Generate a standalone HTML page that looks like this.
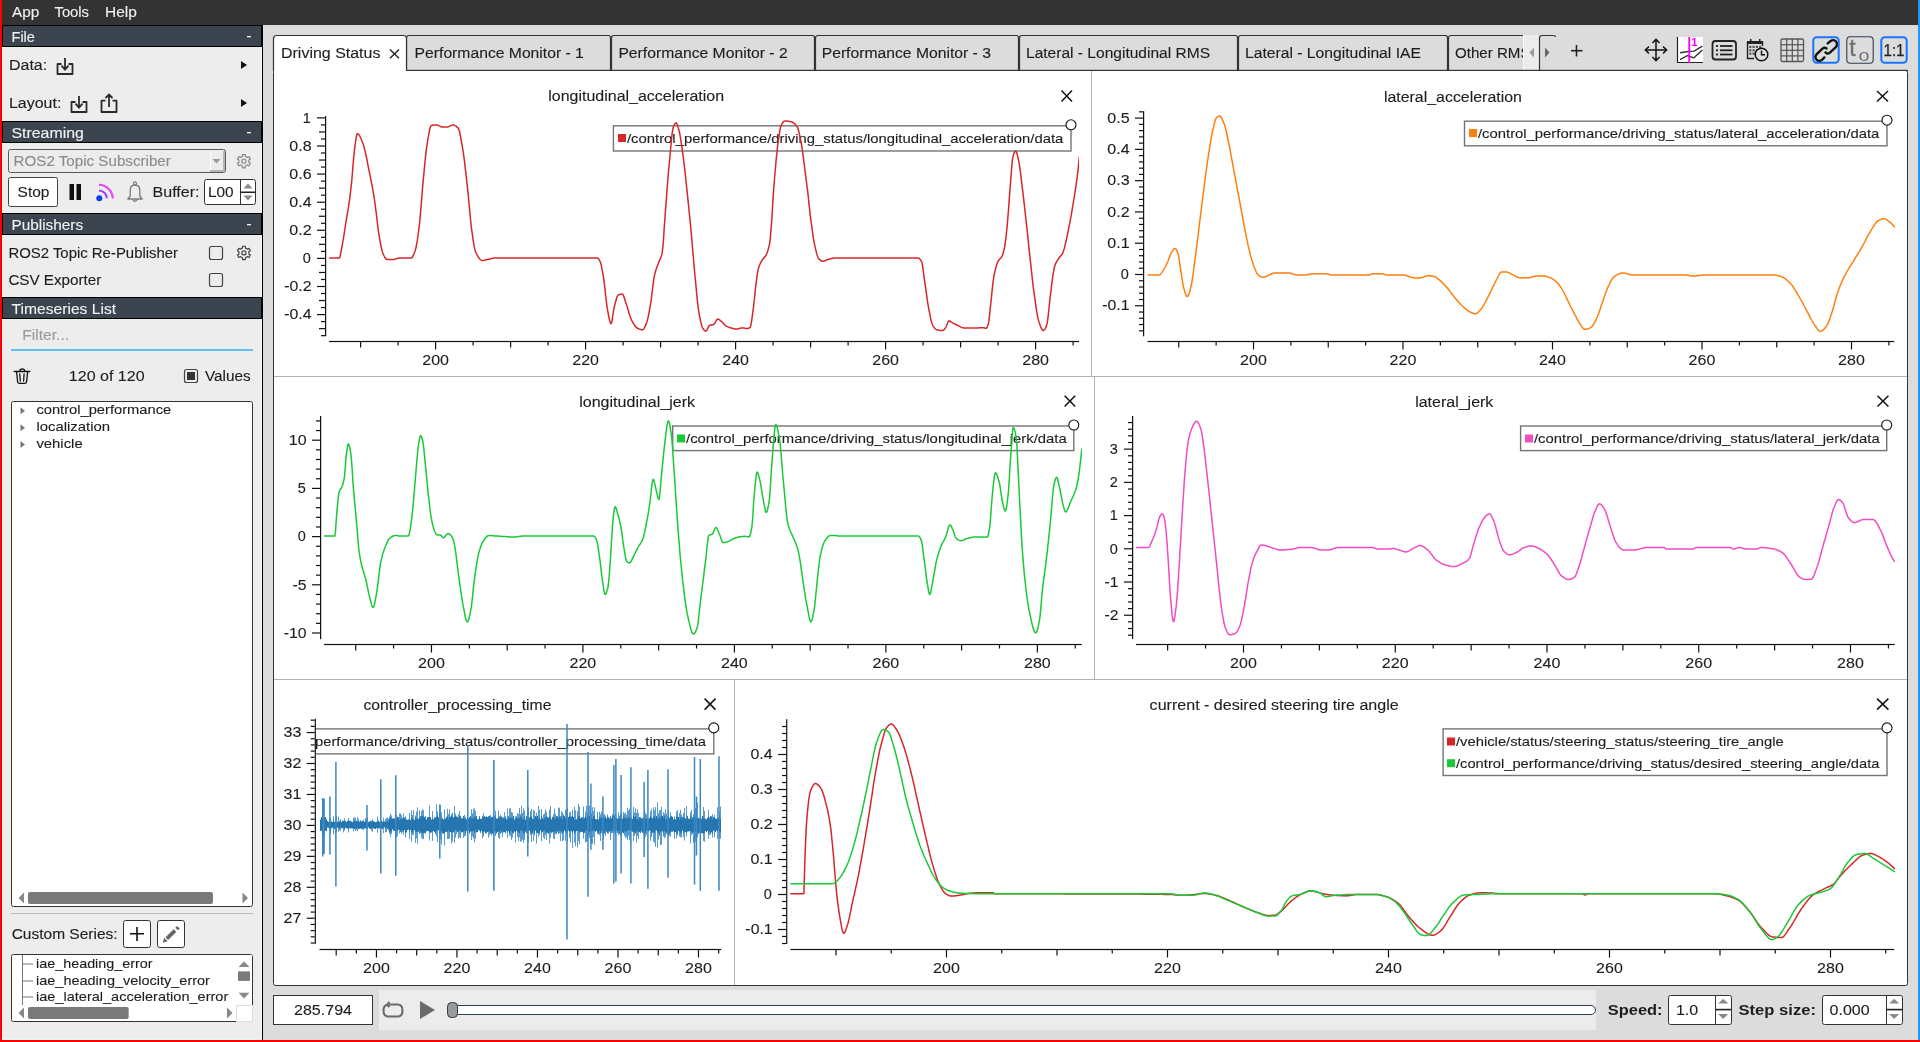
<!DOCTYPE html>
<html><head><meta charset="utf-8"><style>
html,body{margin:0;padding:0;width:1920px;height:1042px;overflow:hidden;background:#dcdcdc;font-family:"Liberation Sans",sans-serif}
</style></head><body>
<svg width="1920" height="1042" viewBox="0 0 1920 1042" style="position:absolute;left:0;top:0;will-change:transform"><g font-family="Liberation Sans"><rect x="0.00" y="0.00" width="2.00" height="1042.00" fill="#ff0000" /><rect x="0.00" y="1040.00" width="1920.00" height="2.00" fill="#ff0000" /><rect x="1918.00" y="0.00" width="2.00" height="1040.00" fill="#2196f3" /><rect x="2.00" y="0.00" width="1916.00" height="25.00" fill="#333333" /><text x="12.00" y="17.00" font-size="14.49" fill="#f0f0f0" stroke="#f0f0f0" stroke-width="0.12" textLength="27.36" lengthAdjust="spacingAndGlyphs" >App</text><text x="54.50" y="17.00" font-size="14.49" fill="#f0f0f0" stroke="#f0f0f0" stroke-width="0.12" textLength="34.50" lengthAdjust="spacingAndGlyphs" >Tools</text><text x="105.00" y="17.00" font-size="14.49" fill="#f0f0f0" stroke="#f0f0f0" stroke-width="0.12" textLength="31.92" lengthAdjust="spacingAndGlyphs" >Help</text><rect x="2.00" y="25.00" width="260.00" height="1015.00" fill="#ededed" /><rect x="2.00" y="25.00" width="1.00" height="1015.00" fill="#e6fbfb" /><rect x="2.00" y="1039.00" width="260.00" height="1.00" fill="#e6fbfb" /><rect x="262.00" y="25.00" width="1.00" height="1015.00" fill="#000" /><rect x="261.00" y="47.00" width="1.00" height="992.00" fill="#fafafa" /><rect x="2.00" y="25.00" width="261.00" height="22.00" fill="#000" /><rect x="3.00" y="26.00" width="258.00" height="20.00" fill="#3c4450" /><text x="11.50" y="41.60" font-size="14.49" fill="#f2f2f2" stroke="#f2f2f2" stroke-width="0.12" textLength="23.44" lengthAdjust="spacingAndGlyphs" >File</text><rect x="247.00" y="36.00" width="4.00" height="1.30" fill="#f2f2f2" /><text x="9.00" y="70.00" font-size="14.49" fill="#1e1e1e" stroke="#1e1e1e" stroke-width="0.12" textLength="38.16" lengthAdjust="spacingAndGlyphs" >Data:</text><path d="M61.5,64.0 H57.5 V74.0 H72.5 V64.0 H68.5" fill="none" stroke="#2a2a2a" stroke-width="1.8" stroke-linejoin="round"/><path d="M65.0,58.0 V69.6 M61.5,65.7 L65.0,69.6 L68.5,65.7" fill="none" stroke="#2a2a2a" stroke-width="1.8"/><path d="M241,61 L247,65 L241,69 Z" fill="#111"/><text x="9.00" y="108.20" font-size="14.49" fill="#1e1e1e" stroke="#1e1e1e" stroke-width="0.12" textLength="52.31" lengthAdjust="spacingAndGlyphs" >Layout:</text><path d="M75.5,102.0 H71.5 V112.0 H86.5 V102.0 H82.5" fill="none" stroke="#2a2a2a" stroke-width="1.8" stroke-linejoin="round"/><path d="M79.0,96.0 V107.6 M75.5,103.7 L79.0,107.6 L82.5,103.7" fill="none" stroke="#2a2a2a" stroke-width="1.8"/><path d="M105.5,100.7 H101.5 V112.0 H116.5 V100.7 H112.5" fill="none" stroke="#2a2a2a" stroke-width="1.8" stroke-linejoin="round"/><path d="M109.0,106.9 V95.0 M105.5,98.0 L109.0,94.5 L112.5,98.0" fill="none" stroke="#2a2a2a" stroke-width="1.8"/><path d="M241,99 L247,103 L241,107 Z" fill="#111"/><rect x="2.00" y="121.00" width="261.00" height="22.00" fill="#000" /><rect x="3.00" y="122.00" width="258.00" height="20.00" fill="#3c4450" /><text x="11.50" y="137.60" font-size="14.49" fill="#f2f2f2" stroke="#f2f2f2" stroke-width="0.12" textLength="72.31" lengthAdjust="spacingAndGlyphs" >Streaming</text><rect x="247.00" y="132.00" width="4.00" height="1.30" fill="#f2f2f2" /><rect x="8.5" y="149.5" width="217" height="23" rx="2" fill="#ececec" stroke="#5a5a5a" stroke-width="1"/><rect x="210.00" y="151.00" width="14.00" height="20.00" fill="#ececec" /><rect x="210.00" y="151.00" width="1.00" height="20.00" fill="#ffffff" /><rect x="223.00" y="151.00" width="2.00" height="21.00" fill="#b4b4b4" /><rect x="210.00" y="170.00" width="15.00" height="2.00" fill="#b4b4b4" /><path d="M212.5,159 L220.5,159 L216.5,163.5 Z" fill="#9a9a9a"/><text x="13.60" y="165.70" font-size="14.49" fill="#8c8c8c" stroke="#8c8c8c" stroke-width="0.12" textLength="157.20" lengthAdjust="spacingAndGlyphs" >ROS2 Topic Subscriber</text><path d="M241.38,156.84 L242.43,156.39 L242.49,154.55 L245.31,154.55 L245.37,156.39 L246.42,156.84 L247.33,157.52 L248.95,156.65 L250.37,159.10 L248.80,160.07 L248.93,161.20 L248.80,162.33 L250.37,163.30 L248.95,165.75 L247.33,164.88 L246.42,165.56 L245.37,166.01 L245.31,167.85 L242.49,167.85 L242.43,166.01 L241.38,165.56 L240.47,164.88 L238.85,165.75 L237.43,163.30 L239.00,162.33 L238.87,161.20 L239.00,160.07 L237.43,159.10 L238.85,156.65 L240.47,157.52Z" fill="none" stroke="#8a8a8a" stroke-width="1.2" stroke-linejoin="round"/><circle cx="243.9" cy="161.2" r="2.04" fill="none" stroke="#8a8a8a" stroke-width="1.2"/><rect x="8.5" y="177.5" width="49" height="29" rx="2" fill="#ffffff" stroke="#444" stroke-width="1"/><text x="17.60" y="196.60" font-size="14.49" fill="#1e1e1e" stroke="#1e1e1e" stroke-width="0.12" textLength="31.83" lengthAdjust="spacingAndGlyphs" >Stop</text><rect x="69.50" y="184.00" width="4.50" height="16.00" fill="#111" /><rect x="76.50" y="184.00" width="4.50" height="16.00" fill="#111" /><path d="M127.8,199 L130.2,196 L130.2,190.5 Q130.2,185 135,185 Q139.8,185 139.8,190.5 L139.8,196 L142.2,199 Z" fill="none" stroke="#7a7a7a" stroke-width="1.3" stroke-linejoin="round"/><path d="M133,199.6 Q135,203.2 137,199.6" fill="none" stroke="#7a7a7a" stroke-width="1.2"/><circle cx="135" cy="183.4" r="1.5" fill="none" stroke="#7a7a7a" stroke-width="1.1"/><circle cx="99.3" cy="198.3" r="3" fill="#0a3cf5"/><path d="M99,190.5 A8,8 0 0 1 106.8,198.3" fill="none" stroke="#a040f0" stroke-width="2.1"/><path d="M99,184.8 A14,14 0 0 1 112.8,198.6" fill="none" stroke="#e846f5" stroke-width="2.1"/><text x="152.60" y="196.60" font-size="14.49" fill="#1e1e1e" stroke="#1e1e1e" stroke-width="0.12" textLength="46.97" lengthAdjust="spacingAndGlyphs" >Buffer:</text><rect x="204.5" y="179.5" width="51" height="25" rx="2" fill="#fff" stroke="#333" stroke-width="1"/><rect x="240.00" y="180.00" width="1.00" height="24.00" fill="#333" /><rect x="241.00" y="191.50" width="14.00" height="1.50" fill="#222" /><path d="M243.5,188.5 L252.5,188.5 L248,183.5 Z" fill="#8a8a8a"/><path d="M243.5,195.5 L252.5,195.5 L248,200.5 Z" fill="#8a8a8a"/><text x="208.00" y="196.60" font-size="14.49" fill="#1e1e1e" stroke="#1e1e1e" stroke-width="0.12" textLength="25.62" lengthAdjust="spacingAndGlyphs" >L00</text><rect x="2.00" y="213.00" width="261.00" height="22.00" fill="#000" /><rect x="3.00" y="214.00" width="258.00" height="20.00" fill="#3c4450" /><text x="11.50" y="229.60" font-size="14.49" fill="#f2f2f2" stroke="#f2f2f2" stroke-width="0.12" textLength="71.58" lengthAdjust="spacingAndGlyphs" >Publishers</text><rect x="247.00" y="224.00" width="4.00" height="1.30" fill="#f2f2f2" /><text x="8.40" y="257.80" font-size="14.49" fill="#1e1e1e" stroke="#1e1e1e" stroke-width="0.12" textLength="169.70" lengthAdjust="spacingAndGlyphs" >ROS2 Topic Re-Publisher</text><rect x="209.5" y="246.5" width="13" height="13" rx="2" fill="#ededed" stroke="#444" stroke-width="1.2"/><path d="M241.38,248.54 L242.43,248.09 L242.49,246.25 L245.31,246.25 L245.37,248.09 L246.42,248.54 L247.33,249.22 L248.95,248.35 L250.37,250.80 L248.80,251.77 L248.93,252.90 L248.80,254.03 L250.37,255.00 L248.95,257.45 L247.33,256.58 L246.42,257.26 L245.37,257.71 L245.31,259.55 L242.49,259.55 L242.43,257.71 L241.38,257.26 L240.47,256.58 L238.85,257.45 L237.43,255.00 L239.00,254.03 L238.87,252.90 L239.00,251.77 L237.43,250.80 L238.85,248.35 L240.47,249.22Z" fill="none" stroke="#444" stroke-width="1.2" stroke-linejoin="round"/><circle cx="243.9" cy="252.9" r="2.04" fill="none" stroke="#444" stroke-width="1.2"/><text x="8.40" y="284.50" font-size="14.49" fill="#1e1e1e" stroke="#1e1e1e" stroke-width="0.12" textLength="92.89" lengthAdjust="spacingAndGlyphs" >CSV Exporter</text><rect x="209.5" y="273.5" width="13" height="13" rx="2" fill="#ededed" stroke="#444" stroke-width="1.2"/><rect x="2.00" y="297.00" width="261.00" height="22.00" fill="#000" /><rect x="3.00" y="298.00" width="258.00" height="20.00" fill="#3c4450" /><text x="11.50" y="313.60" font-size="14.49" fill="#f2f2f2" stroke="#f2f2f2" stroke-width="0.12" textLength="104.66" lengthAdjust="spacingAndGlyphs" >Timeseries List</text><text x="22.30" y="340.20" font-size="14.49" fill="#9a9a9a" stroke="#9a9a9a" stroke-width="0.12" textLength="46.75" lengthAdjust="spacingAndGlyphs" >Filter...</text><rect x="11.00" y="349.00" width="242.00" height="2.00" fill="#5ec2f6" /><path d="M14.2,371.5 H29.8 M19.6,371.3 A2.7,2.9 0 0 1 24.9,371.3 M16.6,372 L17.6,381.8 Q17.9,383.4 19.6,383.4 H24.6 Q26.3,383.4 26.6,381.8 L27.6,372 M19.7,374 L20.3,381 M24.1,374 L23.6,381" fill="none" stroke="#111" stroke-width="1.3" stroke-linecap="round" stroke-linejoin="round"/><text x="68.80" y="381.20" font-size="14.49" fill="#1e1e1e" stroke="#1e1e1e" stroke-width="0.12" textLength="75.84" lengthAdjust="spacingAndGlyphs" >120 of 120</text><rect x="184.5" y="369.5" width="13" height="13" rx="2" fill="#ededed" stroke="#444" stroke-width="1.2"/><rect x="187.00" y="372.00" width="8.00" height="8.00" fill="#333" /><text x="205.00" y="381.20" font-size="14.49" fill="#1e1e1e" stroke="#1e1e1e" stroke-width="0.12" textLength="45.75" lengthAdjust="spacingAndGlyphs" >Values</text><rect x="11.5" y="401.5" width="241" height="505" rx="2" fill="#fff" stroke="#333" stroke-width="1"/><path d="M20.5,407.2 L25,410.7 L20.5,414.2 Z" fill="#777"/><text x="36.40" y="414.30" font-size="13.45" fill="#1e1e1e" stroke="#1e1e1e" stroke-width="0.12" textLength="134.83" lengthAdjust="spacingAndGlyphs" >control_performance</text><path d="M20.5,424.2 L25,427.7 L20.5,431.2 Z" fill="#777"/><text x="36.40" y="431.30" font-size="13.45" fill="#1e1e1e" stroke="#1e1e1e" stroke-width="0.12" textLength="73.61" lengthAdjust="spacingAndGlyphs" >localization</text><path d="M20.5,441.0 L25,444.5 L20.5,448.0 Z" fill="#777"/><text x="36.40" y="448.10" font-size="13.45" fill="#1e1e1e" stroke="#1e1e1e" stroke-width="0.12" textLength="46.31" lengthAdjust="spacingAndGlyphs" >vehicle</text><rect x="28" y="892" width="185" height="12" rx="2" fill="#7a7a7a"/><path d="M24,892.5 L18.6,898 L24,903.5 Z" fill="#888"/><path d="M242.5,892.5 L248,898 L242.5,903.5 Z" fill="#888"/><rect x="11.00" y="913.00" width="242.00" height="1.00" fill="#bdbdbd" /><text x="11.70" y="939.00" font-size="14.49" fill="#1e1e1e" stroke="#1e1e1e" stroke-width="0.12" textLength="105.86" lengthAdjust="spacingAndGlyphs" >Custom Series:</text><rect x="123.5" y="920.5" width="27" height="27" rx="2.2" fill="#fff" stroke="#333" stroke-width="1"/><path d="M137,927 V941 M130,933.7 H144" stroke="#111" stroke-width="1.6"/><rect x="157.5" y="920.5" width="27" height="27" rx="2.2" fill="#fff" stroke="#333" stroke-width="1"/><path d="M166.8,938.6 L175,930.6 M176.6,929 L178.4,927.2" stroke="#666" stroke-width="3.7" fill="none"/><path d="M162.8,942.7 L164.2,937.8 L167.7,941.3 Z" fill="#666"/><rect x="11.5" y="954.5" width="241" height="67" rx="2" fill="#fff" stroke="#333" stroke-width="1"/><rect x="22.00" y="955.00" width="1.00" height="50.00" fill="#777" /><rect x="23.00" y="963.50" width="10.00" height="1.00" fill="#777" /><text x="36.00" y="968.00" font-size="13.45" fill="#1e1e1e" stroke="#1e1e1e" stroke-width="0.12" textLength="116.61" lengthAdjust="spacingAndGlyphs" >iae_heading_error</text><rect x="23.00" y="980.50" width="10.00" height="1.00" fill="#777" /><text x="36.00" y="985.00" font-size="13.45" fill="#1e1e1e" stroke="#1e1e1e" stroke-width="0.12" textLength="173.92" lengthAdjust="spacingAndGlyphs" >iae_heading_velocity_error</text><rect x="23.00" y="996.50" width="10.00" height="1.00" fill="#777" /><text x="36.00" y="1001.40" font-size="13.45" fill="#1e1e1e" stroke="#1e1e1e" stroke-width="0.12" textLength="192.23" lengthAdjust="spacingAndGlyphs" >iae_lateral_acceleration_error</text><rect x="236.00" y="955.00" width="16.00" height="50.00" fill="#fff" /><path d="M238.6,967 L244,961.6 L249.5,967 Z" fill="#888"/><rect x="238.00" y="971.40" width="12.00" height="9.50" fill="#7a7a7a" /><path d="M238.6,992.7 L244,998.5 L249.5,992.7 Z" fill="#888"/><rect x="28" y="1007" width="100.7" height="12" rx="2" fill="#7a7a7a"/><path d="M24,1007.5 L18.6,1013 L24,1018.5 Z" fill="#888"/><path d="M227,1007.5 L232.5,1013 L227,1018.5 Z" fill="#888"/><rect x="236.5" y="1005.5" width="16" height="16" fill="#fff" stroke="#ddd" stroke-width="1"/><rect x="273.5" y="70.5" width="1634" height="915" rx="2" fill="#fff" stroke="#333" stroke-width="1"/><path d="M406.5,70.5 V38 Q406.5,35.5 409,35.5 H608.5 Q610.5,35.5 610.5,38 V70.5" fill="#dcdcdc" stroke="#333333" stroke-width="1.2"/><text x="414.60" y="58.20" font-size="14.49" fill="#1e1e1e" stroke="#1e1e1e" stroke-width="0.12" textLength="169.25" lengthAdjust="spacingAndGlyphs" >Performance Monitor - 1</text><path d="M611.5,70.5 V38 Q611.5,35.5 614,35.5 H812.5 Q814.5,35.5 814.5,38 V70.5" fill="#dcdcdc" stroke="#333333" stroke-width="1.2"/><text x="618.40" y="58.20" font-size="14.49" fill="#1e1e1e" stroke="#1e1e1e" stroke-width="0.12" textLength="169.25" lengthAdjust="spacingAndGlyphs" >Performance Monitor - 2</text><path d="M815.5,70.5 V38 Q815.5,35.5 818,35.5 H1016.5 Q1018.5,35.5 1018.5,38 V70.5" fill="#dcdcdc" stroke="#333333" stroke-width="1.2"/><text x="821.70" y="58.20" font-size="14.49" fill="#1e1e1e" stroke="#1e1e1e" stroke-width="0.12" textLength="169.25" lengthAdjust="spacingAndGlyphs" >Performance Monitor - 3</text><path d="M1019.5,70.5 V38 Q1019.5,35.5 1022,35.5 H1235.5 Q1237.5,35.5 1237.5,38 V70.5" fill="#dcdcdc" stroke="#333333" stroke-width="1.2"/><text x="1026.00" y="58.20" font-size="14.49" fill="#1e1e1e" stroke="#1e1e1e" stroke-width="0.12" textLength="184.06" lengthAdjust="spacingAndGlyphs" >Lateral - Longitudinal RMS</text><path d="M1238.5,70.5 V38 Q1238.5,35.5 1241,35.5 H1445.5 Q1447.5,35.5 1447.5,38 V70.5" fill="#dcdcdc" stroke="#333333" stroke-width="1.2"/><text x="1245.00" y="58.20" font-size="14.49" fill="#1e1e1e" stroke="#1e1e1e" stroke-width="0.12" textLength="175.92" lengthAdjust="spacingAndGlyphs" >Lateral - Longitudinal IAE</text><defs><clipPath id="tabclip"><rect x="1448" y="30" width="75" height="45"/></clipPath></defs><path d="M1448.5,70.5 V38 Q1448.5,35.5 1451,35.5 H1530" fill="#dcdcdc" stroke="#333333" stroke-width="1.2" clip-path="url(#tabclip)"/><g clip-path="url(#tabclip)"><text x="1455.00" y="58.20" font-size="14.49" fill="#1e1e1e" stroke="#1e1e1e" stroke-width="0.12" textLength="120.77" lengthAdjust="spacingAndGlyphs" >Other RMS Errors</text></g><rect x="1523.00" y="35.00" width="16.00" height="35.00" fill="#ececec" /><rect x="1523.00" y="35.00" width="1.00" height="35.00" fill="#fafafa" /><path d="M1534,47.5 L1529.5,52.5 L1534,57.5 Z" fill="#9a9a9a"/><path d="M1539.5,70.5 V38 Q1539.5,35.5 1542,35.5 H1553 Q1555.5,35.5 1555.5,37" fill="none" stroke="#333333" stroke-width="1.2"/><path d="M1545,47.5 L1549.5,52.5 L1545,57.5 Z" fill="#666"/><rect x="406.00" y="69.80" width="1502.00" height="1.20" fill="#333333" /><path d="M273.5,71 V38.5 Q273.5,35.5 276.5,35.5 H403.5 Q406.5,35.5 406.5,38.5 V71" fill="#fff" stroke="#333333" stroke-width="1.2"/><rect x="274.20" y="70.00" width="131.60" height="2.00" fill="#fff" /><text x="281.00" y="58.20" font-size="14.49" fill="#1e1e1e" stroke="#1e1e1e" stroke-width="0.12" textLength="99.42" lengthAdjust="spacingAndGlyphs" >Driving Status</text><line x1="390.00" y1="49.50" x2="399.00" y2="58.30" stroke="#222" stroke-width="1.4" /><line x1="399.00" y1="49.50" x2="390.00" y2="58.30" stroke="#222" stroke-width="1.4" /><line x1="1576.50" y1="45.00" x2="1576.50" y2="56.50" stroke="#222" stroke-width="1.6" /><line x1="1571.00" y1="50.70" x2="1582.50" y2="50.70" stroke="#222" stroke-width="1.6" /><path d="M1656,39.5 V60.5 M1645.5,50 H1666.5 M1652.5,43 L1656,39.3 L1659.5,43 M1652.5,57 L1656,60.7 L1659.5,57 M1649,46.5 L1645.3,50 L1649,53.5 M1663,46.5 L1666.7,50 L1663,53.5" fill="none" stroke="#111" stroke-width="1.5"/><rect x="1677.00" y="37.00" width="26.00" height="26.00" fill="#fff" /><path d="M1677.5,37 V62.5 H1703" fill="none" stroke="#222" stroke-width="1.2"/><path d="M1680.1,52.8 L1686.7,51.7 L1694,51.1 L1702.4,46.2 M1680.1,59.6 L1687.4,55.5 L1693.6,57.9 L1702.4,49.9" fill="none" stroke="#333" stroke-width="1.4" stroke-linejoin="round"/><rect x="1688.30" y="37.00" width="1.90" height="26.00" fill="#ff00ff" /><text x="1691.3" y="45.6" font-size="10.5" font-weight="bold" fill="#ff00ff" textLength="6.3" lengthAdjust="spacingAndGlyphs">1</text><rect x="1712.5" y="41" width="23.5" height="18.5" rx="3" fill="none" stroke="#222" stroke-width="1.8"/><rect x="1716.00" y="45.10" width="2.00" height="1.80" fill="#222" /><rect x="1720.00" y="45.10" width="12.50" height="1.80" fill="#222" /><rect x="1716.00" y="49.40" width="2.00" height="1.80" fill="#222" /><rect x="1720.00" y="49.40" width="12.50" height="1.80" fill="#222" /><rect x="1716.00" y="53.60" width="2.00" height="1.80" fill="#222" /><rect x="1720.00" y="53.60" width="12.50" height="1.80" fill="#222" /><path d="M1747.5,42 H1762.5 V46 M1747.5,42 V58.5 H1754" fill="none" stroke="#222" stroke-width="1.4"/><rect x="1747.00" y="41.00" width="16.00" height="3.00" fill="#222" /><rect x="1750.00" y="39.00" width="1.50" height="3.00" fill="#222" /><rect x="1759.00" y="39.00" width="1.50" height="3.00" fill="#222" /><rect x="1749.20" y="45.80" width="2.20" height="2.20" fill="#555" /><rect x="1749.20" y="49.20" width="2.20" height="2.20" fill="#555" /><rect x="1749.20" y="52.60" width="2.20" height="2.20" fill="#555" /><rect x="1752.50" y="45.80" width="2.20" height="2.20" fill="#555" /><rect x="1752.50" y="49.20" width="2.20" height="2.20" fill="#555" /><rect x="1752.50" y="52.60" width="2.20" height="2.20" fill="#555" /><rect x="1755.80" y="45.80" width="2.20" height="2.20" fill="#555" /><rect x="1755.80" y="49.20" width="2.20" height="2.20" fill="#555" /><rect x="1755.80" y="52.60" width="2.20" height="2.20" fill="#555" /><rect x="1759.10" y="45.80" width="2.20" height="2.20" fill="#555" /><rect x="1759.10" y="49.20" width="2.20" height="2.20" fill="#555" /><rect x="1759.10" y="52.60" width="2.20" height="2.20" fill="#555" /><circle cx="1761.5" cy="54.5" r="6.3" fill="#dcdcdc" stroke="#111" stroke-width="1.5"/><path d="M1761.5,50.5 V54.8 H1765" fill="none" stroke="#111" stroke-width="1.4"/><rect x="1781" y="39" width="22.5" height="22.5" rx="1.5" fill="none" stroke="#555" stroke-width="1.3"/><rect x="1786.10" y="39.00" width="1.20" height="22.50" fill="#555" /><rect x="1781.00" y="44.10" width="22.50" height="1.20" fill="#555" /><rect x="1791.70" y="39.00" width="1.20" height="22.50" fill="#555" /><rect x="1781.00" y="49.70" width="22.50" height="1.20" fill="#555" /><rect x="1797.30" y="39.00" width="1.20" height="22.50" fill="#555" /><rect x="1781.00" y="55.30" width="22.50" height="1.20" fill="#555" /><rect x="1813.3" y="37.3" width="25.4" height="25.4" rx="3.5" fill="#dcdcdc" stroke="#1a73ff" stroke-width="2"/><path transform="translate(1826,50.5) scale(0.9) translate(-1826,-50.5)" d="M1827.8,42.6 L1830.8,40.2 Q1834.5,37.6 1837.2,40.6 Q1839.6,44 1836.4,47.4 L1830,53.2 Q1827.6,55 1825.4,52.6 M1826.6,48.2 Q1824.4,46.4 1821.8,48.6 L1816,54.2 Q1812.8,57.6 1815.4,60.6 Q1818.6,63.4 1821.8,60.6 L1824.2,58.2" fill="none" stroke="#111" stroke-width="2.6" stroke-linecap="round" stroke-linejoin="round"/><rect x="1846.8" y="36.8" width="26.4" height="26.4" rx="3.5" fill="#dcdcdc" stroke="#2c3e50" stroke-width="1.1"/><text x="1849.3" y="56.3" font-size="23" fill="#737373" stroke="#737373" stroke-width="0.4">t</text><text x="1858.5" y="60.5" font-size="16" fill="#737373" textLength="11" lengthAdjust="spacingAndGlyphs">o</text><rect x="1881.3" y="37.3" width="25.4" height="25.4" rx="3.5" fill="#dcdcdc" stroke="#1a73ff" stroke-width="2"/><text x="1883.5" y="56" font-size="17" fill="#222" stroke="#222" stroke-width="0.25" textLength="21" lengthAdjust="spacingAndGlyphs">1:1</text><rect x="1091.00" y="71.00" width="1.00" height="305.00" fill="#b4b4b4" /><rect x="274.00" y="376.00" width="1633.00" height="1.00" fill="#b4b4b4" /><rect x="1094.00" y="377.00" width="1.00" height="302.00" fill="#b4b4b4" /><rect x="274.00" y="679.00" width="1633.00" height="1.00" fill="#b4b4b4" /><rect x="734.00" y="680.00" width="1.00" height="305.00" fill="#b4b4b4" /><rect x="273.5" y="995.5" width="99" height="29" fill="#fff" stroke="#333" stroke-width="1"/><text x="294.05" y="1015.00" font-size="14.49" fill="#1e1e1e" stroke="#1e1e1e" stroke-width="0.12" textLength="57.91" lengthAdjust="spacingAndGlyphs" >285.794</text><rect x="379.00" y="990.00" width="1217.00" height="40.00" fill="#ececec" /><path d="M389,1004.5 H397.5 Q402.5,1004.5 402.5,1010.5 Q402.5,1016.5 397.5,1016.5 H388.5 Q383.5,1016.5 383.5,1010.5 Q383.5,1005.5 387.5,1004.8 M389.5,1002 L387,1004.6 L389.5,1007" fill="none" stroke="#6a6a6a" stroke-width="2.1"/><path d="M420,1001 L435,1010 L420,1019 Z" fill="#6a6a6a"/><rect x="450.5" y="1005.5" width="1145" height="9" rx="4.5" fill="#fff" stroke="#2c3e50" stroke-width="1"/><rect x="447.5" y="1002.5" width="10" height="15" rx="4" fill="#9a9a9a" stroke="#2c3e50" stroke-width="1"/><text x="1607.80" y="1015.30" font-size="14.49" font-weight="bold" fill="#1e1e1e" textLength="54.72" lengthAdjust="spacingAndGlyphs" >Speed:</text><rect x="1668.5" y="995.5" width="63.0" height="29" rx="2" fill="#fff" stroke="#333" stroke-width="1"/><rect x="1715.00" y="996.00" width="1.00" height="28.00" fill="#333" /><rect x="1715.50" y="1008.80" width="15.50" height="1.60" fill="#222" /><path d="M1718.2,1003.5 L1728.2,1003.5 L1723.2,998.8 Z" fill="#8a8a8a"/><path d="M1718.2,1014 L1728.2,1014 L1723.2,1019 Z" fill="#8a8a8a"/><text x="1675.90" y="1015.30" font-size="14.49" fill="#1e1e1e" stroke="#1e1e1e" stroke-width="0.12" textLength="22.27" lengthAdjust="spacingAndGlyphs" >1.0</text><rect x="1822.5" y="995.5" width="80.0" height="29" rx="2" fill="#fff" stroke="#333" stroke-width="1"/><rect x="1886.00" y="996.00" width="1.00" height="28.00" fill="#333" /><rect x="1886.50" y="1008.80" width="15.50" height="1.60" fill="#222" /><path d="M1889.2,1003.5 L1899.2,1003.5 L1894.2,998.8 Z" fill="#8a8a8a"/><path d="M1889.2,1014 L1899.2,1014 L1894.2,1019 Z" fill="#8a8a8a"/><text x="1829.60" y="1015.30" font-size="14.49" fill="#1e1e1e" stroke="#1e1e1e" stroke-width="0.12" textLength="40.09" lengthAdjust="spacingAndGlyphs" >0.000</text><text x="1738.50" y="1015.30" font-size="14.49" font-weight="bold" fill="#1e1e1e" textLength="77.55" lengthAdjust="spacingAndGlyphs" >Step size:</text><text x="548.30" y="100.80" font-size="14.49" fill="#1e1e1e" stroke="#1e1e1e" stroke-width="0.12" textLength="175.83" lengthAdjust="spacingAndGlyphs" >longitudinal_acceleration</text><line x1="1061.50" y1="90.50" x2="1072.00" y2="101.50" stroke="#111" stroke-width="1.5" /><line x1="1072.00" y1="90.50" x2="1061.50" y2="101.50" stroke="#111" stroke-width="1.5" /><rect x="325.00" y="116.00" width="1.20" height="220.30" fill="#111" /><rect x="321.00" y="335.07" width="4.00" height="1.20" fill="#111" /><rect x="319.00" y="328.05" width="6.00" height="1.20" fill="#111" /><rect x="321.00" y="321.02" width="4.00" height="1.20" fill="#111" /><text x="284.27" y="319.30" font-size="14.49" fill="#1e1e1e" stroke="#1e1e1e" stroke-width="0.12" textLength="27.33" lengthAdjust="spacingAndGlyphs" >-0.4</text><rect x="317.00" y="314.00" width="8.00" height="1.20" fill="#111" /><rect x="321.00" y="306.97" width="4.00" height="1.20" fill="#111" /><rect x="319.00" y="299.95" width="6.00" height="1.20" fill="#111" /><rect x="321.00" y="292.92" width="4.00" height="1.20" fill="#111" /><text x="284.27" y="291.20" font-size="14.49" fill="#1e1e1e" stroke="#1e1e1e" stroke-width="0.12" textLength="27.33" lengthAdjust="spacingAndGlyphs" >-0.2</text><rect x="317.00" y="285.90" width="8.00" height="1.20" fill="#111" /><rect x="321.00" y="278.87" width="4.00" height="1.20" fill="#111" /><rect x="319.00" y="271.85" width="6.00" height="1.20" fill="#111" /><rect x="321.00" y="264.82" width="4.00" height="1.20" fill="#111" /><text x="302.68" y="263.10" font-size="14.49" fill="#1e1e1e" stroke="#1e1e1e" stroke-width="0.12"  >0</text><rect x="317.00" y="257.80" width="8.00" height="1.20" fill="#111" /><rect x="321.00" y="250.77" width="4.00" height="1.20" fill="#111" /><rect x="319.00" y="243.75" width="6.00" height="1.20" fill="#111" /><rect x="321.00" y="236.72" width="4.00" height="1.20" fill="#111" /><text x="289.33" y="235.00" font-size="14.49" fill="#1e1e1e" stroke="#1e1e1e" stroke-width="0.12" textLength="22.27" lengthAdjust="spacingAndGlyphs" >0.2</text><rect x="317.00" y="229.70" width="8.00" height="1.20" fill="#111" /><rect x="321.00" y="222.67" width="4.00" height="1.20" fill="#111" /><rect x="319.00" y="215.65" width="6.00" height="1.20" fill="#111" /><rect x="321.00" y="208.62" width="4.00" height="1.20" fill="#111" /><text x="289.33" y="206.90" font-size="14.49" fill="#1e1e1e" stroke="#1e1e1e" stroke-width="0.12" textLength="22.27" lengthAdjust="spacingAndGlyphs" >0.4</text><rect x="317.00" y="201.60" width="8.00" height="1.20" fill="#111" /><rect x="321.00" y="194.57" width="4.00" height="1.20" fill="#111" /><rect x="319.00" y="187.55" width="6.00" height="1.20" fill="#111" /><rect x="321.00" y="180.52" width="4.00" height="1.20" fill="#111" /><text x="289.33" y="178.80" font-size="14.49" fill="#1e1e1e" stroke="#1e1e1e" stroke-width="0.12" textLength="22.27" lengthAdjust="spacingAndGlyphs" >0.6</text><rect x="317.00" y="173.50" width="8.00" height="1.20" fill="#111" /><rect x="321.00" y="166.47" width="4.00" height="1.20" fill="#111" /><rect x="319.00" y="159.45" width="6.00" height="1.20" fill="#111" /><rect x="321.00" y="152.42" width="4.00" height="1.20" fill="#111" /><text x="289.33" y="150.70" font-size="14.49" fill="#1e1e1e" stroke="#1e1e1e" stroke-width="0.12" textLength="22.27" lengthAdjust="spacingAndGlyphs" >0.8</text><rect x="317.00" y="145.40" width="8.00" height="1.20" fill="#111" /><rect x="321.00" y="138.37" width="4.00" height="1.20" fill="#111" /><rect x="319.00" y="131.35" width="6.00" height="1.20" fill="#111" /><rect x="321.00" y="124.32" width="4.00" height="1.20" fill="#111" /><text x="302.68" y="122.60" font-size="14.49" fill="#1e1e1e" stroke="#1e1e1e" stroke-width="0.12"  >1</text><rect x="317.00" y="117.30" width="8.00" height="1.20" fill="#111" /><rect x="329.10" y="340.90" width="749.90" height="1.20" fill="#111" /><rect x="360.00" y="341.50" width="1.20" height="6.00" fill="#111" /><rect x="397.50" y="341.50" width="1.20" height="4.00" fill="#111" /><text x="422.23" y="364.90" font-size="14.49" fill="#1e1e1e" stroke="#1e1e1e" stroke-width="0.12" textLength="26.73" lengthAdjust="spacingAndGlyphs" >200</text><rect x="435.00" y="341.50" width="1.20" height="8.00" fill="#111" /><rect x="472.50" y="341.50" width="1.20" height="4.00" fill="#111" /><rect x="510.00" y="341.50" width="1.20" height="6.00" fill="#111" /><rect x="547.50" y="341.50" width="1.20" height="4.00" fill="#111" /><text x="572.23" y="364.90" font-size="14.49" fill="#1e1e1e" stroke="#1e1e1e" stroke-width="0.12" textLength="26.73" lengthAdjust="spacingAndGlyphs" >220</text><rect x="585.00" y="341.50" width="1.20" height="8.00" fill="#111" /><rect x="622.50" y="341.50" width="1.20" height="4.00" fill="#111" /><rect x="660.00" y="341.50" width="1.20" height="6.00" fill="#111" /><rect x="697.50" y="341.50" width="1.20" height="4.00" fill="#111" /><text x="722.23" y="364.90" font-size="14.49" fill="#1e1e1e" stroke="#1e1e1e" stroke-width="0.12" textLength="26.73" lengthAdjust="spacingAndGlyphs" >240</text><rect x="735.00" y="341.50" width="1.20" height="8.00" fill="#111" /><rect x="772.50" y="341.50" width="1.20" height="4.00" fill="#111" /><rect x="810.00" y="341.50" width="1.20" height="6.00" fill="#111" /><rect x="847.50" y="341.50" width="1.20" height="4.00" fill="#111" /><text x="872.23" y="364.90" font-size="14.49" fill="#1e1e1e" stroke="#1e1e1e" stroke-width="0.12" textLength="26.73" lengthAdjust="spacingAndGlyphs" >260</text><rect x="885.00" y="341.50" width="1.20" height="8.00" fill="#111" /><rect x="922.50" y="341.50" width="1.20" height="4.00" fill="#111" /><rect x="960.00" y="341.50" width="1.20" height="6.00" fill="#111" /><rect x="997.50" y="341.50" width="1.20" height="4.00" fill="#111" /><text x="1022.23" y="364.90" font-size="14.49" fill="#1e1e1e" stroke="#1e1e1e" stroke-width="0.12" textLength="26.73" lengthAdjust="spacingAndGlyphs" >280</text><rect x="1035.00" y="341.50" width="1.20" height="8.00" fill="#111" /><rect x="1072.50" y="341.50" width="1.20" height="4.00" fill="#111" /><rect x="613.40" y="125.80" width="457.60" height="25.20" fill="#fff" fill-opacity="0.85" stroke="#747474" stroke-width="1.4"/><rect x="618.00" y="134.00" width="8.00" height="8.00" fill="#d62728" /><text x="627.00" y="142.50" font-size="13.45" fill="#1e1e1e" stroke="#1e1e1e" stroke-width="0.12" textLength="436.34" lengthAdjust="spacingAndGlyphs" >/control_performance/driving_status/longitudinal_acceleration/data</text><circle cx="1071.00" cy="124.80" r="5" fill="#fff" stroke="#111" stroke-width="1.1"/><defs><clipPath id="c1"><rect x="326" y="100" width="753" height="240"/></clipPath></defs><g clip-path="url(#c1)"><polyline points="329.1,258.1 329.7,258.1 330.2,258.1 330.7,258.1 331.2,258.1 331.7,258.1 332.2,258.1 332.7,258.1 333.2,258.1 333.7,258.1 334.2,258.1 334.8,258.1 335.3,258.1 335.8,258.1 336.3,258.1 336.8,258.1 337.3,258.1 337.8,258.1 338.3,258.1 338.8,258.1 339.4,258.1 340.0,256.8 340.6,253.8 341.2,250.5 341.7,248.0 342.2,245.3 342.7,242.3 343.3,239.2 343.8,236.0 344.3,232.8 344.8,229.5 345.3,226.3 345.8,223.0 346.3,219.8 346.9,216.6 347.4,213.4 348.0,210.2 348.5,206.8 349.0,203.3 349.6,199.6 350.1,195.6 350.6,191.4 351.1,186.8 351.7,181.4 352.2,175.5 352.7,169.4 353.2,163.3 353.7,157.6 354.2,152.5 354.7,148.4 355.2,144.4 355.8,140.4 356.3,137.0 356.8,134.5 357.4,133.6 357.9,133.7 358.4,134.2 359.0,134.8 359.5,135.6 360.1,136.7 360.6,137.8 361.1,139.0 361.7,140.3 362.2,141.7 362.7,143.0 363.3,144.4 363.8,146.1 364.3,147.9 364.8,150.0 365.3,152.2 365.8,154.5 366.4,157.0 366.9,159.5 367.4,162.1 367.9,164.8 368.4,167.4 368.9,170.0 369.5,172.6 370.0,175.2 370.5,177.9 371.1,180.6 371.6,183.4 372.2,186.2 372.7,189.2 373.2,192.2 373.8,195.4 374.3,198.7 374.8,202.2 375.3,205.7 375.8,209.8 376.4,214.2 376.9,218.6 377.4,223.1 377.9,227.3 378.4,231.1 378.9,234.4 379.4,237.4 379.9,240.3 380.4,243.0 380.9,245.6 381.4,248.0 381.9,250.1 382.4,251.9 382.9,253.2 383.4,254.4 383.9,255.5 384.4,256.5 384.9,257.5 385.4,258.3 385.9,258.9 386.4,259.3 386.9,259.4 387.5,259.4 388.0,259.4 388.5,259.4 389.0,259.4 389.5,259.4 390.0,259.4 390.6,259.4 391.1,259.4 391.6,259.4 392.1,259.4 392.6,259.4 393.1,259.4 393.7,259.4 394.2,259.4 394.7,259.3 395.3,259.1 395.8,258.9 396.3,258.7 396.9,258.5 397.4,258.4 398.0,258.2 398.5,258.1 399.0,258.1 399.5,258.1 400.0,258.1 400.5,258.1 401.0,258.1 401.6,258.1 402.1,258.1 402.6,258.1 403.1,258.1 403.6,258.1 404.1,258.1 404.6,258.1 405.1,258.1 405.6,258.1 406.1,258.1 406.6,258.1 407.1,258.1 407.6,258.1 408.1,258.1 408.6,258.1 409.1,258.1 409.6,258.1 410.1,258.1 410.6,258.1 411.1,258.1 411.6,257.9 412.1,257.4 412.6,256.7 413.1,255.7 413.6,254.6 414.2,253.3 414.7,252.0 415.2,250.5 415.7,248.8 416.2,246.6 416.7,244.0 417.2,241.0 417.7,237.6 418.2,234.0 418.7,230.3 419.2,226.3 419.7,221.9 420.2,216.7 420.7,210.9 421.2,204.7 421.7,198.4 422.2,192.1 422.7,186.1 423.2,180.6 423.7,175.4 424.2,170.1 424.7,164.8 425.2,159.7 425.7,154.8 426.2,150.3 426.8,146.3 427.3,143.0 427.8,140.0 428.3,137.0 428.8,134.1 429.3,131.4 429.8,129.1 430.3,127.3 430.8,126.0 431.3,125.5 431.8,125.4 432.4,125.3 432.9,125.3 433.4,125.2 434.0,125.1 434.5,125.1 435.1,125.0 435.6,125.0 436.1,125.0 436.7,125.0 437.2,125.1 437.7,125.2 438.3,125.4 438.8,125.7 439.4,125.9 439.9,126.2 440.4,126.5 441.0,126.7 441.5,126.8 442.0,126.9 442.6,126.9 443.1,126.9 443.7,126.9 444.2,126.9 444.7,126.9 445.3,126.9 445.8,126.9 446.3,126.9 446.9,126.9 447.4,126.9 448.0,126.8 448.5,126.7 449.0,126.5 449.6,126.2 450.1,125.9 450.6,125.7 451.2,125.4 451.7,125.2 452.3,125.1 452.8,125.0 453.3,125.0 453.9,125.1 454.4,125.3 454.9,125.6 455.5,125.9 456.0,126.2 456.6,126.7 457.1,127.1 457.6,127.7 458.2,128.2 458.7,129.1 459.2,130.5 459.7,132.4 460.2,134.7 460.7,137.3 461.2,140.0 461.7,142.9 462.2,145.7 462.7,148.9 463.3,152.4 463.8,156.3 464.4,160.5 464.9,164.9 465.4,169.5 466.0,174.2 466.5,179.0 467.0,183.9 467.6,188.7 468.1,193.5 468.6,198.7 469.1,204.2 469.6,209.7 470.1,215.2 470.6,220.3 471.1,225.0 471.6,229.0 472.1,232.7 472.6,236.3 473.1,239.8 473.6,243.0 474.1,245.9 474.6,248.4 475.1,250.4 475.6,251.9 476.2,253.0 476.7,254.1 477.2,255.1 477.7,256.0 478.2,256.9 478.7,257.7 479.3,258.4 479.8,259.0 480.3,259.5 480.8,259.9 481.3,260.2 481.8,260.4 482.4,260.5 482.9,260.5 483.4,260.4 484.0,260.3 484.5,260.2 485.1,260.1 485.6,259.9 486.1,259.8 486.7,259.7 487.2,259.5 487.7,259.4 488.3,259.3 488.8,259.2 489.3,259.0 489.8,258.9 490.3,258.8 490.8,258.6 491.4,258.5 491.9,258.4 492.4,258.3 492.9,258.2 493.4,258.1 493.9,258.1 494.5,258.1 495.0,258.1 495.5,258.1 496.0,258.1 496.5,258.1 497.0,258.1 497.5,258.1 498.1,258.1 498.6,258.1 499.1,258.1 499.6,258.1 500.1,258.1 500.6,258.1 501.1,258.1 501.7,258.1 502.2,258.1 502.7,258.1 503.2,258.1 503.7,258.1 504.2,258.1 504.7,258.1 505.3,258.1 505.8,258.1 506.3,258.1 506.8,258.1 507.3,258.1 507.8,258.1 508.3,258.1 508.9,258.1 509.4,258.1 509.9,258.1 510.4,258.1 510.9,258.1 511.4,258.1 511.9,258.1 512.4,258.1 512.9,258.1 513.4,258.1 513.9,258.1 514.4,258.1 514.9,258.1 515.5,258.1 516.0,258.1 516.5,258.1 517.0,258.1 517.5,258.1 518.0,258.1 518.5,258.1 519.0,258.1 519.5,258.1 520.0,258.1 520.5,258.1 521.0,258.1 521.5,258.1 522.0,258.1 522.5,258.1 523.0,258.1 523.5,258.1 524.0,258.1 524.5,258.1 525.0,258.1 525.5,258.1 526.0,258.1 526.5,258.1 527.0,258.1 527.5,258.1 528.0,258.1 528.5,258.1 529.0,258.1 529.5,258.1 530.0,258.1 530.5,258.1 531.0,258.1 531.5,258.1 532.0,258.1 532.5,258.1 533.0,258.1 533.5,258.1 534.0,258.1 534.5,258.1 535.0,258.1 535.5,258.1 536.0,258.1 536.5,258.1 537.0,258.1 537.5,258.1 538.1,258.1 538.6,258.1 539.1,258.1 539.6,258.1 540.1,258.1 540.6,258.1 541.1,258.1 541.6,258.1 542.1,258.1 542.6,258.1 543.1,258.1 543.6,258.1 544.1,258.1 544.6,258.1 545.1,258.1 545.6,258.1 546.1,258.1 546.6,258.1 547.1,258.1 547.6,258.1 548.1,258.1 548.6,258.1 549.1,258.1 549.6,258.1 550.1,258.1 550.6,258.1 551.1,258.1 551.6,258.1 552.1,258.1 552.6,258.1 553.1,258.1 553.6,258.1 554.1,258.1 554.6,258.1 555.1,258.1 555.6,258.1 556.1,258.1 556.6,258.1 557.1,258.1 557.6,258.1 558.1,258.1 558.6,258.1 559.1,258.1 559.6,258.1 560.1,258.1 560.7,258.1 561.2,258.1 561.7,258.1 562.2,258.1 562.7,258.1 563.2,258.1 563.7,258.1 564.2,258.1 564.7,258.1 565.2,258.1 565.7,258.1 566.2,258.1 566.7,258.1 567.2,258.1 567.7,258.1 568.2,258.1 568.7,258.1 569.2,258.1 569.7,258.1 570.2,258.1 570.7,258.1 571.2,258.1 571.7,258.1 572.2,258.1 572.7,258.1 573.2,258.1 573.7,258.1 574.2,258.1 574.7,258.1 575.2,258.1 575.7,258.1 576.2,258.1 576.7,258.1 577.2,258.1 577.7,258.1 578.2,258.1 578.7,258.1 579.2,258.1 579.7,258.1 580.2,258.1 580.7,258.1 581.2,258.1 581.7,258.1 582.2,258.1 582.7,258.1 583.2,258.1 583.8,258.1 584.3,258.1 584.8,258.1 585.3,258.1 585.8,258.1 586.3,258.1 586.8,258.1 587.3,258.1 587.8,258.1 588.3,258.1 588.8,258.1 589.3,258.1 589.8,258.1 590.3,258.1 590.8,258.1 591.3,258.1 591.8,258.1 592.3,258.1 592.8,258.1 593.3,258.1 593.8,258.1 594.3,258.1 594.8,258.1 595.3,258.1 595.8,258.1 596.3,258.1 596.8,258.1 597.3,258.1 597.8,258.2 598.4,258.7 598.9,259.4 599.5,260.3 600.0,261.3 600.6,262.8 601.2,264.9 601.7,267.6 602.3,270.7 602.9,274.0 603.5,277.4 604.0,280.8 604.5,284.8 605.0,289.2 605.5,293.8 606.0,298.4 606.5,302.7 607.0,306.6 607.5,309.7 608.1,312.9 608.7,316.0 609.3,319.0 609.9,321.4 610.4,323.0 611.0,323.7 611.6,322.7 612.1,320.3 612.6,316.9 613.2,313.1 613.7,309.7 614.2,307.0 614.8,305.0 615.3,303.0 615.8,301.0 616.3,299.2 616.8,297.6 617.3,296.3 617.8,295.3 618.3,294.9 618.8,294.7 619.3,294.6 619.8,294.4 620.3,294.3 620.8,294.2 621.3,294.1 621.8,294.1 622.3,294.1 622.8,294.4 623.3,295.2 623.8,296.3 624.3,297.8 624.8,299.5 625.3,301.2 625.8,302.8 626.3,304.3 626.9,305.9 627.4,307.5 628.0,309.3 628.5,311.1 629.0,312.9 629.6,314.7 630.1,316.4 630.6,317.9 631.2,319.3 631.7,320.4 632.3,321.4 632.8,322.4 633.3,323.4 633.9,324.3 634.4,325.1 634.9,325.9 635.5,326.5 636.0,327.1 636.6,327.6 637.1,328.0 637.6,328.3 638.2,328.5 638.7,328.8 639.2,329.1 639.8,329.3 640.3,329.5 640.9,329.6 641.4,329.7 641.9,329.8 642.5,329.8 643.0,329.7 643.5,329.3 644.0,328.6 644.5,327.7 645.0,326.7 645.5,325.6 646.0,324.4 646.5,323.1 647.0,321.7 647.5,319.9 648.0,317.7 648.5,315.3 649.0,312.8 649.5,310.0 650.0,307.2 650.5,304.3 651.0,301.1 651.5,297.3 652.0,293.1 652.6,288.8 653.1,284.6 653.6,280.7 654.1,277.3 654.6,274.7 655.1,272.7 655.6,271.0 656.1,269.4 656.6,268.0 657.1,266.6 657.6,265.3 658.1,264.0 658.6,262.6 659.2,261.2 659.8,259.9 660.3,258.6 660.9,257.2 661.5,255.5 662.1,253.2 662.6,249.5 663.2,243.6 663.7,236.3 664.2,228.3 664.8,220.3 665.3,212.9 665.8,206.4 666.3,199.7 666.8,193.0 667.3,186.2 667.8,179.6 668.3,173.3 668.9,167.3 669.4,161.8 669.9,156.5 670.4,151.0 670.9,145.6 671.4,140.4 671.9,135.7 672.4,131.8 672.9,128.8 673.4,126.9 673.9,125.6 674.5,124.5 675.0,123.6 675.5,123.1 676.1,122.8 676.6,123.3 677.2,124.3 677.7,125.9 678.2,127.7 678.8,129.6 679.3,131.5 679.8,134.0 680.3,136.7 680.8,139.8 681.3,143.1 681.8,146.6 682.3,150.2 682.8,153.8 683.3,157.5 683.8,161.5 684.3,165.7 684.8,170.1 685.3,174.7 685.8,179.3 686.3,184.0 686.8,188.7 687.3,193.4 687.8,198.3 688.3,203.2 688.8,208.2 689.3,213.3 689.9,218.5 690.4,223.7 690.9,229.0 691.4,234.5 691.9,240.3 692.4,246.1 692.9,252.1 693.4,258.0 693.9,263.8 694.4,269.4 694.9,274.7 695.4,280.0 695.9,285.4 696.4,290.7 696.9,295.9 697.4,300.8 697.9,305.2 698.4,309.2 698.9,312.4 699.4,315.1 699.9,317.8 700.4,320.2 700.9,322.5 701.4,324.5 701.9,326.2 702.5,327.5 703.0,328.5 703.5,329.3 704.0,330.0 704.6,330.6 705.1,331.0 705.6,331.2 706.1,330.9 706.7,330.3 707.2,329.4 707.7,328.4 708.2,327.3 708.7,326.4 709.2,325.7 709.7,325.3 710.2,325.1 710.7,325.0 711.2,324.9 711.7,324.9 712.2,324.8 712.7,324.7 713.2,324.6 713.7,324.5 714.2,324.1 714.7,323.4 715.2,322.6 715.7,321.6 716.2,320.7 716.7,319.9 717.2,319.3 717.7,319.1 718.2,319.2 718.8,319.4 719.3,319.7 719.8,320.0 720.3,320.5 720.8,320.9 721.3,321.3 721.8,321.8 722.3,322.2 722.8,322.7 723.3,323.3 723.8,323.9 724.3,324.5 724.8,325.0 725.3,325.5 725.8,325.8 726.3,326.1 726.9,326.4 727.4,326.6 728.0,326.9 728.5,327.1 729.0,327.3 729.6,327.5 730.1,327.7 730.6,327.8 731.2,328.0 731.7,328.1 732.3,328.3 732.8,328.4 733.3,328.5 733.9,328.7 734.4,328.8 734.9,328.9 735.5,329.0 736.0,329.0 736.6,329.0 737.1,329.0 737.6,328.9 738.2,328.8 738.7,328.7 739.2,328.5 739.8,328.3 740.3,328.2 740.9,328.1 741.4,328.0 741.9,328.0 742.1,328.0 742.6,328.0 743.2,328.0 743.7,328.1 744.2,328.1 744.8,328.2 745.3,328.3 745.9,328.4 746.4,328.4 746.9,328.5 747.5,328.5 748.0,328.4 748.5,328.3 749.1,328.0 749.6,327.6 750.2,327.2 750.7,325.9 751.2,323.4 751.8,320.0 752.3,316.2 752.8,312.4 753.4,308.2 753.9,303.2 754.5,298.0 755.0,292.8 755.5,288.2 756.1,283.8 756.6,279.4 757.2,275.3 757.7,271.9 758.2,269.4 758.7,267.6 759.2,266.2 759.7,264.8 760.2,263.7 760.7,262.6 761.2,261.7 761.8,260.8 762.3,259.9 762.8,259.2 763.3,258.5 763.8,257.9 764.3,257.4 764.8,256.8 765.3,256.2 765.8,255.5 766.3,254.6 766.9,253.3 767.5,251.9 768.0,250.1 768.6,248.0 769.2,245.5 769.8,242.5 770.4,237.2 771.0,229.4 771.7,221.0 772.3,211.5 772.9,201.0 773.5,191.4 774.1,184.2 774.6,177.3 775.2,170.8 775.7,164.8 776.2,159.1 776.8,153.8 777.3,148.9 777.8,144.3 778.4,140.3 778.9,136.6 779.5,133.0 780.0,129.7 780.5,127.2 781.1,125.5 781.6,124.6 782.1,123.7 782.6,122.9 783.1,122.3 783.6,121.7 784.1,121.3 784.6,121.1 785.1,121.0 785.6,121.0 786.1,121.0 786.7,121.0 787.2,121.1 787.7,121.2 788.2,121.2 788.7,121.3 789.2,121.4 789.8,121.5 790.3,121.6 790.8,121.8 791.3,121.9 791.8,122.0 792.4,122.2 792.9,122.5 793.4,122.8 794.0,123.2 794.5,123.6 795.1,124.1 795.6,124.7 796.1,125.4 796.7,126.1 797.2,126.9 797.7,127.9 798.2,129.3 798.7,131.0 799.2,133.1 799.7,135.4 800.2,137.8 800.7,140.4 801.2,143.0 801.8,146.1 802.3,149.7 802.8,153.7 803.4,157.8 803.9,161.8 804.4,165.6 804.9,169.5 805.4,173.4 805.9,177.4 806.4,181.5 806.9,185.6 807.5,189.8 808.0,194.1 808.5,198.9 809.0,203.9 809.6,209.0 810.1,213.8 810.6,218.3 811.1,222.2 811.7,226.0 812.2,229.8 812.7,233.4 813.2,236.8 813.7,239.9 814.2,242.7 814.7,245.2 815.2,247.4 815.7,249.6 816.2,251.6 816.7,253.6 817.2,255.3 817.7,256.7 818.2,257.8 818.7,258.6 819.2,259.1 819.7,259.7 820.2,260.1 820.7,260.5 821.2,260.8 821.7,261.1 822.2,261.2 822.7,261.3 823.2,261.2 823.8,261.1 824.3,261.0 824.8,260.8 825.3,260.5 825.8,260.3 826.3,260.1 826.8,259.9 827.3,259.8 827.8,259.6 828.3,259.5 828.8,259.3 829.3,259.2 829.8,259.0 830.3,258.9 830.8,258.7 831.3,258.6 831.8,258.5 832.3,258.3 832.8,258.3 833.3,258.2 833.8,258.1 834.3,258.1 834.8,258.1 835.3,258.1 835.8,258.1 836.3,258.1 836.8,258.1 837.3,258.1 837.9,258.1 838.4,258.1 838.9,258.1 839.4,258.1 839.9,258.1 840.4,258.1 840.9,258.1 841.4,258.1 841.9,258.1 842.4,258.1 842.9,258.1 843.4,258.1 843.9,258.1 844.4,258.1 844.9,258.1 845.4,258.1 845.9,258.1 846.4,258.1 846.9,258.1 847.4,258.1 847.9,258.1 848.4,258.1 848.9,258.1 849.4,258.1 849.9,258.1 850.4,258.1 850.9,258.1 851.4,258.1 851.9,258.1 852.4,258.1 852.9,258.1 853.4,258.1 853.9,258.1 854.4,258.1 854.9,258.1 855.4,258.1 855.9,258.1 856.4,258.1 856.9,258.1 857.4,258.1 857.9,258.1 858.4,258.1 858.9,258.1 859.4,258.1 859.9,258.1 860.4,258.1 860.9,258.1 861.4,258.1 861.9,258.1 862.4,258.1 863.0,258.1 863.5,258.1 864.0,258.1 864.5,258.1 865.0,258.1 865.5,258.1 866.0,258.1 866.5,258.1 867.0,258.1 867.5,258.1 868.0,258.1 868.5,258.1 869.0,258.1 869.5,258.1 870.0,258.1 870.5,258.1 871.0,258.1 871.5,258.1 872.0,258.1 872.5,258.1 873.0,258.1 873.5,258.1 874.0,258.1 874.5,258.1 875.0,258.1 875.5,258.1 876.0,258.1 876.5,258.1 877.0,258.1 877.5,258.1 878.0,258.1 878.5,258.1 879.0,258.1 879.5,258.1 880.0,258.1 880.5,258.1 881.0,258.1 881.5,258.1 882.0,258.1 882.5,258.1 883.0,258.1 883.5,258.1 884.0,258.1 884.5,258.1 885.0,258.1 885.5,258.1 886.0,258.1 886.5,258.1 887.0,258.1 887.5,258.1 888.1,258.1 888.6,258.1 889.1,258.1 889.6,258.1 890.1,258.1 890.6,258.1 891.1,258.1 891.6,258.1 892.1,258.1 892.6,258.1 893.1,258.1 893.6,258.1 894.1,258.1 894.6,258.1 895.1,258.1 895.6,258.1 896.1,258.1 896.6,258.1 897.1,258.1 897.6,258.1 898.1,258.1 898.6,258.1 899.1,258.1 899.6,258.1 900.1,258.1 900.6,258.1 901.1,258.1 901.6,258.1 902.1,258.1 902.6,258.1 903.1,258.1 903.6,258.1 904.1,258.1 904.6,258.1 905.1,258.1 905.6,258.1 906.1,258.1 906.6,258.1 907.1,258.1 907.6,258.1 908.1,258.1 908.6,258.1 909.1,258.1 909.6,258.1 910.1,258.1 910.6,258.1 911.1,258.1 911.6,258.1 912.1,258.1 912.6,258.1 913.2,258.1 913.7,258.1 914.2,258.1 914.7,258.1 915.2,258.1 915.7,258.1 916.2,258.1 916.7,258.1 917.2,258.1 917.7,258.1 918.2,258.1 918.7,258.2 919.2,258.5 919.8,259.0 920.3,259.6 920.9,260.4 921.4,261.3 922.0,263.1 922.6,266.1 923.1,270.0 923.7,274.4 924.3,278.8 924.9,282.8 925.4,286.1 925.9,289.7 926.4,293.3 926.9,296.9 927.4,300.5 927.9,303.9 928.4,306.9 928.9,309.7 929.4,312.2 929.9,314.7 930.4,317.2 930.9,319.5 931.4,321.5 931.9,323.3 932.5,324.8 933.0,325.8 933.5,326.6 934.0,327.3 934.5,327.9 935.0,328.5 935.5,329.0 936.0,329.4 936.5,329.6 937.0,329.8 937.5,330.0 938.1,330.1 938.6,330.2 939.1,330.3 939.7,330.4 940.2,330.5 940.8,330.6 941.3,330.6 941.8,330.6 942.4,330.6 942.9,330.5 943.4,330.2 944.0,329.7 944.5,329.1 945.1,328.5 945.6,327.8 946.1,326.7 946.6,325.5 947.1,324.2 947.6,323.0 948.1,321.9 948.6,321.2 949.1,321.0 949.6,321.0 950.1,321.2 950.6,321.5 951.1,321.8 951.6,322.1 952.1,322.5 952.6,322.8 953.1,323.1 953.7,323.4 954.2,323.7 954.7,324.0 955.3,324.2 955.8,324.5 956.3,324.8 956.9,325.0 957.4,325.3 958.0,325.6 958.5,325.8 959.0,326.1 959.6,326.3 960.1,326.6 960.6,326.9 961.2,327.2 961.7,327.4 962.3,327.6 962.8,327.8 963.3,327.9 963.9,328.0 964.4,328.0 964.9,328.0 965.4,328.0 965.9,328.0 966.4,328.0 966.9,328.0 967.4,328.0 967.9,328.0 968.4,328.0 968.9,328.0 969.4,328.0 969.9,328.0 970.4,328.0 970.9,328.0 971.4,328.0 971.9,328.0 972.5,328.0 973.0,328.0 973.5,327.9 974.0,327.9 974.5,327.9 975.1,327.9 975.6,327.9 976.1,327.9 976.6,327.9 977.2,327.9 977.7,327.9 978.2,327.9 978.7,327.9 979.2,327.8 979.8,327.8 980.3,327.8 980.8,327.8 981.3,327.8 981.9,327.8 982.4,327.8 982.9,327.8 983.4,327.8 984.0,327.8 984.5,328.0 985.0,328.1 985.6,328.3 986.1,328.3 986.6,328.0 987.2,327.1 987.7,325.8 988.3,324.3 988.9,321.1 989.5,315.8 990.1,309.8 990.7,304.2 991.3,299.0 991.8,293.4 992.4,287.8 993.0,282.6 993.6,278.1 994.2,274.6 994.7,272.3 995.2,270.1 995.7,268.2 996.2,266.4 996.7,264.8 997.2,263.4 997.7,262.2 998.2,261.2 998.7,260.3 999.2,259.6 999.7,259.1 1000.2,258.6 1000.7,258.0 1001.2,257.5 1001.7,256.7 1002.2,255.8 1002.8,254.4 1003.3,252.6 1003.8,250.4 1004.4,247.9 1004.9,245.1 1005.4,241.6 1006.0,237.1 1006.5,232.1 1007.1,226.6 1007.6,220.9 1008.1,214.6 1008.7,207.5 1009.2,200.1 1009.7,192.8 1010.3,186.0 1010.8,179.1 1011.4,171.8 1011.9,165.0 1012.4,159.6 1013.0,156.4 1013.5,154.7 1014.0,153.2 1014.6,152.1 1015.1,151.3 1015.7,151.0 1016.2,151.5 1016.7,152.8 1017.3,154.7 1017.8,156.8 1018.3,159.1 1018.8,161.5 1019.3,164.6 1019.9,168.1 1020.4,172.0 1020.9,176.1 1021.4,180.3 1021.9,184.5 1022.4,188.6 1022.9,192.7 1023.4,196.9 1023.9,201.2 1024.4,205.6 1024.9,210.0 1025.4,214.5 1025.9,219.0 1026.4,223.6 1026.9,228.2 1027.4,232.8 1027.9,237.6 1028.4,242.4 1028.9,247.2 1029.4,251.9 1029.9,256.6 1030.4,261.2 1030.9,265.7 1031.4,270.4 1031.9,275.0 1032.4,279.6 1032.9,284.0 1033.4,288.3 1034.0,292.4 1034.5,296.1 1035.0,299.7 1035.5,303.3 1036.0,306.8 1036.5,310.2 1037.0,313.3 1037.5,316.0 1038.0,318.4 1038.5,320.3 1039.0,322.0 1039.6,323.6 1040.1,325.2 1040.6,326.6 1041.2,327.9 1041.7,329.0 1042.2,329.8 1042.8,330.3 1043.3,330.5 1043.9,330.3 1044.4,329.8 1044.9,329.1 1045.5,328.1 1046.0,326.9 1046.5,325.6 1047.0,323.7 1047.6,320.6 1048.1,316.6 1048.6,311.9 1049.1,307.0 1049.6,302.1 1050.1,297.5 1050.6,293.4 1051.1,289.6 1051.6,285.7 1052.1,281.7 1052.6,277.9 1053.1,274.3 1053.6,271.1 1054.1,268.5 1054.6,266.5 1055.1,265.1 1055.6,263.8 1056.1,262.7 1056.6,261.8 1057.1,260.9 1057.6,260.1 1058.1,259.3 1058.6,258.5 1059.1,257.7 1059.6,257.1 1060.1,256.5 1060.6,256.0 1061.2,255.4 1061.7,254.8 1062.2,254.0 1062.7,253.1 1063.2,251.9 1063.7,250.3 1064.3,248.5 1064.8,246.4 1065.3,244.2 1065.9,241.8 1066.4,239.3 1067.0,236.7 1067.5,234.1 1068.0,231.6 1068.6,229.1 1069.1,226.4 1069.6,223.6 1070.2,220.8 1070.7,217.8 1071.3,214.8 1071.8,211.7 1072.3,208.5 1072.9,205.3 1073.4,202.1 1073.9,199.0 1074.4,196.0 1074.9,192.9 1075.4,189.7 1075.9,186.3 1076.4,182.9 1076.9,179.2 1077.4,175.2 1078.1,169.6 1078.7,163.3 1079.3,156.9" fill="none" stroke="#d62728" stroke-width="1.5" stroke-linejoin="round" /></g><text x="1383.90" y="101.60" font-size="14.49" fill="#1e1e1e" stroke="#1e1e1e" stroke-width="0.12" textLength="138.05" lengthAdjust="spacingAndGlyphs" >lateral_acceleration</text><line x1="1877.00" y1="91.00" x2="1888.00" y2="101.50" stroke="#111" stroke-width="1.5" /><line x1="1888.00" y1="91.00" x2="1877.00" y2="101.50" stroke="#111" stroke-width="1.5" /><rect x="1143.00" y="111.20" width="1.20" height="225.10" fill="#111" /><rect x="1139.00" y="330.20" width="4.00" height="1.20" fill="#111" /><rect x="1139.00" y="323.95" width="4.00" height="1.20" fill="#111" /><rect x="1139.00" y="317.69" width="4.00" height="1.20" fill="#111" /><rect x="1139.00" y="311.44" width="4.00" height="1.20" fill="#111" /><text x="1102.27" y="310.48" font-size="14.49" fill="#1e1e1e" stroke="#1e1e1e" stroke-width="0.12" textLength="27.33" lengthAdjust="spacingAndGlyphs" >-0.1</text><rect x="1135.00" y="305.18" width="8.00" height="1.20" fill="#111" /><rect x="1139.00" y="298.92" width="4.00" height="1.20" fill="#111" /><rect x="1139.00" y="292.67" width="4.00" height="1.20" fill="#111" /><rect x="1139.00" y="286.41" width="4.00" height="1.20" fill="#111" /><rect x="1139.00" y="280.16" width="4.00" height="1.20" fill="#111" /><text x="1120.68" y="279.20" font-size="14.49" fill="#1e1e1e" stroke="#1e1e1e" stroke-width="0.12"  >0</text><rect x="1135.00" y="273.90" width="8.00" height="1.20" fill="#111" /><rect x="1139.00" y="267.64" width="4.00" height="1.20" fill="#111" /><rect x="1139.00" y="261.39" width="4.00" height="1.20" fill="#111" /><rect x="1139.00" y="255.13" width="4.00" height="1.20" fill="#111" /><rect x="1139.00" y="248.88" width="4.00" height="1.20" fill="#111" /><text x="1107.33" y="247.92" font-size="14.49" fill="#1e1e1e" stroke="#1e1e1e" stroke-width="0.12" textLength="22.27" lengthAdjust="spacingAndGlyphs" >0.1</text><rect x="1135.00" y="242.62" width="8.00" height="1.20" fill="#111" /><rect x="1139.00" y="236.36" width="4.00" height="1.20" fill="#111" /><rect x="1139.00" y="230.11" width="4.00" height="1.20" fill="#111" /><rect x="1139.00" y="223.85" width="4.00" height="1.20" fill="#111" /><rect x="1139.00" y="217.60" width="4.00" height="1.20" fill="#111" /><text x="1107.33" y="216.64" font-size="14.49" fill="#1e1e1e" stroke="#1e1e1e" stroke-width="0.12" textLength="22.27" lengthAdjust="spacingAndGlyphs" >0.2</text><rect x="1135.00" y="211.34" width="8.00" height="1.20" fill="#111" /><rect x="1139.00" y="205.08" width="4.00" height="1.20" fill="#111" /><rect x="1139.00" y="198.83" width="4.00" height="1.20" fill="#111" /><rect x="1139.00" y="192.57" width="4.00" height="1.20" fill="#111" /><rect x="1139.00" y="186.32" width="4.00" height="1.20" fill="#111" /><text x="1107.33" y="185.36" font-size="14.49" fill="#1e1e1e" stroke="#1e1e1e" stroke-width="0.12" textLength="22.27" lengthAdjust="spacingAndGlyphs" >0.3</text><rect x="1135.00" y="180.06" width="8.00" height="1.20" fill="#111" /><rect x="1139.00" y="173.80" width="4.00" height="1.20" fill="#111" /><rect x="1139.00" y="167.55" width="4.00" height="1.20" fill="#111" /><rect x="1139.00" y="161.29" width="4.00" height="1.20" fill="#111" /><rect x="1139.00" y="155.04" width="4.00" height="1.20" fill="#111" /><text x="1107.33" y="154.08" font-size="14.49" fill="#1e1e1e" stroke="#1e1e1e" stroke-width="0.12" textLength="22.27" lengthAdjust="spacingAndGlyphs" >0.4</text><rect x="1135.00" y="148.78" width="8.00" height="1.20" fill="#111" /><rect x="1139.00" y="142.52" width="4.00" height="1.20" fill="#111" /><rect x="1139.00" y="136.27" width="4.00" height="1.20" fill="#111" /><rect x="1139.00" y="130.01" width="4.00" height="1.20" fill="#111" /><rect x="1139.00" y="123.76" width="4.00" height="1.20" fill="#111" /><text x="1107.33" y="122.80" font-size="14.49" fill="#1e1e1e" stroke="#1e1e1e" stroke-width="0.12" textLength="22.27" lengthAdjust="spacingAndGlyphs" >0.5</text><rect x="1135.00" y="117.50" width="8.00" height="1.20" fill="#111" /><rect x="1139.00" y="111.24" width="4.00" height="1.20" fill="#111" /><rect x="1147.60" y="340.90" width="746.60" height="1.20" fill="#111" /><rect x="1178.15" y="341.50" width="1.20" height="6.00" fill="#111" /><rect x="1215.53" y="341.50" width="1.20" height="4.00" fill="#111" /><text x="1240.13" y="364.90" font-size="14.49" fill="#1e1e1e" stroke="#1e1e1e" stroke-width="0.12" textLength="26.73" lengthAdjust="spacingAndGlyphs" >200</text><rect x="1252.90" y="341.50" width="1.20" height="8.00" fill="#111" /><rect x="1290.28" y="341.50" width="1.20" height="4.00" fill="#111" /><rect x="1327.65" y="341.50" width="1.20" height="6.00" fill="#111" /><rect x="1365.03" y="341.50" width="1.20" height="4.00" fill="#111" /><text x="1389.63" y="364.90" font-size="14.49" fill="#1e1e1e" stroke="#1e1e1e" stroke-width="0.12" textLength="26.73" lengthAdjust="spacingAndGlyphs" >220</text><rect x="1402.40" y="341.50" width="1.20" height="8.00" fill="#111" /><rect x="1439.78" y="341.50" width="1.20" height="4.00" fill="#111" /><rect x="1477.15" y="341.50" width="1.20" height="6.00" fill="#111" /><rect x="1514.53" y="341.50" width="1.20" height="4.00" fill="#111" /><text x="1539.13" y="364.90" font-size="14.49" fill="#1e1e1e" stroke="#1e1e1e" stroke-width="0.12" textLength="26.73" lengthAdjust="spacingAndGlyphs" >240</text><rect x="1551.90" y="341.50" width="1.20" height="8.00" fill="#111" /><rect x="1589.28" y="341.50" width="1.20" height="4.00" fill="#111" /><rect x="1626.65" y="341.50" width="1.20" height="6.00" fill="#111" /><rect x="1664.03" y="341.50" width="1.20" height="4.00" fill="#111" /><text x="1688.63" y="364.90" font-size="14.49" fill="#1e1e1e" stroke="#1e1e1e" stroke-width="0.12" textLength="26.73" lengthAdjust="spacingAndGlyphs" >260</text><rect x="1701.40" y="341.50" width="1.20" height="8.00" fill="#111" /><rect x="1738.78" y="341.50" width="1.20" height="4.00" fill="#111" /><rect x="1776.15" y="341.50" width="1.20" height="6.00" fill="#111" /><rect x="1813.53" y="341.50" width="1.20" height="4.00" fill="#111" /><text x="1838.13" y="364.90" font-size="14.49" fill="#1e1e1e" stroke="#1e1e1e" stroke-width="0.12" textLength="26.73" lengthAdjust="spacingAndGlyphs" >280</text><rect x="1850.90" y="341.50" width="1.20" height="8.00" fill="#111" /><rect x="1888.28" y="341.50" width="1.20" height="4.00" fill="#111" /><rect x="1464.50" y="121.20" width="422.50" height="24.60" fill="#fff" fill-opacity="0.85" stroke="#747474" stroke-width="1.4"/><rect x="1469.00" y="129.00" width="8.00" height="8.00" fill="#ff7f0e" /><text x="1478.00" y="137.60" font-size="13.45" fill="#1e1e1e" stroke="#1e1e1e" stroke-width="0.12" textLength="401.25" lengthAdjust="spacingAndGlyphs" >/control_performance/driving_status/lateral_acceleration/data</text><circle cx="1887.00" cy="120.20" r="5" fill="#fff" stroke="#111" stroke-width="1.1"/><defs><clipPath id="c2"><rect x="1144" y="100" width="751" height="240"/></clipPath></defs><g clip-path="url(#c2)"><polyline points="1147.6,275.0 1148.1,275.0 1148.6,275.0 1149.1,275.0 1149.6,275.0 1150.1,275.0 1150.6,275.0 1151.1,275.0 1151.6,275.0 1152.1,275.0 1152.6,275.0 1153.1,275.0 1153.6,275.0 1154.1,275.0 1154.6,275.0 1155.1,275.0 1155.6,275.0 1156.1,275.0 1156.6,275.0 1157.1,275.0 1157.6,275.0 1158.1,275.0 1158.6,275.0 1159.1,275.0 1159.7,274.9 1160.2,274.5 1160.7,274.0 1161.3,273.3 1161.8,272.6 1162.4,271.7 1162.9,270.9 1163.4,270.1 1164.0,269.2 1164.5,268.3 1165.1,267.3 1165.6,266.2 1166.1,265.0 1166.7,263.8 1167.2,262.6 1167.8,261.5 1168.3,260.2 1168.8,258.8 1169.4,257.4 1169.9,256.0 1170.5,254.6 1171.0,253.3 1171.5,252.2 1172.1,251.4 1172.7,250.6 1173.2,249.8 1173.8,249.1 1174.4,248.7 1175.0,248.5 1175.5,248.7 1176.1,249.3 1176.7,250.3 1177.3,251.5 1177.8,252.8 1178.4,254.9 1179.0,258.2 1179.6,262.2 1180.1,266.3 1180.7,270.1 1181.3,273.8 1181.9,277.7 1182.5,281.5 1183.0,284.8 1183.6,287.4 1184.1,289.3 1184.7,291.1 1185.2,292.9 1185.7,294.4 1186.3,295.5 1186.8,296.3 1187.4,296.6 1187.9,296.2 1188.5,295.2 1189.1,293.6 1189.7,291.7 1190.2,289.6 1190.8,287.4 1191.3,285.0 1191.9,282.1 1192.4,278.6 1193.0,274.9 1193.5,270.9 1194.0,266.7 1194.6,262.6 1195.1,258.6 1195.7,254.6 1196.2,250.4 1196.7,246.1 1197.3,241.7 1197.8,237.2 1198.4,232.8 1198.9,228.4 1199.4,224.0 1200.0,219.7 1200.5,215.3 1201.1,210.9 1201.6,206.5 1202.1,202.2 1202.7,197.9 1203.2,193.6 1203.8,189.4 1204.3,185.3 1204.8,181.2 1205.4,177.1 1205.9,173.0 1206.5,169.1 1207.0,165.2 1207.5,161.4 1208.1,157.8 1208.6,154.2 1209.2,150.6 1209.7,147.0 1210.2,143.6 1210.8,140.3 1211.3,137.2 1211.9,134.3 1212.4,131.8 1212.9,129.5 1213.5,127.2 1214.0,124.9 1214.6,122.8 1215.1,120.9 1215.6,119.3 1216.2,118.2 1216.7,117.4 1217.3,117.0 1217.9,116.6 1218.5,116.3 1219.0,116.1 1219.6,116.0 1220.1,116.2 1220.7,116.7 1221.2,117.4 1221.8,118.3 1222.3,119.4 1222.8,120.6 1223.4,121.9 1223.9,123.2 1224.5,124.6 1225.0,126.4 1225.5,128.4 1226.1,130.6 1226.6,133.0 1227.2,135.5 1227.7,138.0 1228.2,140.5 1228.8,143.0 1229.3,145.8 1229.9,148.6 1230.4,151.6 1230.9,154.6 1231.5,157.6 1232.0,160.6 1232.6,163.5 1233.1,166.4 1233.6,169.3 1234.2,172.2 1234.7,175.0 1235.3,177.9 1235.8,180.8 1236.3,183.7 1236.9,186.6 1237.4,189.4 1238.0,192.3 1238.5,195.2 1239.0,198.1 1239.6,201.0 1240.1,203.8 1240.7,206.7 1241.2,209.6 1241.7,212.5 1242.3,215.4 1242.8,218.4 1243.4,221.3 1243.9,224.2 1244.4,227.1 1245.0,229.9 1245.5,232.6 1246.1,235.3 1246.6,238.0 1247.2,240.7 1247.7,243.3 1248.2,245.9 1248.8,248.3 1249.3,250.6 1249.9,252.8 1250.4,254.9 1250.9,256.9 1251.5,258.9 1252.0,260.8 1252.6,262.6 1253.1,264.3 1253.6,265.8 1254.2,267.2 1254.7,268.5 1255.3,269.8 1255.8,271.0 1256.3,272.1 1256.9,273.2 1257.4,274.0 1258.0,274.8 1258.5,275.3 1259.0,275.7 1259.6,276.0 1260.1,276.4 1260.7,276.7 1261.2,276.9 1261.7,277.1 1262.3,277.3 1262.8,277.3 1263.3,277.3 1263.9,277.2 1264.4,277.0 1264.9,276.9 1265.4,276.7 1266.0,276.4 1266.5,276.2 1267.0,276.0 1267.5,275.7 1268.0,275.5 1268.6,275.3 1269.1,275.1 1269.6,274.8 1270.1,274.5 1270.7,274.3 1271.2,274.0 1271.7,273.7 1272.2,273.5 1272.8,273.3 1273.3,273.1 1273.8,273.0 1274.3,273.0 1274.8,273.0 1275.4,273.0 1275.9,273.0 1276.4,273.0 1276.9,273.0 1277.4,273.0 1277.9,273.0 1278.4,273.0 1279.0,273.0 1279.5,273.0 1280.0,273.0 1280.5,273.0 1281.0,273.0 1281.5,273.0 1282.0,273.0 1282.6,273.0 1283.1,273.0 1283.6,273.0 1284.1,273.0 1284.6,273.0 1285.1,273.0 1285.6,273.0 1286.2,273.0 1286.7,273.0 1287.2,273.0 1287.7,273.0 1288.2,273.0 1288.7,273.0 1289.2,273.0 1289.7,273.0 1290.3,273.1 1290.8,273.3 1291.3,273.4 1291.8,273.5 1292.3,273.7 1292.8,273.9 1293.3,274.1 1293.8,274.2 1294.3,274.4 1294.8,274.6 1295.3,274.7 1295.8,274.8 1296.4,274.9 1296.9,275.0 1297.4,275.0 1297.9,275.0 1298.4,275.0 1298.9,275.0 1299.4,275.0 1299.9,275.0 1300.4,275.0 1300.9,275.0 1301.4,275.0 1301.9,275.0 1302.5,275.0 1303.0,275.0 1303.5,275.0 1304.0,275.0 1304.5,275.0 1305.0,275.0 1305.5,275.0 1306.0,275.0 1306.5,275.0 1307.1,274.9 1307.6,274.8 1308.1,274.6 1308.6,274.5 1309.2,274.3 1309.7,274.2 1310.2,274.0 1310.7,273.9 1311.3,273.9 1311.8,273.8 1312.3,273.8 1312.8,273.8 1313.3,273.8 1313.8,273.8 1314.3,273.8 1314.9,273.8 1315.4,273.8 1315.9,273.8 1316.4,273.8 1316.9,273.8 1317.4,273.8 1317.9,273.8 1318.5,273.8 1319.0,273.8 1319.5,273.8 1320.0,273.8 1320.5,273.8 1321.0,273.8 1321.5,273.8 1322.1,273.8 1322.6,273.8 1323.1,273.8 1323.6,273.8 1324.1,273.8 1324.6,273.8 1325.1,273.8 1325.7,273.8 1326.2,273.8 1326.7,273.9 1327.2,273.9 1327.7,274.0 1328.3,274.2 1328.8,274.3 1329.3,274.5 1329.8,274.6 1330.4,274.8 1330.9,274.9 1331.4,275.0 1331.9,275.0 1332.4,275.0 1332.9,275.0 1333.4,275.0 1334.0,275.0 1334.5,275.0 1335.0,275.0 1335.5,275.0 1336.0,275.0 1336.5,275.0 1337.0,275.0 1337.5,275.0 1338.0,275.0 1338.5,275.0 1339.0,275.0 1339.5,275.0 1340.0,275.0 1340.5,275.0 1341.0,275.0 1341.5,275.0 1342.0,275.0 1342.5,275.0 1343.0,275.0 1343.6,275.0 1344.1,275.0 1344.6,275.0 1345.1,275.0 1345.6,275.0 1346.1,275.0 1346.6,275.0 1347.1,275.0 1347.6,275.0 1348.1,275.0 1348.6,275.0 1349.1,275.0 1349.6,275.0 1350.2,275.0 1350.7,275.0 1351.2,275.0 1351.7,275.0 1352.2,275.0 1352.7,275.0 1353.2,275.0 1353.7,275.0 1354.2,275.0 1354.7,275.0 1355.2,275.0 1355.7,275.0 1356.2,275.0 1356.8,275.0 1357.3,275.0 1357.8,275.0 1358.3,275.0 1358.8,275.0 1359.3,275.0 1359.8,275.0 1360.3,275.0 1360.8,275.0 1361.3,275.0 1361.8,275.0 1362.3,275.0 1362.9,274.9 1363.4,274.9 1363.9,274.9 1364.4,274.9 1364.9,274.9 1365.4,274.9 1365.9,274.9 1366.4,274.9 1366.9,274.9 1367.4,274.9 1367.9,274.9 1368.4,274.9 1368.9,274.9 1369.5,274.9 1370.0,274.7 1370.6,274.5 1371.1,274.3 1371.6,274.1 1372.2,273.9 1372.7,273.8 1373.3,273.8 1373.8,273.8 1374.3,273.8 1374.8,273.8 1375.3,273.8 1375.8,273.8 1376.3,273.8 1376.8,273.8 1377.3,273.8 1377.8,273.8 1378.3,273.8 1378.9,273.8 1379.4,273.8 1379.9,273.8 1380.4,273.8 1380.9,273.8 1381.4,273.8 1381.9,273.8 1382.4,273.8 1383.0,273.9 1383.5,274.1 1384.1,274.3 1384.6,274.5 1385.1,274.7 1385.7,274.9 1386.2,274.9 1386.7,274.9 1387.2,274.9 1387.7,274.9 1388.3,274.9 1388.8,274.9 1389.3,274.9 1389.8,274.9 1390.3,274.9 1390.8,274.9 1391.3,274.9 1391.8,274.9 1392.3,274.9 1392.8,274.9 1393.3,274.9 1393.8,274.9 1394.3,274.9 1394.9,274.9 1395.4,274.9 1395.9,274.9 1396.4,274.9 1396.9,274.9 1397.4,274.9 1397.9,274.9 1398.4,274.9 1398.9,274.9 1399.4,274.9 1399.9,274.9 1400.4,274.9 1401.0,274.9 1401.5,274.9 1402.0,274.9 1402.5,274.9 1403.0,274.9 1403.5,274.9 1404.0,274.9 1404.5,275.0 1405.1,275.2 1405.6,275.3 1406.1,275.5 1406.6,275.7 1407.2,275.9 1407.7,276.1 1408.2,276.3 1408.7,276.5 1409.3,276.6 1409.8,276.8 1410.3,276.9 1410.8,277.0 1411.3,277.2 1411.8,277.3 1412.3,277.5 1412.9,277.6 1413.4,277.7 1413.9,277.8 1414.4,277.9 1414.9,278.0 1415.4,278.0 1415.9,278.1 1416.4,278.1 1417.0,278.1 1417.5,278.1 1418.1,278.0 1418.6,278.0 1419.1,277.9 1419.7,277.9 1420.2,277.8 1420.8,277.8 1421.3,277.7 1421.8,277.6 1422.3,277.5 1422.8,277.3 1423.3,277.1 1423.9,276.9 1424.4,276.7 1424.9,276.5 1425.4,276.3 1425.9,276.1 1426.4,276.0 1426.9,275.9 1427.5,275.8 1428.0,275.8 1428.5,275.8 1429.0,275.8 1429.5,275.8 1430.1,275.9 1430.6,275.9 1431.1,276.0 1431.6,276.0 1432.2,276.1 1432.7,276.2 1433.2,276.3 1433.7,276.4 1434.2,276.5 1434.8,276.7 1435.3,276.9 1435.8,277.2 1436.3,277.6 1436.9,278.0 1437.4,278.4 1437.9,278.8 1438.4,279.2 1439.0,279.7 1439.5,280.1 1440.0,280.5 1440.5,280.9 1441.0,281.4 1441.5,281.9 1442.1,282.4 1442.6,282.9 1443.1,283.4 1443.6,283.9 1444.1,284.5 1444.6,285.0 1445.1,285.6 1445.7,286.2 1446.2,286.7 1446.7,287.3 1447.2,287.9 1447.7,288.5 1448.2,289.1 1448.8,289.8 1449.3,290.5 1449.8,291.1 1450.3,291.8 1450.9,292.5 1451.4,293.2 1451.9,293.8 1452.4,294.5 1453.0,295.2 1453.5,295.8 1454.0,296.5 1454.5,297.2 1455.1,297.9 1455.6,298.5 1456.1,299.2 1456.6,299.8 1457.1,300.5 1457.7,301.1 1458.2,301.7 1458.7,302.3 1459.2,302.8 1459.8,303.4 1460.3,303.9 1460.8,304.5 1461.3,305.0 1461.9,305.5 1462.4,306.0 1462.9,306.5 1463.4,307.0 1464.0,307.4 1464.5,307.9 1465.0,308.3 1465.5,308.8 1466.0,309.2 1466.6,309.7 1467.1,310.1 1467.6,310.5 1468.1,310.8 1468.7,311.2 1469.2,311.5 1469.7,311.8 1470.2,312.0 1470.8,312.3 1471.3,312.5 1471.8,312.8 1472.3,313.0 1472.9,313.2 1473.4,313.4 1473.9,313.6 1474.4,313.7 1474.9,313.8 1475.5,313.8 1476.0,313.7 1476.5,313.5 1477.0,313.2 1477.6,312.9 1478.1,312.4 1478.6,311.9 1479.1,311.3 1479.7,310.7 1480.2,310.1 1480.7,309.5 1481.2,308.9 1481.8,308.2 1482.3,307.5 1482.8,306.7 1483.3,305.8 1483.8,304.9 1484.4,303.9 1484.9,302.9 1485.4,301.8 1485.9,300.8 1486.5,299.8 1487.0,298.8 1487.5,297.8 1488.0,296.8 1488.6,295.8 1489.1,294.7 1489.6,293.7 1490.1,292.6 1490.7,291.5 1491.2,290.5 1491.7,289.4 1492.2,288.3 1492.7,287.3 1493.3,286.2 1493.8,285.1 1494.4,284.0 1494.9,282.8 1495.4,281.7 1496.0,280.7 1496.5,279.6 1497.1,278.7 1497.6,277.7 1498.1,276.6 1498.7,275.5 1499.2,274.4 1499.8,273.5 1500.3,272.7 1500.8,272.2 1501.4,272.0 1501.9,272.0 1502.4,272.0 1502.9,272.0 1503.5,272.0 1504.0,272.0 1504.5,272.0 1505.0,272.0 1505.5,272.0 1506.0,272.0 1506.6,272.0 1507.1,272.1 1507.6,272.2 1508.1,272.4 1508.7,272.6 1509.2,272.8 1509.7,273.1 1510.3,273.4 1510.8,273.8 1511.3,274.1 1511.8,274.4 1512.4,274.7 1512.9,274.9 1513.4,275.1 1513.9,275.4 1514.4,275.7 1515.0,275.9 1515.5,276.2 1516.0,276.5 1516.5,276.7 1517.0,277.0 1517.5,277.2 1518.0,277.4 1518.6,277.6 1519.1,277.7 1519.6,277.8 1520.1,277.8 1520.6,277.8 1521.1,277.8 1521.6,277.8 1522.1,277.8 1522.6,277.8 1523.1,277.8 1523.7,277.8 1524.2,277.8 1524.7,277.8 1525.2,277.8 1525.7,277.8 1526.2,277.8 1526.7,277.8 1527.2,277.8 1527.7,277.8 1528.2,277.8 1528.7,277.8 1529.2,277.8 1529.8,277.7 1530.3,277.6 1530.8,277.5 1531.3,277.3 1531.8,277.1 1532.3,276.9 1532.8,276.7 1533.4,276.6 1533.9,276.4 1534.4,276.3 1534.9,276.2 1535.4,276.1 1535.9,276.1 1536.4,276.1 1536.9,276.1 1537.5,276.1 1538.0,276.1 1538.5,276.1 1539.0,276.1 1539.5,276.1 1540.0,276.1 1540.5,276.1 1541.0,276.1 1541.5,276.1 1542.0,276.1 1542.5,276.1 1543.0,276.1 1543.6,276.1 1544.1,276.1 1544.6,276.1 1545.1,276.1 1545.6,276.2 1546.1,276.3 1546.7,276.4 1547.2,276.5 1547.7,276.7 1548.2,276.9 1548.8,277.1 1549.3,277.4 1549.8,277.6 1550.3,277.8 1550.8,278.0 1551.4,278.3 1551.9,278.6 1552.4,278.9 1552.9,279.2 1553.5,279.5 1554.0,279.9 1554.5,280.3 1555.0,280.7 1555.6,281.1 1556.1,281.5 1556.6,282.0 1557.1,282.5 1557.7,283.1 1558.2,283.7 1558.7,284.3 1559.2,285.0 1559.7,285.7 1560.3,286.4 1560.8,287.2 1561.3,287.9 1561.8,288.7 1562.4,289.6 1562.9,290.5 1563.4,291.5 1563.9,292.5 1564.5,293.6 1565.0,294.7 1565.5,295.8 1566.0,297.0 1566.6,298.1 1567.1,299.2 1567.6,300.2 1568.1,301.3 1568.6,302.4 1569.2,303.4 1569.7,304.5 1570.2,305.5 1570.7,306.6 1571.3,307.6 1571.8,308.7 1572.3,309.7 1572.8,310.8 1573.4,311.8 1573.9,312.8 1574.4,313.8 1574.9,314.9 1575.5,315.9 1576.0,316.9 1576.5,317.9 1577.0,318.9 1577.5,319.9 1578.1,320.8 1578.6,321.6 1579.1,322.4 1579.6,323.2 1580.2,324.0 1580.7,324.9 1581.2,325.7 1581.7,326.5 1582.3,327.3 1582.8,328.0 1583.3,328.5 1583.8,329.0 1584.4,329.2 1584.9,329.3 1585.4,329.3 1585.9,329.3 1586.4,329.2 1587.0,329.1 1587.5,328.9 1588.0,328.7 1588.5,328.5 1589.1,328.3 1589.6,328.1 1590.1,327.9 1590.6,327.6 1591.2,327.3 1591.7,326.8 1592.2,326.2 1592.7,325.5 1593.3,324.7 1593.8,323.9 1594.3,323.0 1594.8,322.0 1595.3,321.0 1595.9,320.0 1596.4,319.0 1596.9,317.9 1597.4,316.7 1598.0,315.3 1598.5,313.9 1599.0,312.4 1599.5,310.9 1600.1,309.3 1600.6,307.7 1601.1,306.1 1601.6,304.6 1602.1,303.1 1602.7,301.7 1603.2,300.2 1603.7,298.6 1604.2,297.1 1604.8,295.5 1605.3,294.0 1605.8,292.5 1606.3,291.1 1606.9,289.7 1607.4,288.5 1607.9,287.3 1608.4,286.2 1609.0,285.1 1609.5,284.0 1610.0,282.9 1610.5,281.9 1611.0,280.9 1611.6,280.0 1612.1,279.1 1612.6,278.4 1613.1,277.7 1613.7,277.2 1614.2,276.8 1614.7,276.3 1615.2,275.9 1615.8,275.5 1616.3,275.2 1616.8,274.9 1617.4,274.6 1617.9,274.3 1618.4,274.1 1618.9,273.8 1619.5,273.6 1620.0,273.5 1620.5,273.3 1621.0,273.2 1621.5,273.1 1622.0,272.9 1622.5,272.9 1623.0,272.9 1623.5,272.9 1624.0,272.9 1624.6,273.0 1625.1,273.1 1625.6,273.3 1626.1,273.4 1626.6,273.6 1627.1,273.8 1627.6,273.9 1628.1,274.1 1628.6,274.3 1629.1,274.4 1629.6,274.6 1630.1,274.7 1630.6,274.8 1631.2,274.8 1631.7,274.9 1632.2,274.9 1632.7,274.9 1633.2,274.9 1633.7,274.9 1634.2,274.9 1634.7,274.9 1635.2,274.9 1635.7,274.9 1636.2,274.9 1636.7,274.9 1637.2,274.9 1637.7,274.9 1638.2,274.9 1638.7,274.9 1639.2,274.9 1639.7,274.9 1640.2,274.9 1640.7,274.9 1641.2,274.9 1641.7,274.9 1642.2,274.9 1642.7,274.9 1643.2,274.9 1643.7,274.9 1644.2,274.9 1644.7,274.9 1645.2,274.9 1645.7,274.9 1646.2,274.9 1646.7,274.9 1647.2,274.9 1647.7,274.9 1648.2,274.9 1648.7,274.9 1649.2,274.9 1649.7,274.9 1650.2,274.9 1650.7,274.9 1651.2,274.9 1651.7,274.9 1652.2,274.9 1652.7,274.9 1653.2,274.9 1653.7,274.9 1654.2,274.9 1654.7,274.9 1655.2,274.9 1655.7,274.9 1656.2,274.9 1656.7,274.9 1657.3,274.9 1657.8,274.9 1658.3,274.9 1658.8,274.9 1659.3,274.9 1659.8,274.9 1660.3,274.9 1660.8,274.9 1661.3,274.9 1661.8,274.9 1662.3,274.9 1662.8,274.9 1663.3,274.9 1663.8,274.9 1664.3,274.9 1664.8,274.9 1665.3,274.9 1665.8,274.9 1666.3,274.9 1666.8,274.9 1667.3,274.9 1667.8,274.9 1668.3,274.9 1668.8,274.9 1669.3,274.9 1669.8,274.9 1670.3,274.9 1670.8,274.9 1671.3,274.9 1671.8,274.9 1672.3,274.9 1672.8,274.9 1673.3,274.9 1673.8,274.9 1674.3,274.9 1674.8,274.9 1675.3,274.9 1675.8,274.9 1676.3,274.9 1676.8,274.9 1677.3,274.9 1677.8,274.9 1678.3,274.9 1678.8,274.9 1679.3,274.9 1679.8,274.9 1680.3,274.9 1680.8,274.9 1681.3,274.9 1681.8,274.9 1682.3,274.9 1682.8,274.9 1683.3,274.9 1683.8,274.9 1684.3,274.9 1684.8,274.9 1685.3,274.9 1685.8,274.9 1686.4,274.9 1686.9,274.9 1687.4,275.0 1687.9,275.1 1688.4,275.2 1689.0,275.4 1689.5,275.5 1690.0,275.7 1690.5,275.8 1691.1,275.9 1691.6,276.0 1692.1,276.0 1692.6,276.0 1693.2,276.0 1693.7,276.0 1694.2,276.0 1694.7,275.9 1695.2,275.9 1695.8,275.9 1696.3,275.8 1696.8,275.8 1697.3,275.8 1697.9,275.7 1698.4,275.7 1698.9,275.6 1699.4,275.5 1700.0,275.4 1700.5,275.3 1701.0,275.2 1701.5,275.1 1702.1,275.0 1702.6,274.9 1703.1,274.9 1703.6,274.9 1704.1,274.9 1704.6,274.9 1705.1,274.9 1705.6,274.9 1706.1,274.9 1706.6,274.9 1707.1,274.9 1707.6,274.9 1708.1,274.9 1708.6,274.9 1709.1,274.9 1709.6,274.9 1710.1,274.9 1710.6,274.9 1711.1,274.9 1711.6,274.9 1712.1,274.9 1712.6,274.9 1713.1,274.9 1713.6,274.9 1714.1,274.9 1714.6,274.9 1715.1,274.9 1715.6,274.9 1716.1,274.9 1716.6,274.9 1717.1,274.9 1717.6,274.9 1718.1,274.9 1718.6,274.9 1719.1,274.9 1719.6,274.9 1720.1,274.9 1720.6,274.9 1721.1,274.9 1721.6,274.9 1722.1,274.9 1722.6,274.9 1723.1,274.9 1723.6,274.9 1724.1,274.9 1724.6,274.9 1725.1,274.9 1725.6,274.9 1726.1,274.9 1726.6,274.9 1727.1,274.9 1727.6,274.9 1728.1,274.9 1728.7,274.9 1729.2,274.9 1729.7,274.9 1730.2,274.9 1730.7,274.9 1731.2,274.9 1731.7,274.9 1732.2,274.9 1732.7,274.9 1733.2,274.9 1733.7,274.9 1734.2,274.9 1734.7,274.9 1735.2,274.9 1735.7,274.9 1736.2,274.9 1736.7,274.9 1737.2,274.9 1737.7,274.9 1738.2,274.9 1738.7,274.9 1739.2,274.9 1739.7,274.9 1740.2,274.9 1740.7,274.9 1741.2,274.9 1741.7,274.9 1742.2,274.9 1742.7,274.9 1743.2,274.9 1743.7,274.9 1744.2,274.9 1744.7,274.9 1745.2,274.9 1745.7,274.9 1746.2,274.9 1746.7,274.9 1747.2,274.9 1747.7,274.9 1748.2,274.9 1748.7,274.9 1749.2,274.9 1749.7,274.9 1750.2,274.9 1750.7,274.9 1751.2,274.9 1751.7,274.9 1752.2,274.9 1752.7,274.9 1753.2,274.9 1753.7,274.9 1754.2,274.9 1754.7,274.9 1755.2,274.9 1755.7,274.9 1756.2,274.9 1756.7,274.9 1757.2,274.9 1757.7,274.9 1758.2,274.9 1758.7,274.9 1759.2,274.9 1759.7,274.9 1760.2,274.9 1760.7,274.9 1761.2,274.9 1761.7,274.9 1762.2,274.9 1762.7,274.9 1763.2,274.9 1763.7,274.9 1764.2,274.9 1764.7,274.9 1765.2,274.9 1765.7,274.9 1766.2,274.9 1766.7,274.9 1767.2,274.9 1767.7,274.9 1768.2,274.9 1768.7,274.9 1769.2,274.9 1769.7,274.9 1770.2,274.9 1770.7,274.9 1771.2,274.9 1771.7,274.9 1772.2,274.9 1772.7,274.9 1773.2,274.9 1773.7,274.9 1774.2,274.9 1774.7,275.0 1775.2,275.1 1775.7,275.1 1776.3,275.2 1776.8,275.3 1777.3,275.4 1777.8,275.6 1778.3,275.7 1778.8,275.8 1779.3,276.0 1779.8,276.1 1780.3,276.3 1780.8,276.4 1781.3,276.6 1781.8,276.8 1782.4,277.0 1782.9,277.2 1783.4,277.5 1783.9,277.8 1784.4,278.1 1784.9,278.5 1785.4,278.8 1785.9,279.2 1786.4,279.6 1786.9,280.1 1787.4,280.5 1787.9,281.0 1788.4,281.5 1789.0,281.9 1789.5,282.4 1790.0,282.9 1790.5,283.5 1791.0,284.0 1791.5,284.6 1792.0,285.3 1792.5,286.0 1793.0,286.7 1793.5,287.5 1794.0,288.3 1794.5,289.1 1795.1,289.9 1795.6,290.8 1796.1,291.6 1796.6,292.5 1797.1,293.3 1797.6,294.2 1798.1,295.0 1798.6,295.9 1799.1,296.7 1799.6,297.6 1800.1,298.5 1800.6,299.4 1801.1,300.3 1801.7,301.2 1802.2,302.2 1802.7,303.1 1803.2,304.1 1803.7,305.1 1804.2,306.0 1804.7,307.0 1805.2,307.9 1805.7,308.9 1806.2,309.8 1806.7,310.8 1807.2,311.7 1807.8,312.7 1808.3,313.6 1808.8,314.6 1809.3,315.6 1809.8,316.6 1810.3,317.6 1810.8,318.6 1811.4,319.5 1811.9,320.5 1812.4,321.4 1812.9,322.3 1813.4,323.1 1813.9,323.9 1814.4,324.7 1815.0,325.4 1815.5,326.2 1816.0,327.0 1816.5,327.8 1817.1,328.6 1817.6,329.3 1818.1,330.0 1818.6,330.5 1819.1,330.9 1819.7,331.2 1820.2,331.3 1820.7,331.2 1821.2,331.1 1821.8,330.8 1822.3,330.5 1822.8,330.2 1823.3,329.7 1823.9,329.2 1824.4,328.7 1824.9,328.1 1825.4,327.6 1826.0,327.0 1826.5,326.3 1827.0,325.4 1827.5,324.4 1828.0,323.2 1828.6,322.0 1829.1,320.6 1829.6,319.2 1830.1,317.7 1830.7,316.2 1831.2,314.7 1831.7,313.1 1832.2,311.6 1832.8,309.8 1833.3,308.0 1833.8,306.1 1834.3,304.1 1834.8,302.1 1835.4,300.1 1835.9,298.2 1836.4,296.3 1836.9,294.6 1837.5,293.0 1838.0,291.5 1838.5,290.1 1839.0,288.7 1839.5,287.4 1840.0,286.1 1840.5,284.8 1841.1,283.6 1841.6,282.4 1842.1,281.2 1842.6,280.0 1843.1,278.9 1843.6,277.8 1844.1,276.8 1844.7,275.7 1845.2,274.7 1845.7,273.8 1846.2,272.9 1846.7,272.0 1847.2,271.1 1847.7,270.3 1848.2,269.4 1848.7,268.6 1849.2,267.8 1849.7,267.0 1850.2,266.2 1850.8,265.4 1851.3,264.6 1851.8,263.8 1852.3,263.0 1852.8,262.2 1853.3,261.3 1853.8,260.5 1854.3,259.7 1854.8,258.8 1855.3,258.0 1855.8,257.1 1856.3,256.3 1856.9,255.5 1857.4,254.6 1857.9,253.8 1858.4,253.0 1858.9,252.1 1859.4,251.3 1859.9,250.4 1860.4,249.6 1860.9,248.7 1861.4,247.8 1861.9,246.9 1862.4,246.0 1862.9,245.1 1863.5,244.2 1864.0,243.2 1864.5,242.3 1865.0,241.3 1865.5,240.3 1866.0,239.3 1866.5,238.4 1867.0,237.4 1867.5,236.4 1868.0,235.5 1868.5,234.6 1869.0,233.7 1869.6,232.8 1870.1,231.9 1870.6,231.1 1871.1,230.3 1871.6,229.4 1872.1,228.6 1872.6,227.7 1873.1,226.9 1873.7,226.0 1874.2,225.2 1874.7,224.4 1875.2,223.7 1875.7,223.0 1876.2,222.4 1876.7,221.9 1877.2,221.4 1877.8,221.0 1878.3,220.7 1878.8,220.4 1879.3,220.1 1879.9,219.8 1880.4,219.6 1880.9,219.3 1881.4,219.1 1881.9,219.0 1882.5,218.8 1883.0,218.8 1883.5,218.7 1884.0,218.8 1884.6,218.9 1885.1,219.1 1885.6,219.3 1886.1,219.5 1886.7,219.9 1887.2,220.2 1887.7,220.5 1888.2,220.9 1888.8,221.3 1889.3,221.6 1889.8,222.0 1890.3,222.4 1890.8,222.9 1891.4,223.4 1891.9,224.0 1892.4,224.5 1892.9,225.1 1893.5,225.7 1894.0,226.3 1894.5,226.8 1895.0,227.4" fill="none" stroke="#ff7f0e" stroke-width="1.5" stroke-linejoin="round" /></g><text x="579.20" y="406.50" font-size="14.49" fill="#1e1e1e" stroke="#1e1e1e" stroke-width="0.12" textLength="115.95" lengthAdjust="spacingAndGlyphs" >longitudinal_jerk</text><line x1="1064.60" y1="395.80" x2="1075.20" y2="406.50" stroke="#111" stroke-width="1.5" /><line x1="1075.20" y1="395.80" x2="1064.60" y2="406.50" stroke="#111" stroke-width="1.5" /><rect x="320.00" y="416.00" width="1.20" height="223.20" fill="#111" /><text x="283.73" y="637.70" font-size="14.49" fill="#1e1e1e" stroke="#1e1e1e" stroke-width="0.12" textLength="22.88" lengthAdjust="spacingAndGlyphs" >-10</text><rect x="312.00" y="632.40" width="8.00" height="1.20" fill="#111" /><rect x="316.00" y="622.76" width="4.00" height="1.20" fill="#111" /><rect x="316.00" y="613.12" width="4.00" height="1.20" fill="#111" /><rect x="316.00" y="603.48" width="4.00" height="1.20" fill="#111" /><rect x="316.00" y="593.84" width="4.00" height="1.20" fill="#111" /><text x="292.63" y="589.50" font-size="14.49" fill="#1e1e1e" stroke="#1e1e1e" stroke-width="0.12" textLength="13.97" lengthAdjust="spacingAndGlyphs" >-5</text><rect x="312.00" y="584.20" width="8.00" height="1.20" fill="#111" /><rect x="316.00" y="574.56" width="4.00" height="1.20" fill="#111" /><rect x="316.00" y="564.92" width="4.00" height="1.20" fill="#111" /><rect x="316.00" y="555.28" width="4.00" height="1.20" fill="#111" /><rect x="316.00" y="545.64" width="4.00" height="1.20" fill="#111" /><text x="297.68" y="541.30" font-size="14.49" fill="#1e1e1e" stroke="#1e1e1e" stroke-width="0.12"  >0</text><rect x="312.00" y="536.00" width="8.00" height="1.20" fill="#111" /><rect x="316.00" y="526.36" width="4.00" height="1.20" fill="#111" /><rect x="316.00" y="516.72" width="4.00" height="1.20" fill="#111" /><rect x="316.00" y="507.08" width="4.00" height="1.20" fill="#111" /><rect x="316.00" y="497.44" width="4.00" height="1.20" fill="#111" /><text x="297.68" y="493.10" font-size="14.49" fill="#1e1e1e" stroke="#1e1e1e" stroke-width="0.12"  >5</text><rect x="312.00" y="487.80" width="8.00" height="1.20" fill="#111" /><rect x="316.00" y="478.16" width="4.00" height="1.20" fill="#111" /><rect x="316.00" y="468.52" width="4.00" height="1.20" fill="#111" /><rect x="316.00" y="458.88" width="4.00" height="1.20" fill="#111" /><rect x="316.00" y="449.24" width="4.00" height="1.20" fill="#111" /><text x="288.77" y="444.90" font-size="14.49" fill="#1e1e1e" stroke="#1e1e1e" stroke-width="0.12" textLength="17.83" lengthAdjust="spacingAndGlyphs" >10</text><rect x="312.00" y="439.60" width="8.00" height="1.20" fill="#111" /><rect x="316.00" y="429.96" width="4.00" height="1.20" fill="#111" /><rect x="316.00" y="420.32" width="4.00" height="1.20" fill="#111" /><rect x="324.10" y="643.90" width="757.70" height="1.20" fill="#111" /><rect x="355.11" y="644.50" width="1.20" height="6.00" fill="#111" /><rect x="392.98" y="644.50" width="1.20" height="4.00" fill="#111" /><text x="418.08" y="667.90" font-size="14.49" fill="#1e1e1e" stroke="#1e1e1e" stroke-width="0.12" textLength="26.73" lengthAdjust="spacingAndGlyphs" >200</text><rect x="430.85" y="644.50" width="1.20" height="8.00" fill="#111" /><rect x="468.72" y="644.50" width="1.20" height="4.00" fill="#111" /><rect x="506.59" y="644.50" width="1.20" height="6.00" fill="#111" /><rect x="544.46" y="644.50" width="1.20" height="4.00" fill="#111" /><text x="569.56" y="667.90" font-size="14.49" fill="#1e1e1e" stroke="#1e1e1e" stroke-width="0.12" textLength="26.73" lengthAdjust="spacingAndGlyphs" >220</text><rect x="582.33" y="644.50" width="1.20" height="8.00" fill="#111" /><rect x="620.20" y="644.50" width="1.20" height="4.00" fill="#111" /><rect x="658.07" y="644.50" width="1.20" height="6.00" fill="#111" /><rect x="695.94" y="644.50" width="1.20" height="4.00" fill="#111" /><text x="721.04" y="667.90" font-size="14.49" fill="#1e1e1e" stroke="#1e1e1e" stroke-width="0.12" textLength="26.73" lengthAdjust="spacingAndGlyphs" >240</text><rect x="733.81" y="644.50" width="1.20" height="8.00" fill="#111" /><rect x="771.68" y="644.50" width="1.20" height="4.00" fill="#111" /><rect x="809.55" y="644.50" width="1.20" height="6.00" fill="#111" /><rect x="847.42" y="644.50" width="1.20" height="4.00" fill="#111" /><text x="872.52" y="667.90" font-size="14.49" fill="#1e1e1e" stroke="#1e1e1e" stroke-width="0.12" textLength="26.73" lengthAdjust="spacingAndGlyphs" >260</text><rect x="885.29" y="644.50" width="1.20" height="8.00" fill="#111" /><rect x="923.16" y="644.50" width="1.20" height="4.00" fill="#111" /><rect x="961.03" y="644.50" width="1.20" height="6.00" fill="#111" /><rect x="998.90" y="644.50" width="1.20" height="4.00" fill="#111" /><text x="1024.00" y="667.90" font-size="14.49" fill="#1e1e1e" stroke="#1e1e1e" stroke-width="0.12" textLength="26.73" lengthAdjust="spacingAndGlyphs" >280</text><rect x="1036.77" y="644.50" width="1.20" height="8.00" fill="#111" /><rect x="1074.64" y="644.50" width="1.20" height="4.00" fill="#111" /><rect x="672.70" y="426.00" width="401.10" height="24.60" fill="#fff" fill-opacity="0.85" stroke="#747474" stroke-width="1.4"/><rect x="677.00" y="434.50" width="8.00" height="8.00" fill="#1ac938" /><text x="686.00" y="442.50" font-size="13.45" fill="#1e1e1e" stroke="#1e1e1e" stroke-width="0.12" textLength="380.75" lengthAdjust="spacingAndGlyphs" >/control_performance/driving_status/longitudinal_jerk/data</text><circle cx="1073.80" cy="425.00" r="5" fill="#fff" stroke="#111" stroke-width="1.1"/><defs><clipPath id="c3"><rect x="321" y="400" width="761" height="243"/></clipPath></defs><g clip-path="url(#c3)"><polyline points="324.1,536.1 324.7,536.1 325.2,536.1 325.7,536.1 326.2,536.1 326.7,536.1 327.2,536.1 327.7,536.1 328.2,536.1 328.7,536.1 329.2,536.1 329.7,536.1 330.2,536.1 330.7,536.1 331.3,536.1 331.8,536.1 332.3,536.1 332.8,536.1 333.3,536.1 333.8,536.1 334.3,536.1 334.8,536.1 335.3,533.4 335.8,526.8 336.3,519.0 336.8,512.5 337.4,506.4 338.0,500.5 338.5,495.5 339.1,492.3 339.7,490.7 340.3,489.6 340.9,488.8 341.4,487.8 342.0,486.6 342.6,485.0 343.2,483.1 343.7,480.8 344.3,477.9 344.8,473.4 345.3,466.8 345.8,460.0 346.3,454.9 346.8,451.1 347.3,447.6 347.8,445.0 348.3,443.9 348.9,444.6 349.5,446.4 350.1,449.0 350.6,452.0 351.2,456.8 351.8,464.1 352.4,472.8 352.9,481.7 353.5,489.4 354.1,496.1 354.7,502.5 355.3,508.7 355.8,514.9 356.4,521.1 357.0,527.8 357.6,534.9 358.1,541.8 358.7,548.0 359.3,552.8 359.9,556.5 360.4,559.6 361.0,562.4 361.6,564.9 362.2,567.2 362.7,569.4 363.3,571.3 363.9,573.0 364.5,574.8 365.0,576.7 365.6,578.7 366.2,581.0 366.7,583.5 367.2,586.1 367.8,588.8 368.3,591.4 368.8,593.9 369.4,596.0 369.9,598.1 370.4,600.3 371.0,602.5 371.5,604.5 372.0,606.1 372.6,607.1 373.1,607.5 373.7,606.9 374.3,605.1 374.8,602.6 375.4,599.6 376.0,596.3 376.6,593.1 377.1,589.9 377.6,585.9 378.2,581.5 378.7,576.9 379.3,572.4 379.8,568.1 380.3,564.4 380.9,561.5 381.4,559.1 382.0,556.9 382.5,554.9 383.0,553.1 383.6,551.4 384.1,549.9 384.7,548.4 385.2,547.1 385.7,545.7 386.3,544.3 386.8,543.0 387.4,541.8 387.9,540.7 388.4,539.8 389.0,539.0 389.5,538.4 390.1,538.0 390.6,537.6 391.1,537.2 391.6,536.8 392.1,536.5 392.7,536.2 393.2,536.0 393.7,535.8 394.2,535.7 394.8,535.6 395.3,535.5 395.8,535.5 396.3,535.6 396.9,535.6 397.4,535.7 397.9,535.8 398.4,535.9 399.0,535.9 399.5,536.0 400.0,536.1 400.5,536.1 401.0,536.1 401.6,536.1 402.1,536.1 402.6,536.1 403.1,536.1 403.6,536.1 404.1,536.1 404.6,536.1 405.2,536.1 405.7,536.1 406.2,536.1 406.7,536.1 407.2,536.1 407.7,536.1 408.2,536.1 408.8,535.3 409.4,533.3 410.0,530.2 410.6,526.4 411.1,522.4 411.7,518.2 412.2,514.0 412.8,508.8 413.3,503.0 413.8,496.8 414.4,490.3 414.9,484.0 415.4,477.9 416.0,471.2 416.6,464.0 417.2,457.0 417.8,450.9 418.3,446.2 418.9,442.5 419.5,439.1 420.1,436.6 420.6,435.6 421.1,436.0 421.6,437.1 422.1,438.7 422.6,440.5 423.2,443.7 423.8,448.5 424.4,454.4 425.0,460.6 425.5,466.4 426.1,472.1 426.7,478.0 427.3,484.0 427.8,489.8 428.4,495.2 429.0,500.4 429.6,505.5 430.1,510.4 430.7,514.7 431.3,518.2 431.9,521.2 432.4,523.8 433.0,526.2 433.6,528.1 434.2,529.8 434.7,531.2 435.3,532.6 435.9,533.8 436.5,534.6 437.1,535.0 437.6,535.0 438.2,535.0 438.8,535.0 439.4,535.0 439.9,535.0 440.5,535.0 441.1,535.3 441.7,536.0 442.2,536.8 442.8,537.5 443.4,537.8 444.0,537.6 444.5,537.0 445.1,536.2 445.7,535.5 446.3,534.9 446.8,534.3 447.4,533.7 448.0,533.5 448.5,533.6 449.0,533.8 449.5,534.1 450.0,534.5 450.5,535.0 451.0,535.6 451.5,536.3 452.0,537.0 452.6,538.1 453.2,539.8 453.8,541.8 454.3,544.2 454.9,546.9 455.4,550.3 456.0,554.2 456.5,558.5 457.0,563.0 457.6,567.5 458.1,571.9 458.7,575.9 459.2,579.7 459.7,583.6 460.3,587.5 460.8,591.3 461.4,595.0 461.9,598.5 462.4,601.8 463.0,604.7 463.5,607.5 464.1,610.4 464.6,613.3 465.1,616.0 465.7,618.4 466.2,620.2 466.8,621.5 467.3,621.9 467.9,621.5 468.4,620.2 469.0,618.2 469.6,615.8 470.2,613.2 470.7,610.4 471.3,607.3 471.8,603.1 472.4,598.2 472.9,593.0 473.4,587.8 474.0,582.9 474.5,578.7 475.0,574.9 475.6,571.1 476.1,567.5 476.7,564.0 477.2,560.7 477.7,557.7 478.3,555.0 478.8,552.8 479.4,550.9 479.9,549.1 480.4,547.4 481.0,545.9 481.5,544.5 482.1,543.2 482.6,542.2 483.1,541.3 483.7,540.5 484.2,539.7 484.7,539.0 485.2,538.3 485.8,537.6 486.3,537.1 486.8,536.5 487.3,536.1 487.8,535.8 488.4,535.6 488.9,535.5 489.4,535.5 489.9,535.5 490.4,535.6 490.9,535.6 491.4,535.6 491.9,535.7 492.5,535.7 493.0,535.7 493.5,535.8 494.0,535.8 494.5,535.9 495.0,535.9 495.5,536.0 496.0,536.0 496.5,536.0 497.0,536.1 497.5,536.1 498.0,536.1 498.6,536.2 499.1,536.2 499.6,536.2 500.1,536.3 500.6,536.3 501.1,536.3 501.6,536.4 502.1,536.4 502.6,536.4 503.1,536.5 503.6,536.5 504.1,536.5 504.7,536.6 505.2,536.6 505.7,536.6 506.2,536.7 506.7,536.7 507.2,536.7 507.7,536.8 508.2,536.8 508.7,536.8 509.2,536.8 509.7,536.9 510.2,536.9 510.7,536.9 511.3,536.9 511.8,536.9 512.3,536.9 512.8,536.9 513.3,537.0 513.8,537.0 514.3,537.0 514.8,537.0 515.3,537.0 515.8,536.9 516.4,536.9 516.9,536.8 517.4,536.8 517.9,536.7 518.4,536.6 518.9,536.5 519.4,536.4 520.0,536.3 520.5,536.3 521.0,536.2 521.5,536.1 522.0,536.1 522.5,536.1 523.0,536.0 523.5,536.0 524.0,536.0 524.5,536.0 525.0,536.0 525.5,536.0 526.0,536.0 526.5,536.0 527.0,536.0 527.5,536.0 528.0,536.0 528.5,536.0 529.0,536.0 529.5,536.0 530.0,536.0 530.5,536.0 531.0,536.0 531.5,536.0 532.0,536.0 532.5,536.0 533.0,536.0 533.5,536.0 534.0,536.0 534.5,536.0 535.0,536.0 535.5,536.0 536.0,536.0 536.5,536.0 537.0,536.0 537.5,536.0 538.0,536.0 538.5,536.0 539.0,536.0 539.5,536.0 540.0,536.0 540.5,536.0 541.0,536.0 541.5,536.0 542.0,536.0 542.5,536.0 543.0,536.0 543.5,536.0 544.0,536.0 544.5,536.0 545.0,536.0 545.5,536.0 546.0,536.0 546.5,536.0 547.0,536.0 547.5,536.0 548.0,536.0 548.5,536.0 549.0,536.0 549.5,536.0 550.0,536.0 550.5,536.0 551.0,536.0 551.5,536.0 552.0,536.0 552.5,536.0 553.0,536.0 553.5,536.0 554.0,536.0 554.5,536.0 555.0,536.0 555.5,536.0 556.1,536.0 556.6,536.0 557.1,536.0 557.6,536.0 558.1,536.0 558.6,536.0 559.1,536.0 559.6,536.0 560.1,536.0 560.6,536.0 561.1,536.0 561.6,536.0 562.1,536.0 562.6,536.0 563.1,536.0 563.6,536.0 564.1,536.0 564.6,536.0 565.1,536.0 565.6,536.0 566.1,536.0 566.6,536.0 567.1,536.0 567.6,536.0 568.1,536.0 568.6,536.0 569.1,536.0 569.6,536.0 570.1,536.0 570.6,536.0 571.1,536.0 571.6,536.0 572.1,536.0 572.6,536.0 573.1,536.0 573.6,536.0 574.1,536.0 574.6,536.0 575.1,536.0 575.6,536.0 576.1,536.0 576.6,536.0 577.1,536.0 577.6,536.0 578.1,536.0 578.6,536.0 579.1,536.0 579.6,536.0 580.1,536.0 580.6,536.0 581.1,536.0 581.6,536.0 582.1,536.0 582.6,536.0 583.1,536.0 583.6,536.0 584.1,536.0 584.6,536.0 585.1,536.0 585.6,536.0 586.1,536.0 586.6,536.0 587.1,536.0 587.6,536.0 588.1,536.0 588.6,536.0 589.1,536.0 589.6,536.0 590.1,536.0 590.6,536.0 591.1,536.0 591.6,536.0 592.1,536.0 592.6,536.0 593.1,536.0 593.6,536.0 594.1,536.2 594.7,536.8 595.3,537.6 595.9,538.6 596.4,539.8 597.0,541.6 597.6,544.4 598.2,547.9 598.8,551.8 599.3,555.6 599.9,559.8 600.5,564.6 601.1,569.6 601.6,574.5 602.2,578.7 602.8,582.7 603.4,586.9 603.9,590.7 604.5,593.4 605.1,594.5 605.7,594.1 606.2,593.1 606.8,591.5 607.4,589.6 608.0,587.3 608.5,583.4 609.1,577.2 609.7,569.4 610.3,561.0 610.8,552.7 611.3,544.8 611.9,535.7 612.4,527.3 612.9,521.1 613.4,515.9 614.0,511.3 614.6,508.0 615.2,506.7 615.7,507.3 616.3,508.8 616.9,510.9 617.5,513.2 618.0,515.3 618.6,517.3 619.2,519.4 619.8,521.6 620.3,524.1 620.9,526.8 621.5,530.3 622.1,534.4 622.6,538.9 623.2,543.2 623.8,547.0 624.4,550.5 625.0,554.2 625.5,557.6 626.1,560.1 626.7,561.4 627.3,561.9 627.8,562.3 628.4,562.6 629.0,562.8 629.6,562.8 630.1,562.6 630.6,562.1 631.2,561.2 631.7,560.2 632.3,559.1 632.8,557.9 633.3,556.7 633.9,555.6 634.4,554.6 635.0,553.5 635.5,552.4 636.0,551.3 636.6,550.2 637.1,549.1 637.7,548.0 638.2,547.0 638.7,546.1 639.3,545.2 639.8,544.5 640.4,543.7 640.9,542.9 641.4,542.0 642.0,541.0 642.5,539.8 643.1,538.3 643.6,536.4 644.1,534.3 644.7,531.9 645.2,529.3 645.8,526.6 646.3,523.8 646.8,521.1 647.4,518.0 648.0,514.7 648.6,511.2 649.1,507.5 649.7,503.8 650.3,499.4 650.9,494.1 651.4,488.8 652.0,484.0 652.6,480.6 653.2,479.3 653.7,480.1 654.3,481.9 654.9,484.4 655.5,487.1 656.0,489.4 656.6,491.7 657.2,494.4 657.8,496.9 658.3,498.8 658.9,499.5 659.5,497.2 660.1,491.5 660.7,484.4 661.2,477.9 661.8,472.1 662.4,466.0 663.0,459.9 663.5,454.2 664.1,449.1 664.6,444.6 665.2,439.8 665.7,435.1 666.3,430.7 666.8,426.8 667.3,423.7 667.9,421.6 668.4,420.9 669.0,421.7 669.6,423.8 670.2,426.9 670.7,430.7 671.3,434.7 671.9,439.9 672.5,446.9 673.0,455.1 673.6,463.8 674.2,472.1 674.8,480.5 675.3,489.3 675.9,498.2 676.5,507.0 677.1,515.3 677.6,523.3 678.2,531.1 678.8,538.7 679.4,546.0 679.9,552.7 680.5,559.1 681.1,565.2 681.7,571.0 682.2,576.4 682.8,581.5 683.4,586.2 683.9,590.7 684.4,595.2 685.0,599.5 685.5,603.5 686.1,607.2 686.6,610.4 687.1,613.2 687.7,615.7 688.2,618.1 688.7,620.6 689.3,622.9 689.8,625.2 690.3,627.2 690.8,629.1 691.4,630.7 691.9,632.1 692.4,633.1 692.9,633.7 693.5,633.9 694.0,633.8 694.5,633.3 695.1,632.6 695.6,631.6 696.1,630.4 696.7,629.1 697.2,627.6 697.8,624.9 698.4,620.5 698.9,615.2 699.5,609.6 700.1,604.6 700.7,600.0 701.2,595.4 701.8,590.7 702.4,586.1 703.0,581.5 703.6,576.9 704.1,572.3 704.7,567.7 705.3,563.1 705.9,558.5 706.4,553.2 707.0,547.3 707.6,541.7 708.2,537.4 708.7,535.5 709.3,535.1 709.8,534.9 710.3,534.8 710.9,534.6 711.4,534.5 711.9,534.3 712.5,534.0 713.1,533.3 713.6,532.0 714.2,530.4 714.8,529.0 715.4,527.8 715.9,527.4 716.5,527.7 717.1,528.6 717.7,529.8 718.2,531.2 718.8,532.7 719.4,534.0 719.9,535.3 720.5,536.9 721.0,538.5 721.5,540.1 722.1,541.4 722.6,542.3 723.1,542.7 723.7,542.6 724.2,542.6 724.7,542.5 725.3,542.4 725.8,542.3 726.4,542.1 726.9,542.0 727.4,541.8 728.0,541.6 728.5,541.4 729.0,541.2 729.5,540.9 730.1,540.6 730.6,540.3 731.1,540.0 731.6,539.7 732.2,539.4 732.7,539.2 733.2,538.9 733.7,538.7 734.3,538.5 734.8,538.3 735.3,538.0 735.8,537.8 736.3,537.6 736.9,537.4 737.4,537.3 737.9,537.1 738.4,537.0 739.0,536.9 739.5,536.8 740.0,536.8 740.5,536.7 741.1,536.6 741.6,536.5 742.1,536.5 742.6,536.4 743.2,536.4 743.7,536.4 744.2,536.3 744.7,536.3 745.3,536.4 745.8,536.4 746.3,536.5 746.9,536.6 747.4,536.7 748.0,536.8 748.5,536.9 749.0,536.9 749.6,536.4 750.2,534.9 750.8,532.7 751.3,530.0 751.9,526.8 752.5,521.1 753.1,512.3 753.6,502.8 754.2,495.2 754.8,489.0 755.4,482.8 756.0,477.4 756.5,473.6 757.1,472.1 757.7,472.7 758.3,474.1 758.8,476.1 759.4,478.4 760.0,480.8 760.6,483.5 761.1,486.8 761.7,490.5 762.3,494.3 762.9,497.9 763.4,500.9 764.0,503.9 764.6,506.9 765.2,509.7 765.7,511.7 766.3,512.4 766.9,511.8 767.5,510.1 768.0,507.6 768.6,504.4 769.2,500.9 769.8,495.5 770.3,487.3 770.9,477.8 771.5,468.5 772.1,460.6 772.6,454.1 773.1,447.2 773.7,440.4 774.2,434.3 774.7,429.3 775.3,425.9 775.8,424.6 776.4,425.1 777.0,426.6 777.5,428.7 778.1,431.4 778.7,434.4 779.3,437.6 779.8,441.2 780.4,446.1 780.9,451.8 781.4,458.2 782.0,464.8 782.5,471.5 783.0,477.9 783.6,483.6 784.1,489.3 784.7,495.2 785.2,501.2 785.7,507.0 786.3,512.4 786.8,517.2 787.4,521.1 787.9,524.0 788.4,525.9 789.0,527.6 789.5,529.1 790.0,530.5 790.5,531.7 791.0,532.7 791.6,533.8 792.1,534.8 792.6,535.9 793.1,537.1 793.7,538.3 794.2,539.7 794.7,541.0 795.3,542.2 795.8,543.5 796.4,544.9 796.9,546.3 797.4,548.0 798.0,549.9 798.5,552.2 799.1,555.0 799.6,558.2 800.2,561.5 800.7,565.2 801.3,569.3 801.9,573.5 802.5,577.7 803.0,581.6 803.6,585.1 804.1,588.6 804.7,592.1 805.2,595.5 805.7,598.7 806.3,601.8 806.8,604.8 807.4,607.5 807.9,610.6 808.5,613.8 809.1,616.9 809.7,619.5 810.2,621.3 810.8,621.9 811.3,621.5 811.9,620.2 812.4,618.2 812.9,615.8 813.5,613.2 814.0,610.4 814.6,606.7 815.1,601.7 815.7,596.0 816.3,590.0 816.9,584.1 817.4,578.7 818.0,573.6 818.6,568.4 819.2,563.5 819.7,559.1 820.3,555.7 820.9,553.2 821.4,550.8 821.9,548.7 822.5,546.7 823.0,545.0 823.6,543.5 824.1,542.3 824.6,541.3 825.2,540.5 825.7,539.7 826.2,538.9 826.7,538.2 827.3,537.6 827.8,537.0 828.3,536.5 828.8,536.1 829.4,535.8 829.9,535.6 830.4,535.5 830.9,535.5 831.5,535.5 832.0,535.5 832.6,535.5 833.1,535.5 833.6,535.5 834.2,535.5 834.7,535.5 835.2,535.5 835.8,535.6 836.3,535.6 836.8,535.7 837.3,535.8 837.9,535.9 838.4,535.9 838.9,536.0 839.4,536.1 840.0,536.1 840.5,536.1 841.0,536.1 841.5,536.1 842.0,536.1 842.5,536.1 843.0,536.1 843.5,536.1 844.0,536.1 844.5,536.1 845.0,536.1 845.5,536.1 846.0,536.1 846.5,536.1 847.0,536.1 847.5,536.1 848.0,536.1 848.5,536.1 849.0,536.1 849.5,536.1 850.0,536.1 850.5,536.1 851.0,536.1 851.5,536.1 852.0,536.1 852.5,536.1 853.0,536.1 853.5,536.1 854.0,536.1 854.5,536.1 855.0,536.1 855.5,536.1 856.0,536.1 856.5,536.1 857.0,536.1 857.5,536.1 858.0,536.1 858.5,536.1 859.0,536.1 859.6,536.1 860.1,536.1 860.6,536.1 861.1,536.1 861.6,536.1 862.1,536.1 862.6,536.1 863.1,536.1 863.6,536.1 864.1,536.1 864.6,536.1 865.1,536.1 865.6,536.1 866.1,536.1 866.6,536.1 867.1,536.1 867.6,536.1 868.1,536.1 868.6,536.1 869.1,536.1 869.6,536.1 870.1,536.1 870.6,536.1 871.1,536.1 871.6,536.1 872.1,536.1 872.6,536.1 873.1,536.1 873.6,536.1 874.1,536.1 874.6,536.1 875.1,536.1 875.6,536.1 876.1,536.1 876.6,536.1 877.1,536.1 877.6,536.1 878.1,536.1 878.6,536.1 879.1,536.1 879.6,536.1 880.1,536.1 880.6,536.1 881.1,536.1 881.6,536.1 882.1,536.1 882.6,536.1 883.1,536.1 883.6,536.1 884.1,536.1 884.6,536.1 885.1,536.1 885.6,536.1 886.1,536.1 886.6,536.1 887.1,536.1 887.6,536.1 888.2,536.1 888.7,536.1 889.2,536.1 889.7,536.1 890.2,536.1 890.7,536.1 891.2,536.1 891.7,536.1 892.2,536.1 892.7,536.1 893.2,536.1 893.7,536.1 894.2,536.1 894.7,536.1 895.2,536.1 895.7,536.1 896.2,536.1 896.7,536.1 897.2,536.1 897.7,536.1 898.2,536.1 898.7,536.1 899.2,536.1 899.7,536.1 900.2,536.1 900.7,536.1 901.2,536.1 901.7,536.1 902.2,536.1 902.7,536.1 903.2,536.1 903.7,536.1 904.2,536.1 904.7,536.1 905.2,536.1 905.7,536.1 906.2,536.1 906.7,536.1 907.2,536.1 907.7,536.1 908.2,536.1 908.7,536.1 909.2,536.1 909.7,536.1 910.2,536.1 910.7,536.1 911.2,536.1 911.7,536.1 912.2,536.1 912.7,536.1 913.2,536.1 913.7,536.1 914.2,536.1 914.7,536.1 915.2,536.1 915.7,536.1 916.2,536.1 916.7,536.1 917.3,536.1 917.8,536.1 918.3,536.1 918.8,536.3 919.4,536.8 920.0,537.6 920.6,538.7 921.1,539.9 921.7,542.0 922.3,545.4 922.9,549.7 923.4,554.3 924.0,558.6 924.6,562.8 925.2,567.5 925.7,572.2 926.3,576.8 926.9,581.0 927.5,584.5 928.0,587.8 928.6,591.1 929.2,593.6 929.8,594.6 930.4,593.7 930.9,591.4 931.5,588.2 932.1,584.8 932.7,581.6 933.2,578.8 933.7,575.8 934.3,572.7 934.8,569.6 935.4,566.5 935.9,563.5 936.4,560.9 937.0,558.6 937.5,556.6 938.1,554.7 938.6,553.0 939.1,551.3 939.7,549.8 940.2,548.3 940.8,546.9 941.3,545.6 941.8,544.4 942.4,543.3 942.9,542.2 943.5,541.3 944.0,540.3 944.5,539.3 945.1,538.2 945.6,537.0 946.2,535.5 946.7,533.7 947.2,531.7 947.8,529.7 948.3,527.8 948.9,526.3 949.4,525.3 949.9,524.9 950.5,525.2 951.1,526.0 951.7,527.2 952.2,528.5 952.8,529.8 953.4,531.2 954.0,532.8 954.5,534.6 955.1,536.3 955.7,537.6 956.3,538.4 956.8,538.8 957.3,539.2 957.8,539.6 958.3,539.9 958.8,540.2 959.3,540.4 959.9,540.6 960.4,540.7 960.9,540.7 961.4,540.7 961.9,540.6 962.5,540.4 963.0,540.2 963.5,540.0 964.1,539.8 964.6,539.5 965.1,539.2 965.6,539.0 966.2,538.8 966.7,538.6 967.2,538.4 967.7,538.3 968.2,538.2 968.7,538.1 969.3,537.9 969.8,537.8 970.3,537.7 970.8,537.6 971.3,537.5 971.8,537.4 972.3,537.3 972.8,537.2 973.3,537.2 973.8,537.1 974.3,537.0 974.8,537.0 975.4,537.0 975.9,537.0 976.4,537.0 976.9,537.0 977.4,537.0 977.9,537.0 978.4,537.0 978.9,537.0 979.4,537.0 979.9,537.0 980.4,537.0 980.9,537.0 981.4,537.0 981.9,537.0 982.4,537.0 982.9,537.0 983.4,537.0 983.9,537.0 984.4,537.0 984.9,537.0 985.4,537.0 985.9,537.0 986.4,537.0 986.9,537.0 987.4,537.0 988.0,536.1 988.5,533.8 989.1,530.5 989.7,526.9 990.3,521.8 990.8,514.5 991.4,506.4 992.0,498.5 992.6,492.3 993.1,487.1 993.7,481.8 994.3,477.2 994.9,474.0 995.4,472.7 996.0,473.1 996.6,474.0 997.2,475.3 997.7,477.0 998.3,478.9 998.9,480.8 999.5,483.3 1000.1,486.6 1000.6,490.5 1001.2,494.4 1001.8,498.0 1002.4,501.0 1002.9,503.6 1003.5,506.3 1004.1,508.7 1004.7,510.4 1005.2,511.1 1005.8,510.2 1006.4,507.7 1007.0,504.2 1007.5,499.9 1008.1,495.2 1008.7,488.6 1009.3,479.3 1009.8,469.4 1010.4,460.6 1011.0,452.4 1011.6,443.6 1012.2,435.6 1012.7,429.8 1013.3,427.5 1013.9,428.0 1014.5,429.5 1015.0,431.6 1015.6,434.4 1016.2,437.6 1016.8,443.5 1017.3,453.2 1017.9,465.2 1018.5,477.8 1019.1,489.5 1019.6,500.6 1020.2,512.3 1020.8,523.9 1021.4,534.8 1021.9,544.2 1022.5,552.3 1023.1,559.9 1023.7,566.8 1024.2,573.1 1024.8,578.7 1025.4,583.6 1025.9,588.3 1026.4,592.8 1027.0,597.0 1027.5,600.9 1028.1,604.5 1028.6,607.6 1029.1,610.4 1029.7,612.9 1030.2,615.3 1030.7,617.8 1031.2,620.1 1031.7,622.4 1032.2,624.6 1032.7,626.6 1033.2,628.3 1033.7,629.9 1034.2,631.1 1034.8,632.1 1035.3,632.7 1035.8,632.9 1036.3,632.5 1036.9,631.3 1037.5,629.5 1038.1,627.2 1038.6,624.7 1039.2,621.9 1039.8,618.2 1040.4,612.8 1041.0,606.3 1041.5,599.6 1042.1,593.0 1042.7,587.4 1043.2,582.9 1043.8,578.8 1044.3,574.8 1044.8,570.9 1045.4,567.0 1045.9,562.9 1046.4,558.6 1047.0,554.0 1047.5,549.2 1048.0,544.3 1048.6,539.4 1049.1,534.2 1049.7,529.0 1050.2,523.7 1050.7,518.3 1051.3,511.7 1051.9,504.3 1052.5,497.0 1053.1,490.8 1053.6,486.6 1054.2,483.8 1054.8,481.3 1055.4,479.2 1055.9,477.9 1056.5,477.4 1057.1,477.9 1057.7,479.4 1058.2,481.6 1058.8,484.2 1059.4,486.9 1060.0,489.5 1060.5,492.1 1061.1,495.2 1061.7,498.4 1062.3,501.4 1062.8,503.9 1063.4,506.0 1064.0,508.2 1064.6,510.1 1065.1,511.4 1065.7,511.9 1066.2,511.7 1066.8,511.2 1067.3,510.3 1067.8,509.2 1068.3,507.9 1068.8,506.5 1069.4,505.1 1069.9,503.6 1070.4,502.2 1070.9,501.0 1071.4,499.8 1072.0,498.7 1072.5,497.6 1073.0,496.5 1073.5,495.4 1074.1,494.2 1074.6,492.9 1075.1,491.6 1075.6,490.1 1076.1,488.4 1076.7,486.6 1077.2,484.1 1077.8,481.0 1078.4,477.4 1079.0,473.4 1079.5,469.3 1080.1,464.7 1080.7,459.4 1081.3,453.9 1081.9,448.6" fill="none" stroke="#1ac938" stroke-width="1.5" stroke-linejoin="round" /></g><text x="1415.20" y="406.50" font-size="14.49" fill="#1e1e1e" stroke="#1e1e1e" stroke-width="0.12" textLength="78.17" lengthAdjust="spacingAndGlyphs" >lateral_jerk</text><line x1="1877.50" y1="395.80" x2="1888.40" y2="406.50" stroke="#111" stroke-width="1.5" /><line x1="1888.40" y1="395.80" x2="1877.50" y2="406.50" stroke="#111" stroke-width="1.5" /><rect x="1132.00" y="416.00" width="1.20" height="223.10" fill="#111" /><rect x="1128.00" y="634.57" width="4.00" height="1.20" fill="#111" /><rect x="1128.00" y="627.93" width="4.00" height="1.20" fill="#111" /><rect x="1128.00" y="621.28" width="4.00" height="1.20" fill="#111" /><text x="1104.63" y="619.94" font-size="14.49" fill="#1e1e1e" stroke="#1e1e1e" stroke-width="0.12" textLength="13.97" lengthAdjust="spacingAndGlyphs" >-2</text><rect x="1124.00" y="614.64" width="8.00" height="1.20" fill="#111" /><rect x="1128.00" y="608.00" width="4.00" height="1.20" fill="#111" /><rect x="1128.00" y="601.35" width="4.00" height="1.20" fill="#111" /><rect x="1128.00" y="594.71" width="4.00" height="1.20" fill="#111" /><rect x="1128.00" y="588.06" width="4.00" height="1.20" fill="#111" /><text x="1104.63" y="586.72" font-size="14.49" fill="#1e1e1e" stroke="#1e1e1e" stroke-width="0.12" textLength="13.97" lengthAdjust="spacingAndGlyphs" >-1</text><rect x="1124.00" y="581.42" width="8.00" height="1.20" fill="#111" /><rect x="1128.00" y="574.78" width="4.00" height="1.20" fill="#111" /><rect x="1128.00" y="568.13" width="4.00" height="1.20" fill="#111" /><rect x="1128.00" y="561.49" width="4.00" height="1.20" fill="#111" /><rect x="1128.00" y="554.84" width="4.00" height="1.20" fill="#111" /><text x="1109.68" y="553.50" font-size="14.49" fill="#1e1e1e" stroke="#1e1e1e" stroke-width="0.12"  >0</text><rect x="1124.00" y="548.20" width="8.00" height="1.20" fill="#111" /><rect x="1128.00" y="541.56" width="4.00" height="1.20" fill="#111" /><rect x="1128.00" y="534.91" width="4.00" height="1.20" fill="#111" /><rect x="1128.00" y="528.27" width="4.00" height="1.20" fill="#111" /><rect x="1128.00" y="521.62" width="4.00" height="1.20" fill="#111" /><text x="1109.68" y="520.28" font-size="14.49" fill="#1e1e1e" stroke="#1e1e1e" stroke-width="0.12"  >1</text><rect x="1124.00" y="514.98" width="8.00" height="1.20" fill="#111" /><rect x="1128.00" y="508.34" width="4.00" height="1.20" fill="#111" /><rect x="1128.00" y="501.69" width="4.00" height="1.20" fill="#111" /><rect x="1128.00" y="495.05" width="4.00" height="1.20" fill="#111" /><rect x="1128.00" y="488.40" width="4.00" height="1.20" fill="#111" /><text x="1109.68" y="487.06" font-size="14.49" fill="#1e1e1e" stroke="#1e1e1e" stroke-width="0.12"  >2</text><rect x="1124.00" y="481.76" width="8.00" height="1.20" fill="#111" /><rect x="1128.00" y="475.12" width="4.00" height="1.20" fill="#111" /><rect x="1128.00" y="468.47" width="4.00" height="1.20" fill="#111" /><rect x="1128.00" y="461.83" width="4.00" height="1.20" fill="#111" /><rect x="1128.00" y="455.18" width="4.00" height="1.20" fill="#111" /><text x="1109.68" y="453.84" font-size="14.49" fill="#1e1e1e" stroke="#1e1e1e" stroke-width="0.12"  >3</text><rect x="1124.00" y="448.54" width="8.00" height="1.20" fill="#111" /><rect x="1128.00" y="441.90" width="4.00" height="1.20" fill="#111" /><rect x="1128.00" y="435.25" width="4.00" height="1.20" fill="#111" /><rect x="1128.00" y="428.61" width="4.00" height="1.20" fill="#111" /><rect x="1128.00" y="421.96" width="4.00" height="1.20" fill="#111" /><rect x="1136.00" y="643.90" width="758.70" height="1.20" fill="#111" /><rect x="1167.03" y="644.50" width="1.20" height="6.00" fill="#111" /><rect x="1204.96" y="644.50" width="1.20" height="4.00" fill="#111" /><text x="1230.13" y="667.90" font-size="14.49" fill="#1e1e1e" stroke="#1e1e1e" stroke-width="0.12" textLength="26.73" lengthAdjust="spacingAndGlyphs" >200</text><rect x="1242.90" y="644.50" width="1.20" height="8.00" fill="#111" /><rect x="1280.84" y="644.50" width="1.20" height="4.00" fill="#111" /><rect x="1318.78" y="644.50" width="1.20" height="6.00" fill="#111" /><rect x="1356.71" y="644.50" width="1.20" height="4.00" fill="#111" /><text x="1381.88" y="667.90" font-size="14.49" fill="#1e1e1e" stroke="#1e1e1e" stroke-width="0.12" textLength="26.73" lengthAdjust="spacingAndGlyphs" >220</text><rect x="1394.65" y="644.50" width="1.20" height="8.00" fill="#111" /><rect x="1432.59" y="644.50" width="1.20" height="4.00" fill="#111" /><rect x="1470.53" y="644.50" width="1.20" height="6.00" fill="#111" /><rect x="1508.46" y="644.50" width="1.20" height="4.00" fill="#111" /><text x="1533.63" y="667.90" font-size="14.49" fill="#1e1e1e" stroke="#1e1e1e" stroke-width="0.12" textLength="26.73" lengthAdjust="spacingAndGlyphs" >240</text><rect x="1546.40" y="644.50" width="1.20" height="8.00" fill="#111" /><rect x="1584.34" y="644.50" width="1.20" height="4.00" fill="#111" /><rect x="1622.28" y="644.50" width="1.20" height="6.00" fill="#111" /><rect x="1660.21" y="644.50" width="1.20" height="4.00" fill="#111" /><text x="1685.38" y="667.90" font-size="14.49" fill="#1e1e1e" stroke="#1e1e1e" stroke-width="0.12" textLength="26.73" lengthAdjust="spacingAndGlyphs" >260</text><rect x="1698.15" y="644.50" width="1.20" height="8.00" fill="#111" /><rect x="1736.09" y="644.50" width="1.20" height="4.00" fill="#111" /><rect x="1774.03" y="644.50" width="1.20" height="6.00" fill="#111" /><rect x="1811.96" y="644.50" width="1.20" height="4.00" fill="#111" /><text x="1837.13" y="667.90" font-size="14.49" fill="#1e1e1e" stroke="#1e1e1e" stroke-width="0.12" textLength="26.73" lengthAdjust="spacingAndGlyphs" >280</text><rect x="1849.90" y="644.50" width="1.20" height="8.00" fill="#111" /><rect x="1887.84" y="644.50" width="1.20" height="4.00" fill="#111" /><rect x="1520.60" y="426.00" width="366.10" height="24.60" fill="#fff" fill-opacity="0.85" stroke="#747474" stroke-width="1.4"/><rect x="1525.00" y="434.50" width="8.00" height="8.00" fill="#f14cc1" /><text x="1534.00" y="442.50" font-size="13.45" fill="#1e1e1e" stroke="#1e1e1e" stroke-width="0.12" textLength="345.66" lengthAdjust="spacingAndGlyphs" >/control_performance/driving_status/lateral_jerk/data</text><circle cx="1886.70" cy="425.00" r="5" fill="#fff" stroke="#111" stroke-width="1.1"/><defs><clipPath id="c4"><rect x="1133" y="400" width="762" height="243"/></clipPath></defs><g clip-path="url(#c4)"><polyline points="1136.1,547.6 1136.6,547.6 1137.1,547.6 1137.6,547.6 1138.1,547.6 1138.6,547.6 1139.2,547.6 1139.7,547.6 1140.2,547.6 1140.7,547.6 1141.2,547.6 1141.7,547.6 1142.3,547.6 1142.8,547.6 1143.3,547.6 1143.8,547.6 1144.3,547.6 1144.8,547.6 1145.4,547.6 1145.9,547.6 1146.4,547.6 1146.9,547.6 1147.4,547.6 1147.9,547.6 1148.4,547.6 1149.0,547.3 1149.6,546.5 1150.2,545.3 1150.7,544.0 1151.3,542.6 1151.9,541.2 1152.4,540.0 1153.0,538.7 1153.5,537.3 1154.1,535.9 1154.6,534.4 1155.1,532.9 1155.7,531.3 1156.2,529.7 1156.8,527.9 1157.3,525.9 1157.8,523.7 1158.4,521.5 1158.9,519.4 1159.5,517.6 1160.0,516.2 1160.5,515.3 1161.0,514.8 1161.5,514.3 1162.0,514.0 1162.6,513.9 1163.1,514.5 1163.7,516.1 1164.3,518.4 1164.9,521.1 1165.4,524.9 1166.0,530.6 1166.6,537.5 1167.2,545.1 1167.7,552.7 1168.3,561.4 1168.9,571.4 1169.5,581.8 1170.0,591.3 1170.6,598.8 1171.2,605.1 1171.8,611.3 1172.3,616.7 1172.9,620.4 1173.5,621.8 1174.1,620.8 1174.6,618.1 1175.2,614.1 1175.8,609.5 1176.4,604.6 1176.9,598.7 1177.5,591.1 1178.1,582.5 1178.7,573.3 1179.3,564.3 1179.8,555.0 1180.4,545.1 1181.0,534.9 1181.6,524.9 1182.1,515.3 1182.7,506.1 1183.3,496.8 1183.9,487.9 1184.4,479.6 1185.0,472.1 1185.6,465.2 1186.2,458.6 1186.7,452.5 1187.3,447.3 1187.9,443.3 1188.4,440.5 1189.0,437.9 1189.5,435.6 1190.0,433.6 1190.6,431.7 1191.1,430.1 1191.7,428.7 1192.2,427.5 1192.7,426.4 1193.3,425.2 1193.8,424.2 1194.4,423.2 1194.9,422.4 1195.4,421.7 1196.0,421.3 1196.5,421.2 1197.1,421.3 1197.6,421.8 1198.1,422.5 1198.7,423.5 1199.2,424.7 1199.8,426.0 1200.3,427.4 1200.8,428.9 1201.4,431.2 1202.0,434.3 1202.6,438.0 1203.1,442.1 1203.7,446.2 1204.3,450.2 1204.8,454.5 1205.3,459.1 1205.9,463.9 1206.4,468.8 1207.0,473.8 1207.5,478.7 1208.0,483.6 1208.6,488.5 1209.1,493.5 1209.7,498.5 1210.2,503.6 1210.7,508.7 1211.3,513.8 1211.8,518.9 1212.4,524.0 1212.9,529.0 1213.4,534.0 1214.0,539.1 1214.5,544.1 1215.1,549.1 1215.6,554.2 1216.1,559.2 1216.7,564.3 1217.2,569.4 1217.8,574.9 1218.3,580.3 1218.8,585.8 1219.4,591.1 1219.9,596.0 1220.5,600.6 1221.0,604.6 1221.5,608.2 1222.1,611.8 1222.6,615.2 1223.2,618.4 1223.7,621.3 1224.2,623.8 1224.8,626.0 1225.3,627.6 1225.9,629.0 1226.4,630.3 1226.9,631.5 1227.5,632.6 1228.0,633.5 1228.6,634.2 1229.1,634.6 1229.6,634.8 1230.2,634.8 1230.7,634.7 1231.2,634.7 1231.7,634.6 1232.3,634.5 1232.8,634.3 1233.3,634.2 1233.8,634.0 1234.3,633.8 1234.9,633.6 1235.4,633.4 1235.9,633.0 1236.5,632.4 1237.0,631.7 1237.6,630.8 1238.1,629.8 1238.6,628.7 1239.2,627.4 1239.7,626.2 1240.3,624.7 1240.8,622.8 1241.3,620.6 1241.9,618.2 1242.4,615.6 1243.0,612.9 1243.5,610.2 1244.0,607.4 1244.6,604.6 1245.1,601.4 1245.7,598.1 1246.2,594.6 1246.7,591.1 1247.3,587.8 1247.8,584.5 1248.3,581.5 1248.9,578.7 1249.4,575.8 1250.0,573.0 1250.5,570.3 1251.0,567.7 1251.6,565.4 1252.1,563.2 1252.7,561.4 1253.2,559.8 1253.7,558.3 1254.3,556.9 1254.8,555.6 1255.4,554.5 1255.9,553.3 1256.4,552.3 1257.0,551.3 1257.5,550.3 1258.1,549.2 1258.6,548.2 1259.1,547.2 1259.7,546.3 1260.2,545.6 1260.8,545.1 1261.3,545.0 1261.8,545.0 1262.4,545.0 1262.9,545.1 1263.5,545.2 1264.0,545.2 1264.5,545.3 1265.1,545.4 1265.6,545.5 1266.1,545.7 1266.7,545.8 1267.2,546.0 1267.7,546.2 1268.2,546.4 1268.8,546.6 1269.3,546.8 1269.8,547.0 1270.3,547.2 1270.9,547.4 1271.4,547.6 1271.9,547.7 1272.4,547.9 1272.9,548.1 1273.4,548.2 1273.9,548.4 1274.4,548.6 1274.9,548.8 1275.4,549.0 1276.0,549.1 1276.5,549.3 1277.0,549.4 1277.5,549.5 1278.0,549.7 1278.5,549.7 1279.0,549.8 1279.5,549.9 1280.0,549.9 1280.5,549.9 1281.0,549.9 1281.5,549.9 1282.0,549.8 1282.5,549.8 1283.0,549.8 1283.5,549.8 1284.0,549.8 1284.5,549.8 1285.0,549.7 1285.5,549.7 1286.0,549.7 1286.5,549.7 1287.0,549.6 1287.5,549.6 1288.0,549.6 1288.5,549.5 1289.0,549.5 1289.5,549.4 1290.0,549.4 1290.5,549.4 1291.0,549.3 1291.5,549.3 1292.0,549.2 1292.6,549.2 1293.1,549.1 1293.6,549.0 1294.1,548.8 1294.6,548.7 1295.1,548.6 1295.6,548.4 1296.1,548.3 1296.6,548.1 1297.1,548.0 1297.6,547.9 1298.1,547.8 1298.6,547.7 1299.2,547.6 1299.7,547.6 1300.2,547.6 1300.7,547.6 1301.2,547.6 1301.7,547.6 1302.2,547.6 1302.7,547.6 1303.2,547.6 1303.7,547.6 1304.2,547.6 1304.7,547.6 1305.2,547.6 1305.7,547.6 1306.2,547.6 1306.7,547.6 1307.2,547.6 1307.7,547.6 1308.2,547.6 1308.7,547.6 1309.2,547.6 1309.7,547.6 1310.2,547.6 1310.7,547.6 1311.2,547.6 1311.7,547.6 1312.2,547.6 1312.7,547.7 1313.2,547.8 1313.7,547.9 1314.2,548.0 1314.7,548.2 1315.2,548.4 1315.8,548.6 1316.3,548.8 1316.8,549.0 1317.3,549.2 1317.8,549.4 1318.3,549.5 1318.8,549.7 1319.3,549.8 1319.8,549.8 1320.3,549.9 1320.8,549.9 1321.3,549.9 1321.9,549.9 1322.4,549.9 1322.9,549.9 1323.4,549.9 1323.9,549.9 1324.4,549.9 1324.9,549.9 1325.4,549.9 1325.9,549.9 1326.4,549.9 1326.9,549.9 1327.4,549.9 1327.9,549.9 1328.5,549.9 1329.0,549.9 1329.5,549.8 1330.0,549.8 1330.5,549.7 1331.0,549.5 1331.5,549.4 1332.0,549.2 1332.5,549.0 1333.0,548.8 1333.5,548.6 1334.0,548.4 1334.6,548.2 1335.1,548.0 1335.6,547.9 1336.1,547.8 1336.6,547.7 1337.1,547.6 1337.6,547.6 1338.1,547.6 1338.6,547.6 1339.1,547.6 1339.6,547.6 1340.1,547.6 1340.6,547.6 1341.1,547.6 1341.6,547.6 1342.1,547.6 1342.6,547.6 1343.1,547.6 1343.6,547.6 1344.1,547.6 1344.6,547.6 1345.1,547.6 1345.6,547.6 1346.1,547.6 1346.6,547.6 1347.1,547.6 1347.6,547.6 1348.1,547.6 1348.6,547.6 1349.1,547.6 1349.6,547.6 1350.1,547.6 1350.6,547.6 1351.1,547.6 1351.6,547.6 1352.1,547.6 1352.6,547.6 1353.1,547.6 1353.6,547.6 1354.1,547.6 1354.6,547.6 1355.1,547.6 1355.6,547.6 1356.1,547.6 1356.6,547.6 1357.1,547.6 1357.6,547.6 1358.1,547.6 1358.6,547.6 1359.1,547.6 1359.6,547.6 1360.1,547.6 1360.6,547.6 1361.1,547.6 1361.6,547.6 1362.1,547.6 1362.6,547.6 1363.1,547.6 1363.6,547.6 1364.1,547.6 1364.6,547.6 1365.1,547.6 1365.6,547.6 1366.1,547.6 1366.6,547.6 1367.1,547.6 1367.6,547.6 1368.1,547.6 1368.6,547.6 1369.1,547.6 1369.6,547.6 1370.1,547.6 1370.6,547.6 1371.1,547.6 1371.6,547.6 1372.1,547.6 1372.7,547.6 1373.2,547.7 1373.7,547.8 1374.2,548.0 1374.8,548.2 1375.3,548.4 1375.8,548.6 1376.3,548.7 1376.9,548.9 1377.4,549.0 1377.9,549.0 1378.4,549.0 1378.9,549.0 1379.4,549.0 1379.9,549.0 1380.4,549.0 1380.9,549.0 1381.4,549.0 1381.9,549.0 1382.4,549.0 1382.9,549.0 1383.5,549.0 1384.0,549.0 1384.5,549.0 1385.0,549.0 1385.5,549.0 1386.0,549.0 1386.5,549.0 1387.0,549.0 1387.5,549.0 1388.0,549.0 1388.5,549.0 1389.0,549.0 1389.5,549.0 1390.0,549.0 1390.5,549.0 1391.0,548.9 1391.5,548.7 1392.0,548.6 1392.5,548.5 1393.0,548.4 1393.6,548.4 1394.1,548.5 1394.6,548.6 1395.1,548.7 1395.6,548.9 1396.2,549.0 1396.7,549.2 1397.2,549.4 1397.7,549.6 1398.3,549.7 1398.8,549.9 1399.3,550.0 1399.8,550.2 1400.3,550.4 1400.8,550.5 1401.4,550.7 1401.9,550.9 1402.4,551.1 1402.9,551.3 1403.4,551.4 1403.9,551.6 1404.4,551.7 1405.0,551.8 1405.5,551.9 1406.0,551.9 1406.5,551.8 1407.0,551.7 1407.5,551.6 1408.0,551.4 1408.6,551.1 1409.1,550.9 1409.6,550.5 1410.1,550.2 1410.6,549.9 1411.1,549.6 1411.6,549.2 1412.2,548.9 1412.7,548.7 1413.2,548.4 1413.7,548.2 1414.2,547.9 1414.7,547.7 1415.2,547.4 1415.8,547.1 1416.3,546.9 1416.8,546.6 1417.3,546.4 1417.8,546.1 1418.3,545.9 1418.8,545.8 1419.4,545.7 1419.9,545.6 1420.4,545.5 1420.9,545.6 1421.4,545.7 1421.9,545.9 1422.4,546.1 1423.0,546.3 1423.5,546.7 1424.0,547.0 1424.5,547.4 1425.0,547.8 1425.5,548.2 1426.0,548.6 1426.6,549.0 1427.1,549.5 1427.6,549.9 1428.1,550.3 1428.6,550.8 1429.1,551.3 1429.6,551.9 1430.1,552.6 1430.6,553.2 1431.1,553.9 1431.6,554.6 1432.2,555.3 1432.7,556.0 1433.2,556.6 1433.7,557.3 1434.2,557.9 1434.7,558.5 1435.2,559.0 1435.7,559.5 1436.2,559.9 1436.7,560.3 1437.2,560.7 1437.7,561.1 1438.3,561.4 1438.8,561.8 1439.3,562.1 1439.8,562.4 1440.3,562.7 1440.8,563.0 1441.3,563.3 1441.8,563.6 1442.3,563.8 1442.8,564.1 1443.3,564.3 1443.8,564.5 1444.3,564.7 1444.9,564.8 1445.4,565.0 1445.9,565.1 1446.4,565.3 1446.9,565.4 1447.4,565.6 1447.9,565.7 1448.4,565.8 1448.9,566.0 1449.4,566.1 1449.9,566.2 1450.4,566.3 1451.0,566.4 1451.5,566.4 1452.0,566.5 1452.5,566.5 1453.0,566.6 1453.5,566.6 1454.0,566.5 1454.5,566.5 1455.0,566.4 1455.5,566.3 1456.0,566.2 1456.5,566.1 1457.0,565.9 1457.6,565.7 1458.1,565.5 1458.6,565.3 1459.1,565.1 1459.6,564.9 1460.1,564.6 1460.6,564.4 1461.1,564.2 1461.6,563.9 1462.1,563.7 1462.6,563.4 1463.2,563.2 1463.7,563.0 1464.2,562.7 1464.7,562.4 1465.2,562.1 1465.7,561.8 1466.2,561.5 1466.8,561.1 1467.3,560.6 1467.8,560.2 1468.3,559.7 1468.8,559.1 1469.3,558.5 1469.9,557.6 1470.4,556.1 1470.9,554.4 1471.5,552.3 1472.0,550.2 1472.6,548.0 1473.1,546.0 1473.6,544.1 1474.2,542.4 1474.7,540.7 1475.2,539.0 1475.7,537.3 1476.3,535.6 1476.8,534.0 1477.3,532.4 1477.8,530.8 1478.4,529.4 1478.9,528.1 1479.4,526.8 1479.9,525.7 1480.5,524.6 1481.0,523.5 1481.5,522.4 1482.0,521.4 1482.5,520.4 1483.1,519.5 1483.6,518.7 1484.1,518.0 1484.6,517.3 1485.2,516.8 1485.7,516.2 1486.2,515.7 1486.8,515.2 1487.3,514.8 1487.9,514.4 1488.4,514.1 1488.9,513.9 1489.5,513.9 1490.0,514.1 1490.6,514.6 1491.1,515.3 1491.6,516.3 1492.2,517.4 1492.7,518.6 1493.3,519.8 1493.8,521.1 1494.3,522.4 1494.8,524.0 1495.4,525.7 1495.9,527.7 1496.4,529.7 1496.9,531.8 1497.5,533.9 1498.0,535.9 1498.5,537.9 1499.0,539.7 1499.6,541.2 1500.1,542.7 1500.6,544.3 1501.2,545.8 1501.7,547.2 1502.3,548.5 1502.8,549.7 1503.3,550.6 1503.9,551.3 1504.4,551.8 1504.9,552.3 1505.4,552.8 1506.0,553.2 1506.5,553.6 1507.0,553.9 1507.5,554.2 1508.1,554.4 1508.6,554.6 1509.1,554.7 1509.6,554.8 1510.1,554.7 1510.7,554.7 1511.2,554.6 1511.7,554.4 1512.2,554.3 1512.7,554.1 1513.2,553.9 1513.7,553.7 1514.3,553.4 1514.8,553.2 1515.3,552.9 1515.8,552.7 1516.3,552.4 1516.8,552.2 1517.3,551.9 1517.9,551.6 1518.4,551.3 1518.9,550.9 1519.4,550.5 1519.9,550.2 1520.4,549.8 1520.9,549.4 1521.5,549.0 1522.0,548.6 1522.5,548.3 1523.0,548.0 1523.5,547.8 1524.0,547.6 1524.5,547.4 1525.1,547.2 1525.6,547.0 1526.1,546.9 1526.6,546.7 1527.1,546.5 1527.6,546.4 1528.1,546.3 1528.7,546.1 1529.2,546.0 1529.7,545.9 1530.2,545.9 1530.7,545.8 1531.2,545.8 1531.7,545.9 1532.2,545.9 1532.8,546.0 1533.3,546.1 1533.8,546.2 1534.3,546.4 1534.8,546.6 1535.3,546.8 1535.8,547.0 1536.3,547.2 1536.8,547.5 1537.3,547.7 1537.8,548.0 1538.3,548.2 1538.8,548.5 1539.4,548.7 1539.9,549.0 1540.4,549.3 1540.9,549.5 1541.4,549.8 1541.9,550.1 1542.4,550.5 1543.0,550.8 1543.5,551.2 1544.0,551.6 1544.5,552.0 1545.0,552.4 1545.5,552.8 1546.0,553.2 1546.5,553.7 1547.1,554.2 1547.6,554.7 1548.1,555.3 1548.6,555.9 1549.1,556.6 1549.6,557.3 1550.1,558.0 1550.7,558.7 1551.2,559.5 1551.7,560.3 1552.2,561.1 1552.7,561.9 1553.2,562.7 1553.7,563.5 1554.3,564.3 1554.8,565.1 1555.3,565.9 1555.8,566.8 1556.3,567.8 1556.8,568.7 1557.3,569.7 1557.9,570.7 1558.4,571.6 1558.9,572.5 1559.4,573.3 1559.9,574.1 1560.4,574.7 1560.9,575.3 1561.5,575.8 1562.0,576.2 1562.5,576.6 1563.0,577.0 1563.5,577.3 1564.0,577.7 1564.5,578.0 1565.1,578.4 1565.6,578.6 1566.1,578.9 1566.6,579.1 1567.1,579.3 1567.6,579.4 1568.1,579.5 1568.7,579.5 1569.2,579.5 1569.7,579.4 1570.2,579.3 1570.8,579.2 1571.3,579.0 1571.8,578.8 1572.3,578.5 1572.8,578.2 1573.4,577.9 1573.9,577.6 1574.4,577.2 1575.0,576.7 1575.5,575.8 1576.0,574.6 1576.6,573.3 1577.1,571.8 1577.7,570.3 1578.2,568.7 1578.7,567.1 1579.3,565.6 1579.8,564.0 1580.3,562.2 1580.8,560.4 1581.4,558.5 1581.9,556.6 1582.4,554.7 1582.9,552.7 1583.4,550.8 1584.0,548.9 1584.5,547.0 1585.0,545.2 1585.5,543.3 1586.1,541.5 1586.6,539.6 1587.1,537.8 1587.6,535.9 1588.2,534.1 1588.7,532.3 1589.2,530.4 1589.7,528.6 1590.2,526.8 1590.8,524.9 1591.3,523.0 1591.9,521.0 1592.4,519.0 1592.9,517.2 1593.5,515.4 1594.0,513.8 1594.6,512.4 1595.1,511.1 1595.7,509.8 1596.2,508.5 1596.7,507.3 1597.3,506.2 1597.8,505.2 1598.4,504.5 1598.9,504.0 1599.5,503.8 1600.0,503.9 1600.5,504.1 1601.0,504.5 1601.5,505.0 1602.1,505.6 1602.6,506.3 1603.1,507.1 1603.6,507.9 1604.1,508.7 1604.6,509.6 1605.2,510.5 1605.7,511.7 1606.2,513.2 1606.7,514.7 1607.3,516.4 1607.8,518.2 1608.3,520.0 1608.8,521.8 1609.4,523.6 1609.9,525.3 1610.4,526.8 1610.9,528.4 1611.5,530.0 1612.0,531.6 1612.5,533.3 1613.0,534.9 1613.5,536.5 1614.1,538.0 1614.6,539.4 1615.1,540.7 1615.6,541.8 1616.2,542.7 1616.7,543.4 1617.2,544.2 1617.7,544.9 1618.2,545.7 1618.7,546.4 1619.2,547.0 1619.8,547.6 1620.3,548.2 1620.8,548.6 1621.3,549.1 1621.8,549.4 1622.3,549.7 1622.8,549.8 1623.4,549.9 1623.9,549.9 1624.4,549.9 1624.9,549.9 1625.4,549.9 1625.9,549.9 1626.4,549.9 1626.9,549.9 1627.4,549.9 1627.9,549.9 1628.4,549.9 1628.9,549.9 1629.4,549.9 1629.9,549.9 1630.4,549.9 1630.9,549.9 1631.4,549.9 1631.9,549.9 1632.4,549.9 1632.9,549.9 1633.4,549.9 1633.9,549.9 1634.4,549.9 1634.9,549.9 1635.4,549.9 1635.9,549.8 1636.4,549.8 1636.9,549.7 1637.4,549.6 1637.9,549.5 1638.4,549.4 1638.9,549.2 1639.4,549.1 1639.9,548.9 1640.4,548.8 1640.9,548.6 1641.4,548.5 1641.9,548.3 1642.4,548.2 1642.9,548.1 1643.4,548.0 1643.9,547.8 1644.4,547.7 1644.9,547.7 1645.4,547.6 1645.9,547.6 1646.4,547.6 1646.9,547.6 1647.4,547.6 1647.9,547.6 1648.4,547.6 1648.9,547.6 1649.4,547.6 1649.9,547.6 1650.5,547.6 1651.0,547.6 1651.5,547.6 1652.0,547.6 1652.5,547.6 1653.0,547.6 1653.5,547.6 1654.0,547.6 1654.5,547.6 1655.0,547.6 1655.5,547.6 1656.0,547.6 1656.6,547.6 1657.1,547.6 1657.6,547.6 1658.1,547.6 1658.6,547.6 1659.1,547.6 1659.6,547.6 1660.1,547.6 1660.6,547.6 1661.1,547.6 1661.6,547.6 1662.1,547.6 1662.6,547.6 1663.2,547.6 1663.7,547.6 1664.4,547.6 1665.1,548.3 1665.8,549.0 1666.3,549.0 1666.8,549.0 1667.4,549.0 1667.9,549.0 1668.4,549.0 1668.9,549.0 1669.4,549.0 1669.9,549.0 1670.4,549.0 1670.9,549.0 1671.4,549.0 1671.9,549.0 1672.4,549.0 1672.9,549.0 1673.4,549.0 1673.9,549.0 1674.4,549.0 1675.0,549.0 1675.5,549.0 1676.0,549.0 1676.5,549.0 1677.0,549.0 1677.5,549.0 1678.0,549.0 1678.5,549.0 1679.0,549.0 1679.5,549.0 1680.0,549.0 1680.5,549.0 1681.0,549.0 1681.5,549.0 1682.0,549.0 1682.6,549.0 1683.1,549.0 1683.6,549.0 1684.1,549.0 1684.6,549.0 1685.1,549.0 1685.6,549.0 1686.1,549.0 1686.6,549.0 1687.1,549.0 1687.6,549.0 1688.1,549.0 1688.6,549.0 1689.1,549.0 1689.6,549.0 1690.2,549.0 1690.7,549.0 1691.2,549.0 1691.7,549.0 1692.2,549.0 1692.7,549.0 1693.2,549.0 1693.8,548.9 1694.3,548.5 1694.9,548.1 1695.5,547.7 1696.1,547.6 1696.6,547.6 1697.1,547.6 1697.6,547.6 1698.1,547.6 1698.6,547.6 1699.1,547.6 1699.6,547.6 1700.1,547.6 1700.6,547.6 1701.1,547.6 1701.6,547.6 1702.1,547.6 1702.6,547.6 1703.1,547.6 1703.6,547.6 1704.1,547.6 1704.6,547.6 1705.1,547.6 1705.6,547.6 1706.1,547.6 1706.6,547.6 1707.1,547.6 1707.6,547.6 1708.1,547.6 1708.6,547.6 1709.1,547.6 1709.6,547.6 1710.1,547.6 1710.6,547.6 1711.1,547.6 1711.6,547.6 1712.1,547.6 1712.6,547.6 1713.1,547.6 1713.6,547.6 1714.1,547.6 1714.6,547.6 1715.1,547.6 1715.6,547.6 1716.1,547.6 1716.6,547.6 1717.1,547.6 1717.6,547.6 1718.1,547.6 1718.6,547.6 1719.1,547.6 1719.6,547.6 1720.1,547.6 1720.6,547.6 1721.1,547.6 1721.6,547.6 1722.1,547.6 1722.6,547.6 1723.1,547.6 1723.6,547.6 1724.1,547.6 1724.6,547.6 1725.1,547.6 1725.6,547.6 1726.1,547.6 1726.6,547.6 1727.1,547.6 1727.6,547.6 1728.1,547.6 1728.6,547.6 1729.1,547.6 1729.6,547.6 1730.1,547.6 1730.6,547.6 1731.2,547.7 1731.8,548.1 1732.3,548.5 1732.9,548.9 1733.5,549.0 1734.0,549.0 1734.5,548.9 1735.1,548.8 1735.6,548.6 1736.1,548.4 1736.6,548.2 1737.2,548.0 1737.7,547.8 1738.2,547.7 1738.7,547.6 1739.3,547.6 1739.8,547.6 1740.3,547.7 1740.8,547.7 1741.3,547.9 1741.8,548.0 1742.3,548.1 1742.9,548.3 1743.4,548.4 1743.9,548.6 1744.4,548.7 1744.9,548.8 1745.4,548.9 1745.9,549.0 1746.5,549.0 1747.0,549.0 1747.5,549.0 1748.0,549.0 1748.5,549.0 1749.0,549.0 1749.5,549.0 1750.0,549.0 1750.5,549.0 1751.0,549.0 1751.5,549.0 1752.0,549.0 1752.5,549.0 1753.0,549.0 1753.5,549.0 1754.0,549.0 1754.5,549.0 1755.0,549.0 1755.5,549.0 1756.0,549.0 1756.5,549.0 1757.1,549.0 1757.6,548.8 1758.2,548.6 1758.7,548.3 1759.2,548.0 1759.8,547.8 1760.3,547.6 1760.9,547.6 1761.4,547.6 1761.9,547.6 1762.4,547.6 1762.9,547.6 1763.4,547.6 1764.0,547.7 1764.5,547.7 1765.0,547.8 1765.5,547.8 1766.0,547.9 1766.6,547.9 1767.1,548.0 1767.6,548.0 1768.1,548.1 1768.6,548.2 1769.1,548.2 1769.7,548.3 1770.2,548.4 1770.7,548.5 1771.2,548.6 1771.7,548.6 1772.3,548.7 1772.8,548.8 1773.3,548.9 1773.8,549.0 1774.3,549.1 1774.8,549.2 1775.3,549.4 1775.8,549.5 1776.4,549.7 1776.9,549.9 1777.4,550.1 1777.9,550.3 1778.4,550.5 1778.9,550.7 1779.4,551.0 1779.9,551.2 1780.4,551.5 1780.9,551.8 1781.4,552.1 1781.9,552.4 1782.4,552.8 1783.0,553.1 1783.5,553.6 1784.0,554.1 1784.5,554.6 1785.0,555.2 1785.5,555.9 1786.0,556.6 1786.5,557.3 1787.0,558.1 1787.5,558.9 1788.0,559.6 1788.5,560.4 1789.1,561.2 1789.6,562.0 1790.1,562.8 1790.6,563.5 1791.1,564.3 1791.6,565.0 1792.1,565.8 1792.6,566.7 1793.1,567.5 1793.6,568.4 1794.1,569.4 1794.6,570.3 1795.2,571.2 1795.7,572.1 1796.2,572.9 1796.7,573.7 1797.2,574.5 1797.7,575.2 1798.2,575.8 1798.7,576.4 1799.2,576.9 1799.7,577.2 1800.2,577.5 1800.8,577.9 1801.3,578.2 1801.8,578.4 1802.3,578.7 1802.9,578.9 1803.4,579.1 1803.9,579.3 1804.4,579.4 1805.0,579.5 1805.5,579.5 1806.0,579.5 1806.5,579.5 1807.1,579.5 1807.6,579.5 1808.1,579.5 1808.6,579.4 1809.1,579.4 1809.7,579.4 1810.2,579.3 1810.7,579.3 1811.2,579.2 1811.8,579.0 1812.3,578.5 1812.8,577.8 1813.3,576.8 1813.9,575.7 1814.4,574.4 1814.9,573.0 1815.4,571.5 1816.0,570.0 1816.5,568.6 1817.0,567.2 1817.5,565.7 1818.0,564.1 1818.6,562.4 1819.1,560.6 1819.6,558.7 1820.1,556.7 1820.7,554.8 1821.2,552.8 1821.7,550.8 1822.2,548.9 1822.8,547.0 1823.3,545.2 1823.8,543.3 1824.3,541.5 1824.9,539.7 1825.4,537.8 1825.9,536.0 1826.4,534.2 1826.9,532.3 1827.5,530.5 1828.0,528.7 1828.5,526.8 1829.0,525.0 1829.6,523.0 1830.1,520.9 1830.6,518.9 1831.1,516.9 1831.7,514.9 1832.2,512.9 1832.7,511.1 1833.2,509.5 1833.8,508.0 1834.3,506.7 1834.8,505.5 1835.4,504.2 1835.9,503.0 1836.4,501.9 1837.0,500.9 1837.5,500.2 1838.1,499.7 1838.6,499.5 1839.1,499.6 1839.7,499.8 1840.2,500.2 1840.7,500.6 1841.3,501.2 1841.8,501.8 1842.3,502.4 1842.9,503.1 1843.4,504.2 1843.9,505.5 1844.4,507.0 1845.0,508.6 1845.5,510.3 1846.0,511.9 1846.6,513.6 1847.1,515.0 1847.6,516.4 1848.1,517.4 1848.7,518.2 1849.2,518.8 1849.7,519.4 1850.2,519.9 1850.8,520.5 1851.3,521.0 1851.8,521.4 1852.3,521.8 1852.9,522.1 1853.4,522.3 1853.9,522.5 1854.4,522.5 1854.9,522.5 1855.4,522.4 1856.0,522.3 1856.5,522.1 1857.0,521.9 1857.5,521.7 1858.0,521.5 1858.5,521.2 1859.0,521.0 1859.5,520.7 1860.0,520.5 1860.5,520.2 1861.0,520.0 1861.5,519.9 1862.1,519.8 1862.6,519.7 1863.1,519.6 1863.6,519.6 1864.1,519.6 1864.6,519.6 1865.1,519.6 1865.6,519.6 1866.1,519.6 1866.6,519.6 1867.1,519.6 1867.6,519.6 1868.1,519.6 1868.6,519.6 1869.1,519.6 1869.6,519.6 1870.1,519.6 1870.6,519.6 1871.1,519.6 1871.6,519.6 1872.1,519.6 1872.6,519.6 1873.1,519.6 1873.7,519.7 1874.2,520.0 1874.7,520.4 1875.2,520.9 1875.7,521.5 1876.2,522.2 1876.7,523.1 1877.3,523.9 1877.8,524.9 1878.3,525.8 1878.8,526.8 1879.3,527.8 1879.8,528.8 1880.3,529.7 1880.9,530.7 1881.4,531.9 1881.9,533.1 1882.4,534.4 1883.0,535.8 1883.5,537.2 1884.0,538.7 1884.5,540.1 1885.1,541.5 1885.6,542.8 1886.1,544.1 1886.6,545.4 1887.1,546.6 1887.7,547.9 1888.2,549.1 1888.7,550.3 1889.2,551.5 1889.8,552.7 1890.3,553.9 1890.8,555.0 1891.3,556.1 1891.9,557.1 1892.4,558.1 1893.0,559.1 1893.6,560.1 1894.2,561.0 1894.7,562.0" fill="none" stroke="#f14cc1" stroke-width="1.5" stroke-linejoin="round" /></g><text x="363.50" y="709.60" font-size="14.49" fill="#1e1e1e" stroke="#1e1e1e" stroke-width="0.12" textLength="187.88" lengthAdjust="spacingAndGlyphs" >controller_processing_time</text><line x1="704.60" y1="698.60" x2="715.50" y2="709.60" stroke="#111" stroke-width="1.5" /><line x1="715.50" y1="698.60" x2="704.60" y2="709.60" stroke="#111" stroke-width="1.5" /><rect x="314.70" y="718.80" width="1.20" height="225.10" fill="#111" /><rect x="310.70" y="942.41" width="4.00" height="1.20" fill="#111" /><rect x="310.70" y="936.22" width="4.00" height="1.20" fill="#111" /><rect x="310.70" y="930.03" width="4.00" height="1.20" fill="#111" /><rect x="310.70" y="923.84" width="4.00" height="1.20" fill="#111" /><text x="283.47" y="922.95" font-size="14.49" fill="#1e1e1e" stroke="#1e1e1e" stroke-width="0.12" textLength="17.83" lengthAdjust="spacingAndGlyphs" >27</text><rect x="306.70" y="917.65" width="8.00" height="1.20" fill="#111" /><rect x="310.70" y="911.46" width="4.00" height="1.20" fill="#111" /><rect x="310.70" y="905.27" width="4.00" height="1.20" fill="#111" /><rect x="310.70" y="899.08" width="4.00" height="1.20" fill="#111" /><rect x="310.70" y="892.89" width="4.00" height="1.20" fill="#111" /><text x="283.47" y="892.00" font-size="14.49" fill="#1e1e1e" stroke="#1e1e1e" stroke-width="0.12" textLength="17.83" lengthAdjust="spacingAndGlyphs" >28</text><rect x="306.70" y="886.70" width="8.00" height="1.20" fill="#111" /><rect x="310.70" y="880.51" width="4.00" height="1.20" fill="#111" /><rect x="310.70" y="874.32" width="4.00" height="1.20" fill="#111" /><rect x="310.70" y="868.13" width="4.00" height="1.20" fill="#111" /><rect x="310.70" y="861.94" width="4.00" height="1.20" fill="#111" /><text x="283.47" y="861.05" font-size="14.49" fill="#1e1e1e" stroke="#1e1e1e" stroke-width="0.12" textLength="17.83" lengthAdjust="spacingAndGlyphs" >29</text><rect x="306.70" y="855.75" width="8.00" height="1.20" fill="#111" /><rect x="310.70" y="849.56" width="4.00" height="1.20" fill="#111" /><rect x="310.70" y="843.37" width="4.00" height="1.20" fill="#111" /><rect x="310.70" y="837.18" width="4.00" height="1.20" fill="#111" /><rect x="310.70" y="830.99" width="4.00" height="1.20" fill="#111" /><text x="283.47" y="830.10" font-size="14.49" fill="#1e1e1e" stroke="#1e1e1e" stroke-width="0.12" textLength="17.83" lengthAdjust="spacingAndGlyphs" >30</text><rect x="306.70" y="824.80" width="8.00" height="1.20" fill="#111" /><rect x="310.70" y="818.61" width="4.00" height="1.20" fill="#111" /><rect x="310.70" y="812.42" width="4.00" height="1.20" fill="#111" /><rect x="310.70" y="806.23" width="4.00" height="1.20" fill="#111" /><rect x="310.70" y="800.04" width="4.00" height="1.20" fill="#111" /><text x="283.47" y="799.15" font-size="14.49" fill="#1e1e1e" stroke="#1e1e1e" stroke-width="0.12" textLength="17.83" lengthAdjust="spacingAndGlyphs" >31</text><rect x="306.70" y="793.85" width="8.00" height="1.20" fill="#111" /><rect x="310.70" y="787.66" width="4.00" height="1.20" fill="#111" /><rect x="310.70" y="781.47" width="4.00" height="1.20" fill="#111" /><rect x="310.70" y="775.28" width="4.00" height="1.20" fill="#111" /><rect x="310.70" y="769.09" width="4.00" height="1.20" fill="#111" /><text x="283.47" y="768.20" font-size="14.49" fill="#1e1e1e" stroke="#1e1e1e" stroke-width="0.12" textLength="17.83" lengthAdjust="spacingAndGlyphs" >32</text><rect x="306.70" y="762.90" width="8.00" height="1.20" fill="#111" /><rect x="310.70" y="756.71" width="4.00" height="1.20" fill="#111" /><rect x="310.70" y="750.52" width="4.00" height="1.20" fill="#111" /><rect x="310.70" y="744.33" width="4.00" height="1.20" fill="#111" /><rect x="310.70" y="738.14" width="4.00" height="1.20" fill="#111" /><text x="283.47" y="737.25" font-size="14.49" fill="#1e1e1e" stroke="#1e1e1e" stroke-width="0.12" textLength="17.83" lengthAdjust="spacingAndGlyphs" >33</text><rect x="306.70" y="731.95" width="8.00" height="1.20" fill="#111" /><rect x="310.70" y="725.76" width="4.00" height="1.20" fill="#111" /><rect x="310.70" y="719.57" width="4.00" height="1.20" fill="#111" /><rect x="319.50" y="948.90" width="401.80" height="1.20" fill="#111" /><rect x="335.59" y="949.50" width="1.20" height="6.00" fill="#111" /><rect x="355.72" y="949.50" width="1.20" height="4.00" fill="#111" /><text x="363.08" y="972.90" font-size="14.49" fill="#1e1e1e" stroke="#1e1e1e" stroke-width="0.12" textLength="26.73" lengthAdjust="spacingAndGlyphs" >200</text><rect x="375.85" y="949.50" width="1.20" height="8.00" fill="#111" /><rect x="395.98" y="949.50" width="1.20" height="4.00" fill="#111" /><rect x="416.11" y="949.50" width="1.20" height="6.00" fill="#111" /><rect x="436.23" y="949.50" width="1.20" height="4.00" fill="#111" /><text x="443.59" y="972.90" font-size="14.49" fill="#1e1e1e" stroke="#1e1e1e" stroke-width="0.12" textLength="26.73" lengthAdjust="spacingAndGlyphs" >220</text><rect x="456.36" y="949.50" width="1.20" height="8.00" fill="#111" /><rect x="476.49" y="949.50" width="1.20" height="4.00" fill="#111" /><rect x="496.62" y="949.50" width="1.20" height="6.00" fill="#111" /><rect x="516.75" y="949.50" width="1.20" height="4.00" fill="#111" /><text x="524.11" y="972.90" font-size="14.49" fill="#1e1e1e" stroke="#1e1e1e" stroke-width="0.12" textLength="26.73" lengthAdjust="spacingAndGlyphs" >240</text><rect x="536.87" y="949.50" width="1.20" height="8.00" fill="#111" /><rect x="557.00" y="949.50" width="1.20" height="4.00" fill="#111" /><rect x="577.13" y="949.50" width="1.20" height="6.00" fill="#111" /><rect x="597.26" y="949.50" width="1.20" height="4.00" fill="#111" /><text x="604.62" y="972.90" font-size="14.49" fill="#1e1e1e" stroke="#1e1e1e" stroke-width="0.12" textLength="26.73" lengthAdjust="spacingAndGlyphs" >260</text><rect x="617.39" y="949.50" width="1.20" height="8.00" fill="#111" /><rect x="637.51" y="949.50" width="1.20" height="4.00" fill="#111" /><rect x="657.64" y="949.50" width="1.20" height="6.00" fill="#111" /><rect x="677.77" y="949.50" width="1.20" height="4.00" fill="#111" /><text x="685.13" y="972.90" font-size="14.49" fill="#1e1e1e" stroke="#1e1e1e" stroke-width="0.12" textLength="26.73" lengthAdjust="spacingAndGlyphs" >280</text><rect x="697.90" y="949.50" width="1.20" height="8.00" fill="#111" /><rect x="718.03" y="949.50" width="1.20" height="4.00" fill="#111" /><defs><clipPath id="c5l"><rect x="316" y="700" width="420" height="260"/></clipPath></defs><g clip-path="url(#c5l)"><rect x="200.00" y="728.90" width="513.80" height="25.00" fill="#fff" fill-opacity="0.85" stroke="#747474" stroke-width="1.4"/><rect x="180.00" y="737.00" width="8.00" height="8.00" fill="#1f77b4" /><text x="706.00" y="746.10" font-size="13.45" fill="#1e1e1e" stroke="#1e1e1e" stroke-width="0.12"  ></text><circle cx="713.80" cy="727.90" r="5" fill="#fff" stroke="#111" stroke-width="1.1"/></g><text x="258.47" y="746.10" font-size="13.45" fill="#1e1e1e" stroke="#1e1e1e" stroke-width="0.12" textLength="447.53" lengthAdjust="spacingAndGlyphs" clip-path="url(#c5l)">/control_performance/driving_status/controller_processing_time/data</text><defs><clipPath id="c5"><rect x="316" y="700" width="408" height="245"/></clipPath></defs><g clip-path="url(#c5)"><path d="M321.5,818.2V831.1 M322.5,815.9V832.0 M324.5,816.9V837.4 M329.5,820.2V831.7 M330.5,818.3V833.7 M333.5,816.3V834.3 M335.5,819.9V834.4 M336.5,816.2V832.3 M338.5,816.6V831.9 M339.5,820.7V830.1 M340.5,819.3V831.2 M343.5,820.9V832.4 M344.5,818.3V830.6 M348.5,818.0V832.5 M353.5,817.6V831.3 M354.5,817.5V829.0 M355.5,817.7V831.0 M356.5,820.8V830.0 M357.5,817.3V831.3 M358.5,818.5V829.2 M360.5,820.2V828.7 M362.5,821.1V829.5 M363.5,819.4V829.8 M365.5,818.1V828.4 M366.5,818.2V828.4 M367.5,817.8V829.4 M371.5,820.8V830.8 M372.5,819.3V831.8 M377.5,816.6V832.7 M380.5,816.1V833.8 M383.5,817.6V833.1 M385.5,819.2V832.4 M386.5,817.9V832.1 M387.5,817.5V828.7 M388.5,818.7V830.5 M389.5,816.4V833.7 M390.5,813.6V836.8 M391.5,815.4V834.0 M395.5,811.5V837.9 M396.5,815.0V837.4 M397.5,816.6V836.2 M399.5,813.4V833.6 M400.5,813.4V832.0 M401.5,815.0V834.0 M402.5,817.6V832.2 M403.5,813.3V834.7 M405.5,816.4V837.4 M409.5,813.0V839.1 M411.5,810.6V841.5 M412.5,815.0V834.9 M413.5,810.3V835.2 M415.5,815.4V842.8 M416.5,811.6V838.5 M417.5,807.3V843.8 M419.5,810.3V834.3 M421.5,811.0V837.7 M422.5,809.1V839.0 M423.5,810.2V839.2 M425.5,816.0V834.4 M429.5,805.5V840.5 M432.5,811.0V840.8 M436.5,804.2V836.6 M437.5,811.4V842.2 M439.5,809.1V839.6 M440.5,805.2V839.4 M441.5,812.2V844.5 M444.5,809.5V845.6 M447.5,808.7V839.1 M448.5,813.9V839.0 M449.5,809.2V838.7 M451.5,814.2V843.5 M452.5,812.6V841.3 M454.5,806.0V842.9 M455.5,813.5V837.6 M456.5,815.8V834.0 M458.5,814.2V838.7 M459.5,811.0V837.1 M460.5,815.8V838.0 M463.5,817.4V837.8 M464.5,814.8V836.3 M465.5,816.8V835.9 M467.5,816.1V836.0 M471.5,809.1V840.2 M472.5,813.4V836.5 M473.5,808.8V838.4 M474.5,808.4V842.4 M475.5,811.1V838.7 M482.5,815.8V838.3 M483.5,812.9V836.6 M488.5,816.5V837.8 M489.5,816.0V835.3 M490.5,815.1V832.9 M491.5,817.0V835.7 M492.5,816.6V833.6 M494.5,815.1V833.6 M495.5,810.7V836.1 M498.5,810.6V837.8 M499.5,816.0V838.9 M500.5,814.7V834.1 M502.5,816.7V837.1 M504.5,812.0V831.8 M507.5,808.6V837.8 M509.5,808.4V835.4 M510.5,808.4V836.3 M511.5,811.9V840.1 M512.5,812.6V837.7 M515.5,816.2V842.5 M517.5,813.2V836.8 M518.5,813.7V841.1 M519.5,808.0V837.6 M520.5,814.1V841.7 M521.5,805.7V841.3 M522.5,813.1V839.7 M523.5,808.3V842.9 M524.5,810.7V839.8 M527.5,811.6V841.3 M528.5,807.3V842.6 M530.5,811.0V835.1 M531.5,808.8V842.0 M533.5,809.9V841.0 M534.5,810.9V835.3 M536.5,812.6V843.6 M538.5,806.1V836.7 M539.5,809.9V834.9 M541.5,809.0V841.3 M543.5,814.5V837.5 M544.5,813.5V839.1 M545.5,809.3V835.1 M546.5,811.7V840.0 M549.5,809.6V843.5 M550.5,805.9V837.7 M553.5,814.2V838.7 M554.5,808.6V839.3 M555.5,813.4V834.5 M558.5,807.8V834.3 M559.5,807.6V833.2 M560.5,815.9V841.2 M561.5,811.4V833.4 M562.5,812.4V841.0 M563.5,814.4V840.6 M565.5,809.9V840.7 M566.5,808.8V833.4 M567.5,807.5V841.8 M569.5,812.6V837.9 M570.5,811.8V842.6 M572.5,809.6V847.8 M574.5,806.8V842.8 M575.5,810.3V846.2 M577.5,811.1V847.4 M578.5,804.0V841.0 M579.5,806.5V844.3 M583.5,806.6V838.6 M585.5,811.5V842.3 M586.5,805.9V842.0 M587.5,814.1V841.0 M588.5,805.3V836.0 M589.5,805.6V837.8 M590.5,811.1V841.9 M591.5,813.7V843.9 M592.5,807.3V843.9 M593.5,811.0V837.0 M594.5,807.2V844.7 M597.5,812.1V834.2 M599.5,811.8V835.1 M600.5,814.1V841.0 M601.5,811.5V833.1 M603.5,813.9V839.4 M604.5,814.4V833.9 M605.5,815.5V836.1 M607.5,814.3V832.8 M608.5,817.2V833.7 M610.5,816.0V840.0 M612.5,814.0V833.1 M614.5,815.1V832.8 M615.5,814.7V835.8 M618.5,812.3V834.9 M619.5,815.8V834.2 M620.5,813.5V835.6 M621.5,813.5V837.9 M623.5,812.0V833.1 M624.5,813.3V835.8 M625.5,812.4V837.9 M626.5,814.7V837.4 M627.5,807.7V840.3 M628.5,810.5V835.7 M629.5,808.5V839.8 M630.5,811.5V843.8 M633.5,806.9V841.1 M634.5,812.4V835.9 M635.5,808.3V833.4 M636.5,812.8V842.6 M637.5,809.2V836.0 M638.5,813.1V839.1 M644.5,808.8V838.7 M645.5,812.7V837.0 M646.5,814.3V834.7 M650.5,811.4V840.9 M651.5,808.7V837.1 M653.5,807.2V841.5 M654.5,810.2V842.7 M655.5,807.1V846.7 M657.5,802.3V847.9 M658.5,813.2V839.3 M659.5,809.9V836.1 M660.5,810.2V845.2 M661.5,806.7V844.6 M663.5,812.1V836.7 M664.5,813.5V838.3 M665.5,809.1V837.0 M666.5,813.6V834.0 M667.5,816.0V834.5 M668.5,810.3V836.2 M669.5,817.6V835.7 M670.5,812.3V836.8 M672.5,817.1V832.1 M674.5,816.4V838.7 M676.5,811.5V838.3 M677.5,810.0V835.3 M679.5,812.9V836.5 M680.5,809.8V837.1 M681.5,814.5V837.6 M683.5,813.2V836.9 M684.5,807.8V840.6 M686.5,806.0V836.3 M690.5,812.3V843.5 M691.5,810.1V835.4 M693.5,814.2V842.8 M695.5,807.9V841.3 M697.5,802.7V837.6 M700.5,803.0V840.9 M703.5,807.0V841.0 M704.5,811.0V841.7 M708.5,809.8V838.9 M709.5,817.2V834.8 M710.5,816.4V834.8 M712.5,813.8V837.6 M714.5,814.9V837.3 M717.5,807.3V839.2 M719.5,812.1V838.5 M720.5,806.6V838.7" stroke="#5a9bd0" stroke-width="1" fill="none"/><path d="M320.5,819.6V830.9 M321.5,817.2V830.1 M322.5,817.1V830.3 M323.5,817.3V830.2 M324.5,819.5V831.2 M325.5,817.1V830.8 M326.5,819.2V831.1 M327.5,821.1V827.5 M328.5,821.9V827.8 M329.5,821.7V827.9 M330.5,821.8V828.4 M331.5,821.4V828.4 M332.5,822.0V827.6 M333.5,820.8V827.8 M334.5,821.9V829.0 M335.5,821.2V828.1 M336.5,821.9V828.6 M337.5,821.8V827.6 M338.5,822.2V827.7 M339.5,821.8V829.0 M340.5,821.5V827.4 M341.5,822.0V828.0 M342.5,820.5V828.5 M343.5,821.2V827.6 M344.5,821.0V829.1 M345.5,821.0V827.9 M346.5,822.1V828.3 M347.5,820.7V828.6 M348.5,820.9V829.0 M349.5,820.7V828.1 M350.5,820.7V828.4 M351.5,821.6V828.4 M352.5,822.1V828.5 M353.5,820.7V828.6 M354.5,821.5V828.8 M355.5,821.2V828.2 M356.5,821.2V829.0 M357.5,821.1V827.7 M358.5,821.5V828.9 M359.5,821.5V828.8 M360.5,820.7V828.0 M361.5,821.4V828.8 M362.5,821.0V829.0 M363.5,821.8V827.7 M364.5,821.7V828.8 M365.5,821.5V827.5 M366.5,821.0V828.3 M367.5,822.0V828.1 M368.5,822.0V827.4 M369.5,821.5V828.5 M370.5,820.8V829.0 M371.5,821.9V828.2 M372.5,821.0V827.6 M373.5,821.3V828.4 M374.5,821.6V828.7 M375.5,822.1V829.0 M376.5,822.0V828.1 M377.5,820.6V828.0 M378.5,820.6V828.2 M379.5,821.9V828.6 M380.5,821.1V828.6 M381.5,820.5V828.3 M382.5,821.7V829.0 M383.5,821.7V827.5 M384.5,821.4V827.4 M385.5,822.2V828.8 M386.5,822.0V827.6 M387.5,821.0V829.0 M388.5,821.9V828.3 M389.5,818.6V832.1 M390.5,817.5V832.3 M391.5,818.5V831.2 M392.5,818.3V829.4 M393.5,818.6V830.7 M394.5,818.4V830.9 M395.5,820.0V831.1 M396.5,819.4V830.9 M397.5,817.3V830.9 M398.5,817.2V829.8 M399.5,820.2V830.0 M400.5,819.1V831.4 M401.5,818.6V830.2 M402.5,819.0V830.7 M403.5,818.2V831.4 M404.5,817.5V830.1 M405.5,817.6V832.3 M406.5,819.5V832.6 M407.5,819.8V830.1 M408.5,819.4V829.7 M409.5,818.9V831.9 M410.5,820.2V830.0 M411.5,817.3V832.5 M412.5,818.6V831.6 M413.5,820.1V831.1 M414.5,819.7V830.0 M415.5,817.0V832.4 M416.5,818.7V831.8 M417.5,817.9V832.3 M418.5,818.9V831.8 M419.5,818.0V830.8 M420.5,816.2V833.1 M421.5,816.3V832.4 M422.5,815.9V833.1 M423.5,816.6V833.1 M424.5,816.9V832.9 M425.5,818.0V832.8 M426.5,819.5V831.4 M427.5,817.2V830.9 M428.5,817.1V831.3 M429.5,817.4V832.0 M430.5,816.9V832.9 M431.5,819.5V832.4 M432.5,818.6V831.6 M433.5,819.2V831.0 M434.5,817.5V832.0 M435.5,817.4V833.8 M436.5,816.5V830.3 M437.5,816.1V830.6 M438.5,817.3V830.3 M439.5,818.0V832.0 M440.5,817.1V832.2 M441.5,819.5V831.0 M442.5,818.1V833.4 M443.5,819.4V833.8 M444.5,819.3V833.4 M445.5,818.6V832.0 M446.5,816.8V831.8 M447.5,816.5V832.3 M448.5,818.8V830.2 M449.5,817.0V831.8 M450.5,816.6V832.0 M451.5,816.0V832.8 M452.5,816.6V832.4 M453.5,817.4V832.3 M454.5,816.7V830.8 M455.5,816.3V830.2 M456.5,817.2V830.4 M457.5,817.0V832.1 M458.5,818.2V831.8 M459.5,816.4V830.3 M460.5,816.7V830.8 M461.5,818.2V832.5 M462.5,818.3V832.1 M463.5,816.1V831.7 M464.5,819.3V830.4 M465.5,818.4V833.0 M466.5,819.2V831.2 M467.5,816.9V831.1 M468.5,818.2V830.5 M469.5,817.4V833.5 M470.5,816.1V831.7 M471.5,818.4V831.2 M472.5,818.6V831.4 M473.5,818.1V830.8 M474.5,816.4V832.2 M475.5,818.5V830.1 M476.5,815.9V832.5 M477.5,819.3V832.1 M478.5,819.2V830.4 M479.5,816.2V830.4 M480.5,819.0V832.8 M481.5,818.6V830.9 M482.5,817.6V832.9 M483.5,817.0V831.9 M484.5,816.1V831.6 M485.5,817.0V833.3 M486.5,816.4V833.4 M487.5,817.1V832.0 M488.5,816.5V831.6 M489.5,815.8V831.5 M490.5,818.5V833.7 M491.5,817.1V833.0 M492.5,817.4V833.5 M493.5,818.7V830.9 M494.5,817.3V830.9 M495.5,816.7V831.2 M496.5,818.6V833.4 M497.5,818.3V832.1 M498.5,817.7V830.9 M499.5,818.1V832.0 M500.5,817.1V830.9 M501.5,816.6V832.7 M502.5,819.0V830.6 M503.5,817.6V832.4 M504.5,818.6V832.1 M505.5,816.5V833.2 M506.5,819.2V831.1 M507.5,819.2V831.9 M508.5,816.3V831.2 M509.5,818.0V833.5 M510.5,817.5V832.0 M511.5,818.4V830.3 M512.5,818.2V832.6 M513.5,815.9V833.2 M514.5,819.5V831.5 M515.5,818.7V832.2 M516.5,816.6V830.8 M517.5,818.5V831.5 M518.5,818.1V832.6 M519.5,818.3V833.6 M520.5,816.4V830.4 M521.5,816.9V830.7 M522.5,819.2V830.9 M523.5,819.3V833.5 M524.5,816.7V833.1 M525.5,819.5V831.6 M526.5,815.9V833.0 M527.5,817.3V830.1 M528.5,819.2V831.5 M529.5,817.3V830.6 M530.5,816.2V832.1 M531.5,816.9V833.8 M532.5,818.8V833.6 M533.5,818.8V830.4 M534.5,818.3V833.5 M535.5,815.9V830.6 M536.5,817.5V832.2 M537.5,815.8V833.1 M538.5,819.1V833.1 M539.5,817.4V833.2 M540.5,819.4V830.7 M541.5,816.0V832.5 M542.5,818.1V832.3 M543.5,819.5V830.8 M544.5,817.4V830.7 M545.5,818.3V832.5 M546.5,816.0V832.3 M547.5,817.0V832.9 M548.5,817.7V833.8 M549.5,816.3V831.6 M550.5,817.6V832.0 M551.5,819.3V832.8 M552.5,816.8V832.3 M553.5,818.4V832.3 M554.5,817.7V831.5 M555.5,818.7V831.2 M556.5,816.1V833.7 M557.5,816.3V831.6 M558.5,818.7V832.8 M559.5,816.6V830.5 M560.5,818.6V831.2 M561.5,816.5V831.5 M562.5,819.4V833.4 M563.5,815.9V831.8 M564.5,816.2V830.8 M565.5,818.2V831.8 M566.5,818.8V832.4 M567.5,819.2V832.8 M568.5,816.9V830.6 M569.5,816.0V831.7 M570.5,816.9V830.8 M571.5,816.6V831.4 M572.5,816.2V832.3 M573.5,817.0V831.1 M574.5,819.2V833.7 M575.5,819.4V832.3 M576.5,819.2V831.1 M577.5,818.6V831.1 M578.5,815.8V830.2 M579.5,816.1V831.9 M580.5,818.2V832.5 M581.5,817.6V831.9 M582.5,817.0V832.0 M583.5,818.9V833.0 M584.5,817.9V832.9 M585.5,816.6V830.9 M586.5,817.7V830.2 M587.5,816.3V830.7 M588.5,817.9V831.7 M589.5,816.1V832.2 M590.5,819.0V831.2 M591.5,817.6V831.0 M592.5,818.9V831.0 M593.5,816.6V830.3 M594.5,815.9V830.2 M595.5,819.0V831.8 M596.5,819.4V831.0 M597.5,819.0V831.5 M598.5,819.4V833.8 M599.5,816.8V830.9 M600.5,817.8V833.5 M601.5,817.3V830.2 M602.5,818.3V832.7 M603.5,817.3V833.4 M604.5,818.1V833.0 M605.5,817.5V830.7 M606.5,818.4V831.7 M607.5,817.0V833.3 M608.5,817.0V831.4 M609.5,818.6V831.5 M610.5,816.9V831.1 M611.5,818.2V832.9 M612.5,816.1V830.1 M613.5,816.2V831.3 M614.5,817.6V830.3 M615.5,819.0V832.3 M616.5,817.5V830.6 M617.5,818.6V832.8 M618.5,819.0V830.8 M619.5,818.1V833.3 M620.5,818.7V830.2 M621.5,816.5V833.7 M622.5,818.7V832.6 M623.5,816.0V833.3 M624.5,817.9V831.5 M625.5,817.7V831.1 M626.5,818.9V832.5 M627.5,818.0V830.6 M628.5,816.9V830.1 M629.5,818.0V830.3 M630.5,818.3V831.0 M631.5,817.4V831.0 M632.5,818.9V831.8 M633.5,816.0V831.4 M634.5,817.2V832.4 M635.5,816.4V833.3 M636.5,819.0V832.0 M637.5,819.0V830.8 M638.5,819.5V832.1 M639.5,817.1V832.1 M640.5,817.4V833.2 M641.5,818.3V831.4 M642.5,818.4V832.7 M643.5,817.0V833.7 M644.5,819.0V832.4 M645.5,818.5V832.9 M646.5,818.3V830.7 M647.5,819.3V830.4 M648.5,819.1V831.7 M649.5,817.7V830.7 M650.5,816.3V830.3 M651.5,818.1V832.7 M652.5,818.3V832.9 M653.5,816.4V832.2 M654.5,816.4V833.1 M655.5,818.7V830.7 M656.5,815.9V830.6 M657.5,818.0V832.4 M658.5,819.4V832.7 M659.5,816.8V833.8 M660.5,817.5V831.9 M661.5,816.4V831.1 M662.5,815.9V831.5 M663.5,817.5V833.1 M664.5,816.0V831.0 M665.5,819.5V832.2 M666.5,818.7V831.9 M667.5,819.3V833.4 M668.5,817.7V833.8 M669.5,818.0V833.1 M670.5,817.1V832.4 M671.5,815.8V831.7 M672.5,816.8V830.7 M673.5,819.3V831.4 M674.5,818.4V832.0 M675.5,819.5V832.0 M676.5,816.6V832.8 M677.5,816.7V833.7 M678.5,816.9V831.0 M679.5,819.5V832.2 M680.5,817.1V833.1 M681.5,818.5V833.4 M682.5,816.8V830.8 M683.5,817.5V832.6 M684.5,818.2V831.7 M685.5,818.3V832.1 M686.5,818.8V833.4 M687.5,815.8V831.7 M688.5,818.7V831.6 M689.5,818.9V831.1 M690.5,816.0V831.3 M691.5,819.0V832.4 M692.5,817.2V833.4 M693.5,817.2V831.9 M694.5,817.0V831.7 M695.5,818.0V831.5 M696.5,817.6V830.2 M697.5,817.9V832.3 M698.5,817.8V833.8 M699.5,818.4V832.8 M700.5,818.0V833.3 M701.5,818.7V833.2 M702.5,816.0V833.2 M703.5,817.6V833.8 M704.5,818.6V833.1 M705.5,818.8V831.1 M706.5,819.3V832.1 M707.5,817.7V831.0 M708.5,816.3V832.9 M709.5,819.0V831.4 M710.5,816.3V833.2 M711.5,816.4V832.4 M712.5,819.3V833.8 M713.5,816.8V830.8 M714.5,817.9V830.1 M715.5,818.5V832.3 M716.5,818.9V830.5 M717.5,817.8V830.5 M718.5,818.2V830.8 M719.5,817.0V832.8 M720.5,819.0V832.4" stroke="#2575b0" stroke-width="1" fill="none"/><path d="M322.7,797.9V856.4 M324.1,798.8V854.1 M329.9,796.5V854.7 M335.9,762.0V886.6 M367.0,805.1V850.6 M380.8,779.2V873.4 M395.8,775.2V875.7 M439.8,804.6V858.4 M467.8,745.3V891.5 M493.9,759.9V890.6 M493.8,760.0V890.7 M527.8,770.0V856.4 M567.0,724.0V939.6 M588.0,751.9V896.7 M590.9,783.6V849.8 M602.9,796.5V849.8 M613.9,764.9V883.5 M615.9,759.1V881.5 M621.1,774.9V873.4 M630.9,767.2V883.5 M644.1,782.1V857.0 M647.9,770.0V888.7 M668.0,769.2V877.7 M694.5,757.1V884.4 M696.5,796.5V855.6 M700.3,759.1V890.7 M719.0,756.2V890.7" stroke="#3d88c2" stroke-width="1.5" fill="none"/></g><text x="1149.60" y="709.60" font-size="14.49" fill="#1e1e1e" stroke="#1e1e1e" stroke-width="0.12" textLength="249.14" lengthAdjust="spacingAndGlyphs" >current - desired steering tire angle</text><line x1="1877.00" y1="698.60" x2="1888.40" y2="709.60" stroke="#111" stroke-width="1.5" /><line x1="1888.40" y1="698.60" x2="1877.00" y2="709.60" stroke="#111" stroke-width="1.5" /><rect x="786.10" y="719.20" width="1.20" height="224.80" fill="#111" /><rect x="782.10" y="942.90" width="4.00" height="1.20" fill="#111" /><rect x="782.10" y="935.90" width="4.00" height="1.20" fill="#111" /><text x="745.37" y="934.20" font-size="14.49" fill="#1e1e1e" stroke="#1e1e1e" stroke-width="0.12" textLength="27.33" lengthAdjust="spacingAndGlyphs" >-0.1</text><rect x="778.10" y="928.90" width="8.00" height="1.20" fill="#111" /><rect x="782.10" y="921.90" width="4.00" height="1.20" fill="#111" /><rect x="782.10" y="914.90" width="4.00" height="1.20" fill="#111" /><rect x="782.10" y="907.90" width="4.00" height="1.20" fill="#111" /><rect x="782.10" y="900.90" width="4.00" height="1.20" fill="#111" /><text x="763.78" y="899.20" font-size="14.49" fill="#1e1e1e" stroke="#1e1e1e" stroke-width="0.12"  >0</text><rect x="778.10" y="893.90" width="8.00" height="1.20" fill="#111" /><rect x="782.10" y="886.90" width="4.00" height="1.20" fill="#111" /><rect x="782.10" y="879.90" width="4.00" height="1.20" fill="#111" /><rect x="782.10" y="872.90" width="4.00" height="1.20" fill="#111" /><rect x="782.10" y="865.90" width="4.00" height="1.20" fill="#111" /><text x="750.43" y="864.20" font-size="14.49" fill="#1e1e1e" stroke="#1e1e1e" stroke-width="0.12" textLength="22.27" lengthAdjust="spacingAndGlyphs" >0.1</text><rect x="778.10" y="858.90" width="8.00" height="1.20" fill="#111" /><rect x="782.10" y="851.90" width="4.00" height="1.20" fill="#111" /><rect x="782.10" y="844.90" width="4.00" height="1.20" fill="#111" /><rect x="782.10" y="837.90" width="4.00" height="1.20" fill="#111" /><rect x="782.10" y="830.90" width="4.00" height="1.20" fill="#111" /><text x="750.43" y="829.20" font-size="14.49" fill="#1e1e1e" stroke="#1e1e1e" stroke-width="0.12" textLength="22.27" lengthAdjust="spacingAndGlyphs" >0.2</text><rect x="778.10" y="823.90" width="8.00" height="1.20" fill="#111" /><rect x="782.10" y="816.90" width="4.00" height="1.20" fill="#111" /><rect x="782.10" y="809.90" width="4.00" height="1.20" fill="#111" /><rect x="782.10" y="802.90" width="4.00" height="1.20" fill="#111" /><rect x="782.10" y="795.90" width="4.00" height="1.20" fill="#111" /><text x="750.43" y="794.20" font-size="14.49" fill="#1e1e1e" stroke="#1e1e1e" stroke-width="0.12" textLength="22.27" lengthAdjust="spacingAndGlyphs" >0.3</text><rect x="778.10" y="788.90" width="8.00" height="1.20" fill="#111" /><rect x="782.10" y="781.90" width="4.00" height="1.20" fill="#111" /><rect x="782.10" y="774.90" width="4.00" height="1.20" fill="#111" /><rect x="782.10" y="767.90" width="4.00" height="1.20" fill="#111" /><rect x="782.10" y="760.90" width="4.00" height="1.20" fill="#111" /><text x="750.43" y="759.20" font-size="14.49" fill="#1e1e1e" stroke="#1e1e1e" stroke-width="0.12" textLength="22.27" lengthAdjust="spacingAndGlyphs" >0.4</text><rect x="778.10" y="753.90" width="8.00" height="1.20" fill="#111" /><rect x="782.10" y="746.90" width="4.00" height="1.20" fill="#111" /><rect x="782.10" y="739.90" width="4.00" height="1.20" fill="#111" /><rect x="782.10" y="732.90" width="4.00" height="1.20" fill="#111" /><rect x="782.10" y="725.90" width="4.00" height="1.20" fill="#111" /><rect x="790.40" y="948.90" width="1103.80" height="1.20" fill="#111" /><rect x="835.40" y="949.50" width="1.20" height="6.00" fill="#111" /><rect x="890.65" y="949.50" width="1.20" height="4.00" fill="#111" /><text x="933.13" y="972.90" font-size="14.49" fill="#1e1e1e" stroke="#1e1e1e" stroke-width="0.12" textLength="26.73" lengthAdjust="spacingAndGlyphs" >200</text><rect x="945.90" y="949.50" width="1.20" height="8.00" fill="#111" /><rect x="1001.15" y="949.50" width="1.20" height="4.00" fill="#111" /><rect x="1056.40" y="949.50" width="1.20" height="6.00" fill="#111" /><rect x="1111.65" y="949.50" width="1.20" height="4.00" fill="#111" /><text x="1154.13" y="972.90" font-size="14.49" fill="#1e1e1e" stroke="#1e1e1e" stroke-width="0.12" textLength="26.73" lengthAdjust="spacingAndGlyphs" >220</text><rect x="1166.90" y="949.50" width="1.20" height="8.00" fill="#111" /><rect x="1222.15" y="949.50" width="1.20" height="4.00" fill="#111" /><rect x="1277.40" y="949.50" width="1.20" height="6.00" fill="#111" /><rect x="1332.65" y="949.50" width="1.20" height="4.00" fill="#111" /><text x="1375.13" y="972.90" font-size="14.49" fill="#1e1e1e" stroke="#1e1e1e" stroke-width="0.12" textLength="26.73" lengthAdjust="spacingAndGlyphs" >240</text><rect x="1387.90" y="949.50" width="1.20" height="8.00" fill="#111" /><rect x="1443.15" y="949.50" width="1.20" height="4.00" fill="#111" /><rect x="1498.40" y="949.50" width="1.20" height="6.00" fill="#111" /><rect x="1553.65" y="949.50" width="1.20" height="4.00" fill="#111" /><text x="1596.13" y="972.90" font-size="14.49" fill="#1e1e1e" stroke="#1e1e1e" stroke-width="0.12" textLength="26.73" lengthAdjust="spacingAndGlyphs" >260</text><rect x="1608.90" y="949.50" width="1.20" height="8.00" fill="#111" /><rect x="1664.15" y="949.50" width="1.20" height="4.00" fill="#111" /><rect x="1719.40" y="949.50" width="1.20" height="6.00" fill="#111" /><rect x="1774.65" y="949.50" width="1.20" height="4.00" fill="#111" /><text x="1817.13" y="972.90" font-size="14.49" fill="#1e1e1e" stroke="#1e1e1e" stroke-width="0.12" textLength="26.73" lengthAdjust="spacingAndGlyphs" >280</text><rect x="1829.90" y="949.50" width="1.20" height="8.00" fill="#111" /><rect x="1885.15" y="949.50" width="1.20" height="4.00" fill="#111" /><rect x="1443.10" y="728.90" width="443.90" height="46.60" fill="#fff" fill-opacity="0.85" stroke="#747474" stroke-width="1.4"/><rect x="1447.00" y="737.50" width="8.00" height="8.00" fill="#d62728" /><text x="1456.00" y="746.10" font-size="13.45" fill="#1e1e1e" stroke="#1e1e1e" stroke-width="0.12" textLength="327.69" lengthAdjust="spacingAndGlyphs" >/vehicle/status/steering_status/steering_tire_angle</text><rect x="1447.00" y="759.20" width="8.00" height="8.00" fill="#1ac938" /><text x="1456.00" y="768.30" font-size="13.45" fill="#1e1e1e" stroke="#1e1e1e" stroke-width="0.12" textLength="423.41" lengthAdjust="spacingAndGlyphs" >/control_performance/driving_status/desired_steering_angle/data</text><circle cx="1887.00" cy="727.90" r="5" fill="#fff" stroke="#111" stroke-width="1.1"/><defs><clipPath id="c6"><rect x="787" y="700" width="1108" height="245"/></clipPath></defs><g clip-path="url(#c6)"><polyline points="790.4,893.8 790.9,893.8 791.4,893.8 791.9,893.8 792.4,893.8 792.9,893.8 793.4,893.8 793.9,893.8 794.4,893.8 794.9,893.8 795.4,893.8 795.9,893.8 796.4,893.8 796.9,893.8 797.4,893.8 797.9,893.8 798.4,893.8 798.9,893.8 799.4,893.8 799.9,893.8 800.4,893.8 800.9,893.8 801.4,893.8 801.9,893.8 802.4,893.8 802.9,893.8 803.4,893.8 803.9,893.8 804.8,862.7 805.3,849.2 805.8,837.1 806.3,827.0 806.8,819.6 807.3,813.5 807.9,807.9 808.4,803.0 808.9,798.8 809.5,795.3 810.0,792.6 810.5,790.8 811.1,789.4 811.6,788.2 812.2,787.1 812.7,786.1 813.3,785.2 813.8,784.5 814.3,784.0 814.9,783.7 815.4,783.6 816.0,783.6 816.5,783.8 817.0,784.1 817.5,784.4 818.0,784.9 818.5,785.4 819.1,786.0 819.6,786.6 820.1,787.2 820.6,787.9 821.1,788.7 821.7,789.7 822.2,790.9 822.7,792.3 823.2,793.8 823.8,795.5 824.3,797.3 824.8,799.2 825.3,801.1 825.8,803.1 826.4,805.2 826.9,807.3 827.5,809.7 828.0,812.2 828.5,814.9 829.1,817.9 829.6,821.1 830.2,824.5 830.7,828.2 831.3,832.8 831.8,838.3 832.4,844.3 833.0,850.6 833.6,857.0 834.1,863.7 834.7,871.1 835.3,878.5 835.9,885.5 836.4,891.5 837.0,896.7 837.6,901.6 838.2,906.2 838.8,910.3 839.3,914.1 839.9,917.4 840.4,920.5 841.0,923.5 841.5,926.5 842.0,929.2 842.6,931.3 843.1,932.8 843.6,933.3 844.2,933.0 844.7,932.3 845.3,931.3 845.8,929.9 846.3,928.4 846.9,926.7 847.4,924.9 848.0,923.2 848.5,921.3 849.0,919.1 849.6,916.6 850.1,913.9 850.7,911.1 851.2,908.4 851.7,905.6 852.3,903.1 852.8,900.7 853.3,898.4 853.9,896.1 854.4,893.8 854.9,891.5 855.4,889.2 855.9,886.9 856.5,884.6 857.0,882.2 857.5,879.7 858.0,877.1 858.6,874.5 859.1,871.8 859.6,869.0 860.1,866.2 860.7,863.3 861.2,860.4 861.7,857.5 862.2,854.5 862.8,851.5 863.3,848.5 863.8,845.5 864.3,842.5 864.8,839.4 865.4,836.3 865.9,833.2 866.4,830.1 866.9,827.0 867.5,823.8 868.0,820.6 868.5,817.4 869.0,814.2 869.6,810.9 870.1,807.6 870.6,804.2 871.1,800.7 871.7,797.1 872.2,793.6 872.7,790.0 873.2,786.5 873.7,783.1 874.3,779.7 874.8,776.5 875.3,773.5 875.8,770.5 876.4,767.6 876.9,764.7 877.4,761.9 877.9,759.1 878.5,756.4 879.0,753.8 879.5,751.3 880.0,749.0 880.6,746.8 881.1,744.7 881.6,742.7 882.1,740.8 882.6,738.8 883.2,736.9 883.7,735.1 884.2,733.4 884.7,731.8 885.3,730.4 885.8,729.2 886.3,728.2 886.8,727.4 887.4,726.8 887.9,726.1 888.5,725.6 889.0,725.0 889.5,724.6 890.1,724.3 890.6,724.0 891.2,724.0 891.7,724.1 892.2,724.3 892.7,724.7 893.2,725.2 893.8,725.7 894.3,726.4 894.8,727.1 895.3,727.9 895.9,728.7 896.4,729.5 896.9,730.3 897.4,731.1 897.9,732.0 898.5,733.0 899.0,734.1 899.5,735.2 900.0,736.4 900.5,737.7 901.0,739.0 901.5,740.4 902.1,741.8 902.6,743.2 903.1,744.6 903.6,746.1 904.1,747.6 904.6,749.1 905.1,750.7 905.6,752.4 906.2,754.1 906.7,755.9 907.2,757.7 907.7,759.6 908.2,761.5 908.7,763.4 909.2,765.4 909.8,767.4 910.3,769.4 910.8,771.5 911.3,773.5 911.8,775.6 912.3,777.7 912.8,779.9 913.4,782.1 913.9,784.3 914.4,786.6 914.9,788.9 915.4,791.3 915.9,793.6 916.4,795.9 917.0,798.3 917.5,800.6 918.0,802.9 918.5,805.2 919.0,807.4 919.5,809.7 920.0,812.0 920.6,814.3 921.1,816.6 921.6,818.9 922.1,821.2 922.6,823.5 923.1,825.7 923.6,828.0 924.2,830.2 924.7,832.5 925.2,834.7 925.7,836.8 926.2,839.0 926.7,841.2 927.2,843.4 927.8,845.6 928.3,847.7 928.8,849.9 929.3,852.0 929.8,854.1 930.3,856.2 930.8,858.2 931.4,860.2 931.9,862.1 932.4,863.9 932.9,865.6 933.4,867.3 933.9,869.0 934.4,870.7 935.0,872.3 935.5,873.9 936.0,875.5 936.5,877.0 937.0,878.5 937.5,879.9 938.0,881.2 938.6,882.5 939.1,883.7 939.6,884.8 940.1,885.8 940.6,886.7 941.1,887.7 941.7,888.6 942.2,889.5 942.7,890.3 943.2,891.1 943.8,891.8 944.3,892.4 944.8,893.0 945.3,893.5 945.9,893.8 946.4,894.2 946.9,894.5 947.4,894.8 947.9,895.1 948.5,895.3 949.0,895.6 949.5,895.8 950.0,895.9 950.6,896.0 951.1,896.1 951.6,896.1 952.1,896.1 952.6,896.1 953.2,896.1 953.7,896.0 954.2,896.0 954.7,895.9 955.2,895.8 955.7,895.8 956.2,895.7 956.8,895.6 957.3,895.5 957.8,895.4 958.3,895.4 958.8,895.3 959.3,895.2 959.8,895.1 960.3,895.0 960.8,895.0 961.3,894.9 961.8,894.8 962.3,894.7 962.8,894.6 963.3,894.5 963.8,894.4 964.3,894.3 964.8,894.2 965.3,894.1 965.8,894.0 966.3,893.9 966.8,893.8 967.3,893.7 967.8,893.6 968.3,893.5 968.8,893.4 969.3,893.4 969.8,893.3 970.3,893.3 970.8,893.2 971.3,893.2 971.9,893.1 972.4,893.1 972.9,893.0 973.4,893.0 973.9,892.9 974.4,892.9 974.9,892.9 975.4,892.8 975.9,892.8 976.4,892.8 976.9,892.7 977.4,892.7 977.9,892.7 978.5,892.7 979.0,892.7 979.5,892.7 980.0,892.7 980.5,892.7 981.0,892.7 981.5,892.7 982.0,892.7 982.6,892.7 983.1,892.7 983.6,892.7 984.1,892.7 984.6,892.7 985.1,892.7 985.6,892.7 986.2,892.7 986.7,892.7 987.2,892.7 987.7,892.7 988.2,892.7 988.7,892.7 989.2,892.7 989.8,892.7 990.3,892.7 990.8,892.7 991.3,892.7 991.8,892.7 992.3,892.7 992.8,892.7 993.4,892.7 994.1,893.3 994.8,893.8 995.3,893.8 995.8,893.8 996.3,893.8 996.8,893.8 997.3,893.8 997.8,893.8 998.3,893.8 998.8,893.8 999.3,893.8 999.8,893.8 1000.3,893.8 1000.8,893.8 1001.3,893.8 1001.8,893.8 1002.3,893.8 1002.8,893.8 1003.3,893.8 1003.8,893.8 1004.3,893.8 1004.8,893.8 1005.3,893.8 1005.8,893.8 1006.3,893.8 1006.9,893.8 1007.4,893.8 1007.9,893.8 1008.4,893.8 1008.9,893.8 1009.4,893.8 1009.9,893.8 1010.4,893.8 1010.9,893.8 1011.4,893.8 1011.9,893.8 1012.4,893.8 1012.9,893.8 1013.4,893.8 1013.9,893.8 1014.4,893.8 1014.9,893.8 1015.4,893.8 1015.9,893.8 1016.4,893.8 1016.9,893.8 1017.4,893.8 1017.9,893.8 1018.4,893.8 1018.9,893.8 1019.4,893.8 1019.9,893.8 1020.4,893.8 1020.9,893.8 1021.4,893.8 1021.9,893.8 1022.4,893.8 1022.9,893.8 1023.4,893.8 1023.9,893.8 1024.4,893.8 1024.9,893.8 1025.4,893.8 1025.9,893.8 1026.4,893.8 1026.9,893.8 1027.4,893.8 1027.9,893.8 1028.4,893.8 1029.0,893.8 1029.5,893.8 1030.0,893.8 1030.5,893.8 1031.0,893.8 1031.5,893.8 1032.0,893.8 1032.5,893.8 1033.0,893.8 1033.5,893.8 1034.0,893.8 1034.5,893.8 1035.0,893.8 1035.5,893.8 1036.0,893.8 1036.5,893.8 1037.0,893.8 1037.5,893.8 1038.0,893.8 1038.5,893.8 1039.0,893.8 1039.5,893.8 1040.0,893.8 1040.5,893.8 1041.0,893.8 1041.5,893.8 1042.0,893.8 1042.5,893.8 1043.0,893.8 1043.5,893.8 1044.0,893.8 1044.5,893.8 1045.0,893.8 1045.5,893.8 1046.0,893.8 1046.5,893.8 1047.0,893.8 1047.5,893.8 1048.0,893.8 1048.5,893.8 1049.0,893.8 1049.5,893.8 1050.0,893.8 1050.5,893.8 1051.0,893.8 1051.5,893.8 1052.0,893.8 1052.5,893.8 1053.0,893.8 1053.5,893.8 1054.0,893.8 1054.5,893.8 1055.0,893.8 1055.5,893.8 1056.0,893.8 1056.5,893.8 1057.0,893.8 1057.5,893.8 1058.0,893.8 1058.5,893.8 1059.0,893.8 1059.5,893.8 1060.0,893.8 1060.5,893.8 1061.0,893.8 1061.5,893.8 1062.0,893.8 1062.5,893.8 1063.0,893.8 1063.5,893.8 1064.0,893.9 1064.5,893.9 1065.0,893.9 1065.5,893.9 1066.0,893.9 1066.5,893.9 1067.0,893.9 1067.5,893.9 1068.0,893.9 1068.5,893.9 1069.0,893.9 1069.5,893.9 1070.0,893.9 1070.5,893.9 1071.1,893.9 1071.6,893.9 1072.1,893.9 1072.6,893.9 1073.1,893.9 1073.6,893.9 1074.1,893.9 1074.6,893.9 1075.1,893.9 1075.6,893.9 1076.1,893.9 1076.6,893.9 1077.1,893.9 1077.6,893.9 1078.1,893.9 1078.6,893.9 1079.1,893.9 1079.6,893.9 1080.1,893.9 1080.6,893.9 1081.1,893.9 1081.6,893.9 1082.1,893.9 1082.6,893.9 1083.1,893.9 1083.6,893.9 1084.1,893.9 1084.6,893.9 1085.1,893.9 1085.6,893.9 1086.1,893.9 1086.6,893.9 1087.1,893.9 1087.6,893.9 1088.1,893.9 1088.6,893.9 1089.1,893.9 1089.6,893.9 1090.1,893.9 1090.6,893.9 1091.1,893.9 1091.6,893.9 1092.1,893.9 1092.6,893.9 1093.1,893.9 1093.6,893.9 1094.1,893.9 1094.6,893.9 1095.1,893.9 1095.6,893.9 1096.1,893.9 1096.6,893.9 1097.1,893.9 1097.6,893.9 1098.1,893.9 1098.6,893.9 1099.1,893.9 1099.6,893.9 1100.1,893.9 1100.6,893.9 1101.1,893.9 1101.6,893.9 1102.1,893.9 1102.6,893.9 1103.1,893.9 1103.6,893.9 1104.1,893.9 1104.6,893.9 1105.1,893.9 1105.6,893.9 1106.1,894.0 1106.6,894.0 1107.1,894.0 1107.6,894.0 1108.1,894.0 1108.6,894.0 1109.1,894.0 1109.6,894.0 1110.1,894.0 1110.6,894.0 1111.1,894.0 1111.6,894.0 1112.1,894.0 1112.6,894.0 1113.1,894.0 1113.6,894.0 1114.1,894.0 1114.6,894.0 1115.1,894.0 1115.6,894.0 1116.1,894.0 1116.6,894.0 1117.1,894.0 1117.6,894.0 1118.1,894.0 1118.6,894.0 1119.1,894.0 1119.6,894.0 1120.1,894.0 1120.6,894.0 1121.1,894.0 1121.6,894.0 1122.1,894.0 1122.6,894.0 1123.1,894.0 1123.6,894.0 1124.1,894.0 1124.6,894.0 1125.1,894.0 1125.6,894.0 1126.1,894.0 1126.6,894.1 1127.1,894.1 1127.6,894.1 1128.1,894.1 1128.6,894.1 1129.1,894.1 1129.6,894.1 1130.1,894.1 1130.6,894.1 1131.1,894.1 1131.6,894.1 1132.2,894.1 1132.7,894.1 1133.2,894.1 1133.7,894.1 1134.2,894.1 1134.7,894.1 1135.2,894.1 1135.7,894.1 1136.2,894.1 1136.7,894.1 1137.2,894.1 1137.7,894.1 1138.2,894.1 1138.7,894.1 1139.2,894.1 1139.7,894.1 1140.2,894.1 1140.7,894.1 1141.2,894.1 1141.7,894.2 1142.2,894.2 1142.7,894.2 1143.2,894.2 1143.7,894.2 1144.2,894.2 1144.7,894.2 1145.2,894.2 1145.7,894.2 1146.2,894.2 1146.7,894.2 1147.2,894.2 1147.7,894.2 1148.2,894.2 1148.7,894.2 1149.2,894.2 1149.7,894.2 1150.2,894.2 1150.7,894.2 1151.2,894.2 1151.7,894.2 1152.2,894.2 1152.7,894.2 1153.2,894.2 1153.7,894.3 1154.2,894.3 1154.7,894.3 1155.2,894.3 1155.7,894.3 1156.2,894.3 1156.7,894.3 1157.2,894.3 1157.7,894.3 1158.2,894.3 1158.7,894.3 1159.2,894.3 1159.7,894.3 1160.2,894.3 1160.7,894.3 1161.2,894.3 1161.7,894.3 1162.2,894.3 1162.7,894.3 1163.2,894.3 1163.7,894.4 1164.2,894.4 1164.7,894.4 1165.2,894.4 1165.7,894.4 1166.2,894.4 1166.7,894.4 1167.2,894.4 1167.7,894.4 1168.2,894.4 1168.7,894.4 1169.2,894.4 1169.7,894.4 1170.2,894.4 1170.7,894.4 1171.2,894.5 1171.7,894.5 1172.2,894.5 1172.7,894.6 1173.2,894.6 1173.7,894.7 1174.2,894.7 1174.7,894.8 1175.2,894.8 1175.7,894.9 1176.2,894.9 1176.7,895.0 1177.2,895.0 1177.7,895.1 1178.2,895.1 1178.7,895.2 1179.2,895.2 1179.7,895.2 1180.2,895.3 1180.7,895.3 1181.2,895.3 1181.7,895.3 1182.2,895.3 1182.7,895.3 1183.2,895.3 1183.7,895.2 1184.2,895.2 1184.7,895.2 1185.2,895.2 1185.7,895.2 1186.2,895.1 1186.7,895.1 1187.2,895.1 1187.7,895.0 1188.2,895.0 1188.7,895.0 1189.2,894.9 1189.7,894.9 1190.2,894.9 1190.7,894.8 1191.2,894.8 1191.7,894.8 1192.2,894.7 1192.7,894.7 1193.2,894.7 1193.7,894.6 1194.2,894.6 1194.7,894.5 1195.2,894.5 1195.7,894.4 1196.2,894.3 1196.8,894.3 1197.3,894.2 1197.8,894.1 1198.3,894.1 1198.8,894.0 1199.3,893.9 1199.8,893.9 1200.3,893.8 1200.8,893.8 1201.3,893.7 1201.8,893.7 1202.3,893.6 1202.8,893.6 1203.3,893.6 1203.8,893.6 1204.3,893.6 1204.8,893.6 1205.3,893.6 1205.8,893.6 1206.3,893.6 1206.8,893.7 1207.3,893.7 1207.8,893.8 1208.3,893.8 1208.8,893.9 1209.3,894.0 1209.8,894.1 1210.3,894.1 1210.8,894.2 1211.3,894.3 1211.8,894.4 1212.3,894.5 1212.8,894.6 1213.3,894.7 1213.8,894.8 1214.3,895.0 1214.8,895.1 1215.3,895.2 1215.8,895.3 1216.3,895.4 1216.8,895.5 1217.3,895.7 1217.8,895.8 1218.3,896.0 1218.8,896.1 1219.3,896.3 1219.8,896.5 1220.3,896.7 1220.8,896.9 1221.3,897.1 1221.8,897.3 1222.3,897.5 1222.8,897.7 1223.3,897.9 1223.8,898.1 1224.3,898.3 1224.8,898.5 1225.3,898.8 1225.8,899.0 1226.3,899.2 1226.8,899.4 1227.3,899.6 1227.8,899.8 1228.3,900.0 1228.8,900.2 1229.3,900.4 1229.8,900.7 1230.3,900.9 1230.9,901.1 1231.4,901.3 1231.9,901.6 1232.4,901.8 1232.9,902.0 1233.4,902.3 1233.9,902.5 1234.4,902.7 1234.9,903.0 1235.4,903.2 1235.9,903.4 1236.4,903.7 1236.9,903.9 1237.5,904.2 1238.0,904.4 1238.5,904.6 1239.0,904.9 1239.5,905.1 1240.0,905.3 1240.5,905.6 1241.0,905.8 1241.5,906.0 1242.0,906.3 1242.5,906.5 1243.0,906.7 1243.6,906.9 1244.1,907.2 1244.6,907.4 1245.1,907.6 1245.6,907.8 1246.1,908.0 1246.6,908.2 1247.1,908.5 1247.7,908.7 1248.2,908.9 1248.7,909.1 1249.2,909.4 1249.7,909.6 1250.2,909.8 1250.7,910.0 1251.3,910.2 1251.8,910.4 1252.3,910.7 1252.8,910.9 1253.3,911.1 1253.8,911.3 1254.3,911.5 1254.9,911.7 1255.4,911.9 1255.9,912.1 1256.4,912.3 1256.9,912.4 1257.4,912.6 1257.9,912.8 1258.4,913.0 1259.0,913.1 1259.5,913.3 1260.0,913.5 1260.5,913.6 1261.0,913.8 1261.5,914.0 1262.0,914.2 1262.5,914.4 1263.0,914.5 1263.5,914.7 1264.0,914.9 1264.6,915.0 1265.1,915.1 1265.6,915.2 1266.1,915.3 1266.6,915.4 1267.1,915.4 1267.6,915.4 1268.1,915.4 1268.6,915.4 1269.1,915.4 1269.7,915.4 1270.2,915.4 1270.7,915.4 1271.2,915.4 1271.7,915.3 1272.2,915.3 1272.7,915.3 1273.3,915.2 1273.8,915.2 1274.3,915.2 1274.8,915.1 1275.3,915.1 1275.8,914.9 1276.3,914.7 1276.9,914.4 1277.4,914.1 1277.9,913.7 1278.4,913.4 1278.9,912.9 1279.4,912.5 1279.9,912.0 1280.5,911.6 1281.0,911.1 1281.5,910.7 1282.0,910.2 1282.5,909.8 1283.0,909.4 1283.5,908.9 1284.0,908.4 1284.5,907.9 1285.0,907.3 1285.6,906.8 1286.1,906.2 1286.6,905.7 1287.1,905.1 1287.6,904.6 1288.1,904.0 1288.6,903.5 1289.1,903.0 1289.6,902.5 1290.1,902.1 1290.6,901.6 1291.1,901.2 1291.6,900.8 1292.1,900.4 1292.6,899.9 1293.2,899.5 1293.7,899.1 1294.2,898.7 1294.7,898.3 1295.2,897.9 1295.7,897.5 1296.2,897.2 1296.7,896.8 1297.2,896.5 1297.7,896.1 1298.2,895.8 1298.7,895.5 1299.2,895.2 1299.7,894.9 1300.2,894.7 1300.7,894.4 1301.2,894.2 1301.7,893.9 1302.2,893.7 1302.7,893.5 1303.2,893.2 1303.7,893.0 1304.2,892.8 1304.7,892.5 1305.2,892.3 1305.7,892.1 1306.3,891.9 1306.8,891.7 1307.3,891.6 1307.8,891.4 1308.3,891.3 1308.8,891.2 1309.3,891.1 1309.8,891.0 1310.3,891.0 1310.8,891.0 1311.3,891.0 1311.8,891.0 1312.3,891.1 1312.8,891.1 1313.3,891.2 1313.9,891.3 1314.4,891.4 1314.9,891.5 1315.4,891.7 1315.9,891.8 1316.4,892.0 1316.9,892.1 1317.4,892.3 1318.0,892.4 1318.5,892.6 1319.0,892.7 1319.5,892.8 1320.0,893.0 1320.5,893.1 1321.0,893.3 1321.5,893.4 1322.0,893.6 1322.5,893.7 1323.0,893.8 1323.5,893.9 1324.0,894.0 1324.5,894.1 1325.0,894.2 1325.5,894.3 1326.0,894.3 1326.5,894.4 1327.0,894.5 1327.5,894.6 1328.0,894.6 1328.5,894.7 1329.0,894.8 1329.5,894.8 1330.0,894.9 1330.5,894.9 1331.0,895.0 1331.5,895.0 1332.0,895.1 1332.5,895.1 1333.0,895.2 1333.5,895.2 1334.0,895.2 1334.5,895.3 1335.0,895.3 1335.6,895.4 1336.1,895.4 1336.6,895.4 1337.1,895.5 1337.6,895.5 1338.1,895.5 1338.6,895.6 1339.1,895.6 1339.6,895.6 1340.1,895.7 1340.6,895.7 1341.1,895.7 1341.6,895.7 1342.1,895.8 1342.6,895.8 1343.1,895.8 1343.6,895.8 1344.1,895.8 1344.6,895.8 1345.1,895.8 1345.6,895.9 1346.1,895.9 1346.6,895.8 1347.1,895.8 1347.6,895.8 1348.1,895.7 1348.6,895.7 1349.1,895.6 1349.6,895.5 1350.1,895.5 1350.6,895.4 1351.1,895.3 1351.6,895.2 1352.1,895.1 1352.6,895.0 1353.1,894.9 1353.6,894.8 1354.1,894.7 1354.6,894.7 1355.1,894.6 1355.6,894.5 1356.1,894.5 1356.6,894.4 1357.1,894.4 1357.6,894.4 1358.1,894.4 1358.6,894.4 1359.1,894.4 1359.6,894.4 1360.1,894.4 1360.6,894.4 1361.1,894.4 1361.6,894.4 1362.2,894.4 1362.7,894.4 1363.2,894.4 1363.7,894.4 1364.2,894.4 1364.7,894.4 1365.2,894.4 1365.7,894.4 1366.2,894.4 1366.7,894.4 1367.2,894.4 1367.7,894.4 1368.3,894.4 1368.8,894.4 1369.3,894.4 1369.8,894.4 1370.3,894.4 1370.8,894.4 1371.3,894.4 1371.8,894.4 1372.3,894.4 1372.8,894.4 1373.3,894.4 1373.8,894.4 1374.3,894.4 1374.9,894.4 1375.4,894.4 1375.9,894.4 1376.4,894.5 1376.9,894.5 1377.4,894.6 1377.9,894.6 1378.4,894.7 1378.9,894.8 1379.4,894.9 1379.9,895.0 1380.4,895.1 1380.9,895.2 1381.4,895.3 1381.9,895.4 1382.4,895.6 1382.9,895.7 1383.4,895.8 1383.9,896.0 1384.4,896.1 1384.9,896.3 1385.4,896.4 1385.9,896.6 1386.4,896.7 1386.9,896.9 1387.4,897.0 1387.9,897.2 1388.4,897.4 1388.9,897.6 1389.4,897.8 1389.9,898.1 1390.4,898.3 1390.9,898.5 1391.4,898.8 1391.9,899.1 1392.4,899.3 1392.9,899.6 1393.4,899.9 1393.9,900.3 1394.4,900.6 1394.9,900.9 1395.4,901.2 1395.9,901.6 1396.4,901.9 1396.9,902.3 1397.4,902.7 1397.9,903.1 1398.4,903.5 1398.9,903.9 1399.4,904.4 1399.9,904.9 1400.4,905.5 1400.9,906.1 1401.4,906.7 1401.9,907.4 1402.4,908.0 1402.9,908.7 1403.4,909.4 1403.9,910.1 1404.4,910.8 1404.9,911.5 1405.4,912.2 1405.9,912.9 1406.4,913.6 1406.9,914.3 1407.4,915.0 1407.9,915.6 1408.4,916.3 1408.9,916.9 1409.4,917.4 1409.9,918.0 1410.4,918.6 1410.9,919.1 1411.4,919.7 1411.9,920.2 1412.4,920.8 1412.9,921.4 1413.4,921.9 1413.9,922.5 1414.4,923.0 1414.9,923.5 1415.4,924.0 1415.9,924.6 1416.4,925.1 1416.9,925.6 1417.4,926.0 1417.9,926.5 1418.4,927.0 1418.9,927.4 1419.4,927.8 1419.9,928.2 1420.4,928.6 1420.9,929.0 1421.4,929.3 1421.9,929.7 1422.4,930.1 1422.9,930.4 1423.4,930.8 1423.9,931.2 1424.4,931.6 1424.9,931.9 1425.4,932.3 1425.9,932.6 1426.4,933.0 1426.9,933.3 1427.4,933.6 1427.9,933.9 1428.4,934.2 1428.9,934.4 1429.4,934.6 1429.9,934.8 1430.4,935.0 1430.9,935.1 1431.4,935.2 1431.9,935.3 1432.4,935.3 1432.9,935.3 1433.5,935.2 1434.0,935.1 1434.5,934.9 1435.0,934.7 1435.5,934.5 1436.0,934.2 1436.5,933.9 1437.0,933.6 1437.5,933.2 1438.0,932.9 1438.5,932.5 1439.0,932.1 1439.6,931.7 1440.1,931.2 1440.6,930.8 1441.1,930.4 1441.6,929.9 1442.1,929.4 1442.6,928.8 1443.1,928.2 1443.6,927.4 1444.1,926.7 1444.6,925.9 1445.1,925.1 1445.6,924.2 1446.2,923.4 1446.7,922.5 1447.2,921.6 1447.7,920.7 1448.2,919.9 1448.7,919.0 1449.2,918.2 1449.7,917.4 1450.2,916.7 1450.7,915.9 1451.2,915.1 1451.7,914.3 1452.2,913.5 1452.7,912.6 1453.2,911.8 1453.7,911.0 1454.2,910.1 1454.8,909.3 1455.3,908.5 1455.8,907.7 1456.3,907.0 1456.8,906.2 1457.3,905.5 1457.8,904.8 1458.3,904.2 1458.8,903.6 1459.3,903.0 1459.8,902.5 1460.3,902.0 1460.8,901.5 1461.3,901.0 1461.8,900.5 1462.3,900.1 1462.8,899.6 1463.3,899.1 1463.8,898.7 1464.3,898.3 1464.8,897.9 1465.3,897.5 1465.8,897.1 1466.3,896.8 1466.8,896.5 1467.3,896.1 1467.9,895.9 1468.4,895.6 1468.9,895.4 1469.4,895.2 1469.9,895.0 1470.4,894.8 1470.9,894.7 1471.4,894.5 1471.9,894.4 1472.4,894.2 1472.9,894.1 1473.4,893.9 1473.9,893.8 1474.4,893.7 1474.9,893.6 1475.4,893.4 1475.9,893.3 1476.4,893.2 1476.9,893.1 1477.4,893.0 1477.9,893.0 1478.4,892.9 1478.9,892.8 1479.4,892.8 1479.9,892.7 1480.4,892.7 1480.9,892.7 1481.4,892.7 1481.9,892.7 1482.4,892.7 1482.9,892.7 1483.4,892.7 1483.9,892.7 1484.4,892.7 1484.9,892.8 1485.4,892.8 1486.0,892.8 1486.5,892.8 1487.0,892.8 1487.5,892.9 1488.0,892.9 1488.5,892.9 1489.0,892.9 1489.5,893.0 1490.0,893.0 1490.5,893.0 1491.0,893.0 1491.5,893.1 1492.0,893.1 1492.5,893.1 1493.0,893.2 1493.5,893.2 1494.0,893.3 1494.5,893.3 1495.0,893.4 1495.5,893.4 1496.0,893.5 1496.5,893.5 1497.0,893.6 1497.5,893.6 1498.0,893.7 1498.5,893.7 1499.0,893.8 1499.5,893.8 1500.0,893.8 1500.5,893.8 1501.0,893.8 1501.5,893.8 1502.0,893.8 1502.5,893.8 1503.0,893.8 1503.5,893.8 1504.0,893.8 1504.5,893.8 1505.0,893.8 1505.5,893.8 1506.0,893.8 1506.5,893.8 1507.0,893.8 1507.5,893.8 1508.0,893.8 1508.5,893.8 1509.0,893.8 1509.5,893.8 1510.0,893.8 1510.5,893.8 1511.0,893.8 1511.5,893.8 1512.1,893.8 1512.6,893.8 1513.1,893.8 1513.6,893.8 1514.1,893.8 1514.6,893.8 1515.1,893.8 1515.6,893.8 1516.1,893.8 1516.6,893.8 1517.1,893.8 1517.6,893.8 1518.1,893.8 1518.6,893.8 1519.1,893.8 1519.6,893.8 1520.1,893.8 1520.6,893.8 1521.1,893.8 1521.6,893.8 1522.1,893.8 1522.6,893.8 1523.1,893.8 1523.6,893.8 1524.1,893.8 1524.6,893.8 1525.1,893.8 1525.6,893.8 1526.1,893.8 1526.6,893.8 1527.1,893.8 1527.6,893.8 1528.1,893.8 1528.6,893.8 1529.1,893.8 1529.6,893.8 1530.1,893.8 1530.6,893.8 1531.1,893.8 1531.6,893.8 1532.1,893.8 1532.6,893.8 1533.1,893.8 1533.6,893.8 1534.1,893.8 1534.6,893.8 1535.1,893.8 1535.6,893.8 1536.1,893.8 1536.6,893.8 1537.1,893.8 1537.6,893.8 1538.1,893.8 1538.6,893.8 1539.1,893.8 1539.6,893.8 1540.1,893.8 1540.6,893.8 1541.1,893.8 1541.6,893.8 1542.1,893.8 1542.6,893.8 1543.1,893.8 1543.6,893.8 1544.1,893.8 1544.6,893.8 1545.1,893.8 1545.6,893.8 1546.1,893.8 1546.6,893.8 1547.1,893.8 1547.6,893.8 1548.1,893.8 1548.6,893.8 1549.1,893.8 1549.6,893.8 1550.1,893.8 1550.6,893.8 1551.1,893.8 1551.6,893.8 1552.1,893.8 1552.6,893.8 1553.1,893.8 1553.6,893.8 1554.1,893.8 1554.6,893.8 1555.1,893.8 1555.6,893.8 1556.1,893.8 1556.6,893.8 1557.1,893.8 1557.6,893.8 1558.1,893.8 1558.6,893.8 1559.1,893.8 1559.6,893.8 1560.1,893.8 1560.6,893.8 1561.1,893.8 1561.6,893.8 1562.1,893.8 1562.6,893.8 1563.1,893.8 1563.6,893.8 1564.1,893.8 1564.6,893.8 1565.1,893.8 1565.6,893.8 1566.1,893.8 1566.6,893.8 1567.1,893.8 1567.6,893.8 1568.1,893.8 1568.6,893.8 1569.1,893.8 1569.6,893.8 1570.1,893.8 1570.6,893.8 1571.1,893.8 1571.6,893.8 1572.1,893.8 1572.6,893.8 1573.1,893.8 1573.6,893.8 1574.1,893.8 1574.6,893.8 1575.1,893.8 1575.6,893.8 1576.1,893.8 1576.6,893.8 1577.1,893.8 1577.6,893.8 1578.1,893.8 1578.6,893.8 1579.1,893.8 1579.6,893.8 1580.1,893.8 1580.6,893.8 1581.1,893.8 1581.6,893.8 1582.1,893.8 1582.7,894.0 1583.3,894.2 1583.9,894.6 1584.5,894.9 1585.0,895.0 1585.6,894.9 1586.2,894.6 1586.8,894.2 1587.3,894.0 1587.9,893.8 1588.4,893.8 1588.9,893.8 1589.4,893.8 1589.9,893.8 1590.4,893.8 1590.9,893.8 1591.4,893.8 1591.9,893.8 1592.4,893.8 1592.9,893.8 1593.5,893.8 1594.0,893.8 1594.5,893.8 1595.0,893.8 1595.5,893.8 1596.0,893.8 1596.5,893.8 1597.0,893.8 1597.5,893.8 1598.0,893.8 1598.5,893.8 1599.0,893.8 1599.5,893.8 1600.0,893.8 1600.5,893.8 1601.0,893.8 1601.5,893.8 1602.0,893.8 1602.5,893.8 1603.0,893.8 1603.5,893.8 1604.0,893.8 1604.5,893.8 1605.0,893.8 1605.6,893.8 1606.1,893.8 1606.6,893.8 1607.1,893.8 1607.6,893.8 1608.1,893.8 1608.6,893.8 1609.1,893.8 1609.6,893.8 1610.1,893.8 1610.6,893.8 1611.1,893.8 1611.6,893.8 1612.1,893.8 1612.6,893.8 1613.1,893.8 1613.6,893.8 1614.1,893.8 1614.6,893.8 1615.1,893.8 1615.7,893.8 1616.2,893.8 1616.7,893.8 1617.2,893.8 1617.7,893.8 1618.2,893.8 1618.7,893.8 1619.2,893.8 1619.7,893.8 1620.2,893.8 1620.7,893.8 1621.2,893.8 1621.7,893.8 1622.2,893.8 1622.7,893.8 1623.2,893.8 1623.7,893.8 1624.2,893.8 1624.7,893.8 1625.2,893.8 1625.8,893.8 1626.3,893.8 1626.8,893.8 1627.3,893.8 1627.8,893.8 1628.3,893.8 1628.8,893.8 1629.3,893.8 1629.8,893.8 1630.3,893.8 1630.8,893.8 1631.3,893.8 1631.8,893.8 1632.3,893.8 1632.8,893.8 1633.3,893.8 1633.8,893.8 1634.3,893.8 1634.8,893.8 1635.3,893.8 1635.8,893.8 1636.3,893.8 1636.8,893.8 1637.3,893.8 1637.8,893.8 1638.3,893.8 1638.8,893.8 1639.3,893.8 1639.8,893.8 1640.3,893.8 1640.8,893.8 1641.3,893.8 1641.8,893.8 1642.3,893.8 1642.8,893.8 1643.3,893.8 1643.8,893.8 1644.3,893.8 1644.8,893.8 1645.4,893.8 1645.9,893.8 1646.4,893.8 1646.9,893.8 1647.4,893.8 1647.9,893.8 1648.4,893.8 1648.9,893.8 1649.4,893.8 1649.9,893.8 1650.4,893.8 1650.9,893.8 1651.4,893.8 1651.9,893.8 1652.4,893.8 1652.9,893.8 1653.4,893.8 1653.9,893.8 1654.4,893.8 1654.9,893.8 1655.4,893.8 1655.9,893.8 1656.4,893.8 1656.9,893.8 1657.4,893.8 1657.9,893.8 1658.4,893.8 1658.9,893.8 1659.4,893.8 1659.9,893.8 1660.4,893.8 1660.9,893.8 1661.4,893.8 1661.9,893.8 1662.4,893.8 1662.9,893.8 1663.4,893.8 1663.9,893.8 1664.4,893.8 1664.9,893.8 1665.4,893.8 1665.9,893.8 1666.4,893.8 1666.9,893.8 1667.4,893.8 1667.9,893.8 1668.4,893.8 1668.9,893.8 1669.4,893.8 1670.0,893.8 1670.5,893.8 1671.0,893.8 1671.5,893.8 1672.0,893.8 1672.5,893.8 1673.0,893.8 1673.5,893.8 1674.0,893.8 1674.5,893.8 1675.0,893.8 1675.5,893.8 1676.0,893.8 1676.5,893.8 1677.0,893.8 1677.5,893.8 1678.0,893.8 1678.5,893.8 1679.0,893.8 1679.5,893.8 1680.0,893.8 1680.5,893.8 1681.0,893.8 1681.5,893.8 1682.0,893.8 1682.5,893.8 1683.0,893.8 1683.5,893.8 1684.0,893.8 1684.5,893.8 1685.0,893.8 1685.5,893.8 1686.0,893.8 1686.5,893.8 1687.0,893.8 1687.5,893.8 1688.0,893.8 1688.5,893.8 1689.0,893.8 1689.5,893.8 1690.0,893.8 1690.5,893.8 1691.0,893.8 1691.5,893.8 1692.0,893.8 1692.5,893.8 1693.0,893.8 1693.5,893.8 1694.0,893.8 1694.6,893.8 1695.1,893.8 1695.6,893.8 1696.1,893.8 1696.6,893.8 1697.1,893.8 1697.6,893.8 1698.1,893.8 1698.6,893.8 1699.1,893.8 1699.6,893.8 1700.1,893.8 1700.6,893.8 1701.1,893.8 1701.6,893.8 1702.1,893.8 1702.6,893.8 1703.1,893.8 1703.6,893.8 1704.1,893.8 1704.6,893.8 1705.1,893.8 1705.6,893.8 1706.1,893.8 1706.6,893.8 1707.1,893.8 1707.6,893.8 1708.1,893.8 1708.6,893.8 1709.1,893.8 1709.6,893.8 1710.1,893.8 1710.6,893.8 1711.1,893.8 1711.6,893.8 1712.1,893.8 1712.6,893.8 1713.1,893.8 1713.6,893.8 1714.1,893.8 1714.6,893.8 1715.1,893.8 1715.6,893.8 1716.1,893.8 1716.6,893.8 1717.1,893.9 1717.6,893.9 1718.1,894.0 1718.6,894.1 1719.1,894.1 1719.6,894.2 1720.1,894.3 1720.6,894.4 1721.1,894.5 1721.6,894.6 1722.1,894.7 1722.6,894.8 1723.1,895.0 1723.6,895.1 1724.1,895.2 1724.6,895.3 1725.1,895.4 1725.6,895.6 1726.1,895.7 1726.6,895.8 1727.1,895.9 1727.6,896.1 1728.1,896.2 1728.7,896.3 1729.2,896.5 1729.7,896.6 1730.2,896.8 1730.7,896.9 1731.2,897.1 1731.7,897.3 1732.2,897.4 1732.7,897.6 1733.2,897.8 1733.7,898.0 1734.2,898.2 1734.7,898.4 1735.2,898.6 1735.7,898.9 1736.2,899.1 1736.7,899.3 1737.2,899.6 1737.7,899.9 1738.2,900.1 1738.7,900.4 1739.2,900.7 1739.7,901.1 1740.2,901.5 1740.7,901.9 1741.2,902.3 1741.7,902.7 1742.2,903.2 1742.7,903.7 1743.2,904.2 1743.7,904.7 1744.2,905.3 1744.7,905.8 1745.2,906.4 1745.7,906.9 1746.2,907.5 1746.7,908.1 1747.2,908.7 1747.7,909.3 1748.2,909.9 1748.7,910.5 1749.2,911.1 1749.7,911.6 1750.2,912.2 1750.7,912.9 1751.2,913.5 1751.7,914.2 1752.2,914.9 1752.7,915.6 1753.2,916.3 1753.7,917.1 1754.2,917.8 1754.7,918.6 1755.2,919.4 1755.7,920.1 1756.2,920.9 1756.7,921.6 1757.2,922.3 1757.7,923.1 1758.2,923.8 1758.7,924.5 1759.2,925.1 1759.7,925.8 1760.2,926.4 1760.7,926.9 1761.2,927.5 1761.7,928.0 1762.2,928.5 1762.7,929.1 1763.2,929.6 1763.7,930.1 1764.2,930.7 1764.7,931.2 1765.2,931.8 1765.7,932.3 1766.2,932.8 1766.7,933.3 1767.2,933.8 1767.7,934.2 1768.2,934.6 1768.7,935.1 1769.2,935.4 1769.7,935.8 1770.2,936.1 1770.7,936.3 1771.2,936.6 1771.7,936.7 1772.2,936.9 1772.7,937.0 1773.2,937.0 1773.7,937.1 1774.2,937.1 1774.7,937.2 1775.2,937.2 1775.7,937.3 1776.3,937.3 1776.8,937.4 1777.3,937.4 1777.8,937.4 1778.3,937.5 1778.8,937.5 1779.3,937.5 1779.8,937.5 1780.3,937.5 1780.8,937.5 1781.3,937.5 1781.8,937.5 1782.4,937.3 1782.9,937.0 1783.4,936.6 1783.9,936.1 1784.4,935.6 1784.9,935.0 1785.4,934.3 1785.9,933.6 1786.4,932.8 1786.9,932.1 1787.4,931.3 1787.9,930.5 1788.4,929.7 1789.0,928.9 1789.5,928.2 1790.0,927.5 1790.5,926.8 1791.0,926.1 1791.5,925.3 1792.0,924.5 1792.5,923.7 1793.0,922.9 1793.5,922.1 1794.0,921.2 1794.5,920.3 1795.0,919.5 1795.5,918.6 1796.0,917.7 1796.5,916.8 1797.0,916.0 1797.5,915.1 1798.0,914.2 1798.5,913.4 1799.0,912.6 1799.5,911.8 1800.0,911.0 1800.5,910.2 1801.0,909.5 1801.5,908.8 1802.0,908.1 1802.5,907.4 1803.0,906.7 1803.5,906.0 1804.0,905.3 1804.5,904.6 1805.0,903.9 1805.5,903.2 1806.0,902.6 1806.5,901.9 1807.0,901.3 1807.5,900.6 1808.0,900.0 1808.5,899.4 1809.0,898.8 1809.5,898.3 1810.0,897.7 1810.5,897.2 1811.0,896.7 1811.5,896.2 1812.0,895.8 1812.5,895.3 1813.0,894.9 1813.5,894.6 1814.0,894.2 1814.5,893.9 1815.0,893.6 1815.5,893.2 1816.0,892.9 1816.5,892.6 1817.0,892.4 1817.5,892.1 1818.0,891.8 1818.5,891.6 1819.0,891.3 1819.5,891.1 1820.0,890.8 1820.5,890.6 1821.0,890.3 1821.5,890.1 1822.0,889.9 1822.5,889.6 1823.0,889.4 1823.5,889.1 1824.0,888.9 1824.5,888.6 1825.0,888.3 1825.5,888.1 1826.0,887.9 1826.5,887.6 1827.1,887.4 1827.6,887.2 1828.1,887.0 1828.6,886.8 1829.1,886.5 1829.6,886.3 1830.1,886.1 1830.6,885.8 1831.1,885.5 1831.6,885.3 1832.1,885.0 1832.6,884.6 1833.1,884.3 1833.7,883.9 1834.2,883.5 1834.7,883.0 1835.2,882.4 1835.7,881.9 1836.2,881.3 1836.7,880.6 1837.2,880.0 1837.7,879.3 1838.2,878.7 1838.7,878.0 1839.2,877.3 1839.8,876.7 1840.3,876.0 1840.8,875.4 1841.3,874.8 1841.8,874.2 1842.3,873.7 1842.8,873.1 1843.3,872.6 1843.8,872.1 1844.3,871.5 1844.8,871.0 1845.3,870.5 1845.8,870.0 1846.3,869.5 1846.8,869.0 1847.3,868.5 1847.8,868.0 1848.3,867.5 1848.8,867.0 1849.3,866.5 1849.8,866.0 1850.3,865.5 1850.8,865.0 1851.3,864.6 1851.8,864.1 1852.3,863.6 1852.8,863.2 1853.3,862.7 1853.8,862.2 1854.3,861.7 1854.8,861.3 1855.3,860.8 1855.8,860.2 1856.3,859.7 1856.9,859.2 1857.4,858.8 1857.9,858.3 1858.4,857.8 1858.9,857.4 1859.4,857.0 1859.9,856.6 1860.4,856.3 1860.9,856.0 1861.4,855.7 1861.9,855.5 1862.4,855.3 1862.9,855.1 1863.5,855.0 1864.0,854.8 1864.5,854.6 1865.0,854.5 1865.5,854.3 1866.0,854.2 1866.5,854.0 1867.0,853.9 1867.5,853.8 1868.0,853.7 1868.5,853.6 1869.0,853.6 1869.6,853.5 1870.1,853.5 1870.6,853.5 1871.1,853.5 1871.6,853.6 1872.1,853.7 1872.6,853.8 1873.1,853.9 1873.6,854.1 1874.1,854.3 1874.6,854.6 1875.1,854.8 1875.6,855.1 1876.2,855.3 1876.7,855.6 1877.2,855.9 1877.7,856.1 1878.2,856.4 1878.7,856.7 1879.2,856.9 1879.7,857.2 1880.2,857.5 1880.7,857.8 1881.2,858.1 1881.7,858.4 1882.2,858.7 1882.8,859.0 1883.3,859.4 1883.8,859.7 1884.3,860.1 1884.8,860.4 1885.3,860.8 1885.8,861.2 1886.3,861.6 1886.8,861.9 1887.3,862.3 1887.8,862.7 1888.4,863.1 1888.9,863.5 1889.4,863.9 1889.9,864.4 1890.4,864.8 1890.9,865.3 1891.4,865.8 1891.9,866.2 1892.5,866.7 1893.0,867.2 1893.5,867.6 1894.0,868.1 1894.5,868.6 1895.0,869.0" fill="none" stroke="#d62728" stroke-width="1.5" stroke-linejoin="round" /><polyline points="790.4,883.8 790.9,883.8 791.4,883.8 791.9,883.8 792.4,883.8 792.9,883.8 793.4,883.8 793.9,883.8 794.4,883.8 794.9,883.8 795.4,883.8 795.9,883.8 796.4,883.8 796.9,883.8 797.4,883.8 797.9,883.8 798.4,883.8 798.9,883.8 799.4,883.8 799.9,883.8 800.4,883.8 800.9,883.8 801.4,883.8 802.0,883.8 802.5,883.8 803.0,883.8 803.5,883.8 804.0,883.8 804.5,883.8 805.0,883.8 805.5,883.8 806.0,883.8 806.5,883.8 807.0,883.8 807.5,883.8 808.0,883.8 808.5,883.8 809.0,883.8 809.5,883.8 810.0,883.8 810.5,883.8 811.0,883.8 811.5,883.8 812.0,883.8 812.5,883.8 813.0,883.8 813.5,883.8 814.0,883.8 814.5,883.8 815.0,883.8 815.5,883.8 816.0,883.8 816.5,883.8 817.0,883.8 817.5,883.8 818.0,883.8 818.6,883.8 819.1,883.8 819.6,883.8 820.1,883.8 820.6,883.8 821.1,883.8 821.6,883.8 822.1,883.8 822.6,883.8 823.1,883.8 823.6,883.8 824.1,883.8 824.6,883.8 825.1,883.8 825.6,883.8 826.1,883.8 826.6,883.8 827.1,883.8 827.6,883.8 828.1,883.8 828.6,883.8 829.1,883.8 829.6,883.8 830.1,883.8 830.6,883.8 831.1,883.8 831.6,883.8 832.1,883.8 832.7,883.7 833.2,883.6 833.8,883.3 834.3,883.0 834.8,882.7 835.4,882.3 835.9,881.9 836.4,881.5 837.0,881.0 837.5,880.6 838.0,880.0 838.5,879.4 839.1,878.8 839.6,878.1 840.1,877.4 840.6,876.6 841.2,875.9 841.7,875.1 842.2,874.3 842.7,873.4 843.3,872.6 843.8,871.6 844.3,870.7 844.8,869.6 845.3,868.6 845.9,867.5 846.4,866.4 846.9,865.2 847.4,864.0 848.0,862.7 848.5,861.5 849.0,860.1 849.5,858.7 850.1,857.2 850.6,855.6 851.1,854.0 851.6,852.4 852.2,850.7 852.7,849.0 853.2,847.3 853.7,845.5 854.2,843.6 854.8,841.7 855.3,839.7 855.8,837.7 856.3,835.6 856.9,833.5 857.4,831.3 857.9,829.1 858.4,826.9 859.0,824.7 859.5,822.4 860.0,820.2 860.5,817.9 861.1,815.7 861.6,813.4 862.1,811.0 862.6,808.7 863.1,806.3 863.7,803.9 864.2,801.4 864.7,799.0 865.2,796.5 865.8,794.0 866.3,791.4 866.8,788.8 867.3,786.2 867.9,783.5 868.4,780.8 868.9,778.1 869.4,775.5 870.0,772.8 870.5,770.3 871.0,767.7 871.5,765.2 872.0,762.6 872.6,759.9 873.1,757.2 873.6,754.6 874.1,752.0 874.7,749.6 875.2,747.3 875.7,745.2 876.2,743.4 876.8,741.8 877.3,740.5 877.8,739.1 878.3,737.7 878.8,736.4 879.3,735.2 879.8,734.0 880.3,732.9 880.8,731.9 881.3,731.1 881.8,730.4 882.4,729.9 882.9,729.6 883.4,729.4 883.9,729.5 884.5,729.6 885.0,729.8 885.6,730.0 886.1,730.3 886.6,730.6 887.2,730.9 887.7,731.3 888.3,731.7 888.8,732.3 889.3,733.2 889.8,734.3 890.4,735.6 890.9,737.1 891.4,738.7 891.9,740.4 892.5,742.2 893.0,744.0 893.5,745.8 894.0,747.6 894.6,749.3 895.1,751.2 895.6,753.2 896.1,755.2 896.6,757.3 897.2,759.5 897.7,761.7 898.2,763.9 898.7,766.1 899.3,768.4 899.8,770.6 900.3,772.9 900.8,775.2 901.4,777.6 901.9,780.0 902.4,782.5 902.9,785.0 903.5,787.4 904.0,789.8 904.5,792.1 905.0,794.4 905.5,796.5 906.1,798.6 906.6,800.6 907.1,802.5 907.6,804.5 908.1,806.3 908.6,808.2 909.1,810.0 909.7,811.9 910.2,813.7 910.7,815.4 911.2,817.2 911.7,818.9 912.2,820.7 912.7,822.4 913.3,824.2 913.8,825.9 914.3,827.7 914.8,829.4 915.3,831.1 915.8,832.8 916.3,834.5 916.9,836.2 917.4,837.8 917.9,839.4 918.4,841.0 918.9,842.5 919.4,844.0 919.9,845.5 920.5,846.9 921.0,848.2 921.5,849.6 922.0,850.9 922.5,852.1 923.0,853.4 923.5,854.6 924.1,855.8 924.6,857.0 925.1,858.2 925.6,859.3 926.1,860.5 926.6,861.6 927.1,862.7 927.7,863.9 928.2,865.0 928.7,866.1 929.2,867.2 929.7,868.3 930.2,869.4 930.7,870.5 931.3,871.6 931.8,872.6 932.3,873.6 932.8,874.5 933.3,875.4 933.8,876.3 934.3,877.1 934.9,877.9 935.4,878.7 935.9,879.5 936.4,880.3 936.9,881.0 937.4,881.7 937.9,882.4 938.5,883.1 939.0,883.7 939.5,884.3 940.0,884.9 940.5,885.4 941.0,885.9 941.5,886.4 942.0,886.8 942.6,887.2 943.1,887.6 943.6,887.9 944.1,888.3 944.6,888.6 945.1,888.9 945.6,889.2 946.2,889.5 946.7,889.8 947.2,890.1 947.7,890.3 948.2,890.5 948.7,890.7 949.2,890.8 949.7,891.0 950.2,891.2 950.7,891.3 951.3,891.5 951.8,891.6 952.3,891.8 952.8,891.9 953.3,892.0 953.8,892.1 954.3,892.3 954.8,892.4 955.3,892.5 955.8,892.6 956.3,892.7 956.8,892.7 957.3,892.8 957.8,892.9 958.3,892.9 958.8,893.0 959.3,893.0 959.8,893.1 960.3,893.1 960.8,893.1 961.3,893.2 961.8,893.2 962.3,893.2 962.8,893.3 963.3,893.3 963.8,893.3 964.3,893.3 964.8,893.4 965.3,893.4 965.8,893.4 966.3,893.4 966.8,893.4 967.3,893.5 967.8,893.5 968.3,893.5 968.8,893.5 969.3,893.5 969.8,893.5 970.3,893.6 970.8,893.6 971.4,893.6 971.9,893.6 972.4,893.6 972.9,893.6 973.4,893.6 973.9,893.7 974.4,893.7 975.0,893.7 975.5,893.7 976.0,893.7 976.5,893.7 977.0,893.7 977.5,893.7 978.0,893.8 978.6,893.8 979.1,893.8 979.6,893.8 980.1,893.8 980.6,893.8 981.1,893.8 981.6,893.8 982.2,893.8 982.7,893.8 983.2,893.8 983.7,893.8 984.2,893.8 984.7,893.8 985.2,893.8 985.7,893.8 986.2,893.8 986.7,893.8 987.2,893.8 987.7,893.8 988.2,893.8 988.7,893.8 989.2,893.8 989.7,893.8 990.2,893.8 990.8,893.8 991.3,893.8 991.8,893.8 992.3,893.8 992.8,893.8 993.3,893.8 993.8,893.8 994.3,893.8 994.8,893.8 995.3,893.8 995.8,893.8 996.3,893.8 996.8,893.8 997.3,893.8 997.8,893.8 998.3,893.8 998.8,893.8 999.3,893.8 999.8,893.8 1000.3,893.8 1000.8,893.8 1001.3,893.8 1001.8,893.8 1002.3,893.8 1002.8,893.8 1003.3,893.8 1003.8,893.8 1004.3,893.8 1004.8,893.8 1005.3,893.8 1005.8,893.8 1006.3,893.8 1006.8,893.8 1007.3,893.8 1007.8,893.8 1008.3,893.8 1008.8,893.8 1009.3,893.8 1009.8,893.8 1010.4,893.8 1010.9,893.8 1011.4,893.8 1011.9,893.8 1012.4,893.8 1012.9,893.8 1013.4,893.8 1013.9,893.8 1014.4,893.8 1014.9,893.8 1015.4,893.8 1015.9,893.8 1016.4,893.8 1016.9,893.8 1017.4,893.8 1017.9,893.8 1018.4,893.8 1018.9,893.8 1019.4,893.8 1019.9,893.8 1020.4,893.8 1020.9,893.8 1021.4,893.8 1021.9,893.8 1022.4,893.8 1022.9,893.8 1023.4,893.8 1023.9,893.8 1024.4,893.8 1024.9,893.8 1025.4,893.8 1025.9,893.8 1026.4,893.8 1026.9,893.8 1027.4,893.8 1027.9,893.8 1028.4,893.8 1028.9,893.8 1029.4,893.8 1029.9,893.8 1030.5,893.8 1031.0,893.8 1031.5,893.8 1032.0,893.8 1032.5,893.8 1033.0,893.8 1033.5,893.8 1034.0,893.8 1034.5,893.8 1035.0,893.8 1035.5,893.8 1036.0,893.8 1036.5,893.8 1037.0,893.8 1037.5,893.8 1038.0,893.8 1038.5,893.8 1039.0,893.8 1039.5,893.8 1040.0,893.8 1040.5,893.8 1041.0,893.8 1041.5,893.8 1042.0,893.8 1042.5,893.8 1043.0,893.8 1043.5,893.8 1044.0,893.8 1044.5,893.8 1045.0,893.8 1045.5,893.8 1046.0,893.8 1046.5,893.8 1047.0,893.8 1047.5,893.8 1048.0,893.8 1048.5,893.8 1049.0,893.8 1049.5,893.8 1050.0,893.8 1050.5,893.8 1051.0,893.8 1051.5,893.8 1052.0,893.8 1052.5,893.8 1053.0,893.8 1053.5,893.8 1054.0,893.8 1054.5,893.8 1055.0,893.8 1055.5,893.8 1056.0,893.8 1056.5,893.8 1057.0,893.8 1057.5,893.8 1058.0,893.8 1058.5,893.8 1059.0,893.8 1059.5,893.8 1060.0,893.8 1060.5,893.8 1061.0,893.8 1061.5,893.8 1062.0,893.8 1062.5,893.8 1063.0,893.8 1063.5,893.8 1064.0,893.8 1064.5,893.8 1065.0,893.8 1065.5,893.8 1066.0,893.8 1066.5,893.8 1067.0,893.8 1067.5,893.8 1068.0,893.8 1068.5,893.8 1069.0,893.8 1069.5,893.8 1070.0,893.8 1070.5,893.8 1071.1,893.8 1071.6,893.8 1072.1,893.8 1072.6,893.8 1073.1,893.8 1073.6,893.8 1074.1,893.8 1074.6,893.8 1075.1,893.8 1075.6,893.8 1076.1,893.8 1076.6,893.8 1077.1,893.8 1077.6,893.8 1078.1,893.8 1078.6,893.8 1079.1,893.8 1079.6,893.8 1080.1,893.8 1080.6,893.8 1081.1,893.8 1081.6,893.8 1082.1,893.8 1082.6,893.8 1083.1,893.8 1083.6,893.8 1084.1,893.8 1084.6,893.8 1085.1,893.8 1085.6,893.8 1086.1,893.8 1086.6,893.8 1087.1,893.8 1087.6,893.8 1088.1,893.8 1088.6,893.8 1089.1,893.8 1089.6,893.8 1090.1,893.8 1090.6,893.8 1091.1,893.8 1091.6,893.8 1092.1,893.8 1092.6,893.8 1093.1,893.8 1093.6,893.8 1094.1,893.8 1094.6,893.8 1095.1,893.8 1095.6,893.8 1096.1,893.8 1096.6,893.8 1097.1,893.8 1097.6,893.8 1098.1,893.8 1098.6,893.8 1099.1,893.8 1099.6,893.8 1100.1,893.8 1100.6,893.8 1101.1,893.8 1101.6,893.8 1102.1,893.8 1102.6,893.8 1103.1,893.8 1103.6,893.8 1104.1,893.8 1104.6,893.8 1105.1,893.8 1105.6,893.8 1106.1,893.8 1106.6,893.8 1107.1,893.8 1107.6,893.8 1108.1,893.8 1108.6,893.8 1109.1,893.8 1109.6,893.8 1110.1,893.8 1110.6,893.8 1111.1,893.8 1111.6,893.8 1112.1,893.8 1112.6,893.8 1113.1,893.8 1113.6,893.8 1114.1,893.8 1114.6,893.8 1115.1,893.8 1115.6,893.8 1116.1,893.8 1116.6,893.8 1117.1,893.8 1117.6,893.8 1118.1,893.8 1118.6,893.8 1119.1,893.8 1119.6,893.8 1120.1,893.8 1120.6,893.8 1121.1,893.8 1121.6,893.8 1122.1,893.8 1122.6,893.8 1123.1,893.8 1123.6,893.8 1124.1,893.8 1124.6,893.8 1125.1,893.8 1125.6,893.8 1126.1,893.8 1126.6,893.8 1127.1,893.8 1127.6,893.8 1128.1,893.8 1128.6,893.8 1129.1,893.8 1129.6,893.8 1130.1,893.8 1130.6,893.8 1131.1,893.8 1131.6,893.8 1132.2,893.8 1132.7,893.8 1133.2,893.8 1133.7,893.8 1134.2,893.8 1134.7,893.8 1135.2,893.8 1135.7,893.8 1136.2,893.8 1136.7,893.8 1137.2,893.8 1137.7,893.8 1138.2,893.8 1138.7,893.8 1139.2,893.8 1139.7,893.8 1140.2,893.8 1140.7,893.8 1141.2,893.8 1141.7,893.8 1142.2,893.8 1142.7,893.8 1143.2,893.8 1143.7,893.8 1144.2,893.8 1144.7,893.8 1145.2,893.8 1145.7,893.8 1146.2,893.8 1146.7,893.8 1147.2,893.8 1147.7,893.8 1148.2,893.8 1148.7,893.8 1149.2,893.8 1149.7,893.8 1150.2,893.8 1150.7,893.8 1151.2,893.8 1151.7,893.8 1152.2,893.8 1152.7,893.8 1153.2,893.8 1153.7,893.8 1154.2,893.8 1154.7,893.8 1155.2,893.8 1155.7,893.8 1156.2,893.8 1156.7,893.8 1157.2,893.8 1157.7,893.8 1158.2,893.8 1158.7,893.8 1159.2,893.8 1159.7,893.8 1160.2,893.8 1160.7,893.8 1161.2,893.8 1161.7,893.8 1162.2,893.8 1162.7,893.8 1163.2,893.8 1163.7,893.8 1164.2,893.8 1164.7,893.8 1165.2,893.8 1165.7,893.8 1166.2,893.8 1166.7,893.8 1167.2,893.8 1167.7,893.8 1168.2,893.8 1168.7,893.8 1169.2,893.8 1169.7,893.8 1170.2,893.8 1170.7,893.9 1171.2,893.9 1171.7,894.0 1172.2,894.0 1172.7,894.1 1173.2,894.2 1173.7,894.2 1174.2,894.3 1174.7,894.4 1175.2,894.5 1175.7,894.6 1176.2,894.7 1176.7,894.8 1177.2,894.9 1177.7,895.0 1178.2,895.0 1178.7,895.1 1179.2,895.2 1179.7,895.2 1180.2,895.2 1180.7,895.3 1181.2,895.3 1181.7,895.3 1182.2,895.3 1182.7,895.3 1183.2,895.3 1183.7,895.3 1184.2,895.3 1184.7,895.3 1185.2,895.3 1185.7,895.3 1186.2,895.3 1186.7,895.3 1187.2,895.3 1187.7,895.3 1188.2,895.3 1188.7,895.3 1189.2,895.3 1189.7,895.3 1190.2,895.3 1190.7,895.3 1191.2,895.3 1191.7,895.3 1192.2,895.3 1192.7,895.3 1193.2,895.3 1193.7,895.2 1194.2,895.2 1194.7,895.1 1195.2,895.0 1195.7,894.9 1196.2,894.8 1196.8,894.6 1197.3,894.5 1197.8,894.4 1198.3,894.2 1198.8,894.1 1199.3,893.9 1199.8,893.8 1200.3,893.6 1200.8,893.5 1201.3,893.4 1201.8,893.3 1202.3,893.2 1202.8,893.1 1203.3,893.0 1203.8,893.0 1204.3,893.0 1204.8,893.0 1205.3,893.0 1205.8,893.0 1206.3,893.1 1206.8,893.2 1207.3,893.2 1207.8,893.3 1208.3,893.4 1208.8,893.5 1209.3,893.6 1209.8,893.7 1210.4,893.8 1210.9,893.9 1211.4,894.1 1211.9,894.2 1212.4,894.3 1212.9,894.4 1213.4,894.5 1213.9,894.7 1214.4,894.8 1215.0,895.0 1215.5,895.1 1216.0,895.3 1216.5,895.5 1217.0,895.7 1217.5,895.9 1218.0,896.1 1218.6,896.3 1219.1,896.5 1219.6,896.7 1220.1,897.0 1220.6,897.2 1221.1,897.4 1221.6,897.7 1222.2,897.9 1222.7,898.1 1223.2,898.4 1223.7,898.6 1224.2,898.8 1224.7,899.1 1225.2,899.3 1225.8,899.5 1226.3,899.7 1226.8,900.0 1227.3,900.2 1227.8,900.4 1228.3,900.6 1228.8,900.8 1229.3,901.0 1229.8,901.2 1230.3,901.4 1230.9,901.6 1231.4,901.9 1231.9,902.1 1232.4,902.3 1232.9,902.5 1233.4,902.7 1233.9,902.9 1234.4,903.1 1234.9,903.3 1235.4,903.6 1235.9,903.8 1236.4,904.0 1236.9,904.2 1237.5,904.4 1238.0,904.6 1238.5,904.8 1239.0,905.1 1239.5,905.3 1240.0,905.5 1240.5,905.7 1241.0,905.9 1241.5,906.1 1242.0,906.3 1242.5,906.5 1243.0,906.7 1243.6,907.0 1244.1,907.2 1244.6,907.4 1245.1,907.6 1245.6,907.8 1246.1,908.0 1246.6,908.2 1247.1,908.4 1247.7,908.6 1248.2,908.9 1248.7,909.1 1249.2,909.3 1249.7,909.5 1250.2,909.7 1250.7,909.9 1251.3,910.1 1251.8,910.3 1252.3,910.5 1252.8,910.8 1253.3,911.0 1253.8,911.2 1254.3,911.4 1254.9,911.6 1255.4,911.8 1255.9,912.0 1256.4,912.2 1256.9,912.4 1257.4,912.6 1257.9,912.8 1258.4,912.9 1259.0,913.1 1259.5,913.3 1260.0,913.5 1260.5,913.7 1261.0,914.0 1261.5,914.2 1262.0,914.4 1262.5,914.6 1263.0,914.9 1263.5,915.1 1264.0,915.3 1264.6,915.4 1265.1,915.6 1265.6,915.7 1266.1,915.9 1266.6,915.9 1267.1,916.0 1267.6,916.0 1268.1,916.0 1268.6,916.0 1269.1,916.0 1269.7,916.0 1270.2,916.0 1270.7,916.0 1271.2,916.0 1271.7,916.0 1272.2,916.0 1272.7,916.0 1273.3,916.0 1273.8,916.0 1274.3,916.0 1274.8,916.0 1275.3,916.0 1275.8,915.8 1276.4,915.5 1276.9,915.2 1277.4,914.8 1277.9,914.4 1278.5,913.9 1279.0,913.3 1279.5,912.8 1280.0,912.2 1280.6,911.7 1281.1,911.1 1281.6,910.3 1282.1,909.4 1282.7,908.4 1283.2,907.3 1283.7,906.3 1284.2,905.2 1284.7,904.2 1285.3,903.2 1285.8,902.4 1286.3,901.6 1286.8,900.9 1287.4,900.3 1287.9,899.6 1288.4,898.9 1288.9,898.3 1289.5,897.7 1290.0,897.2 1290.5,896.8 1291.0,896.4 1291.5,896.1 1292.1,895.9 1292.6,895.7 1293.1,895.6 1293.6,895.5 1294.1,895.4 1294.6,895.3 1295.1,895.2 1295.6,895.2 1296.1,895.1 1296.6,895.0 1297.2,895.0 1297.7,894.9 1298.2,894.8 1298.7,894.8 1299.2,894.7 1299.7,894.6 1300.2,894.5 1300.7,894.4 1301.2,894.3 1301.7,894.1 1302.2,893.9 1302.7,893.7 1303.2,893.5 1303.7,893.3 1304.2,893.0 1304.7,892.8 1305.2,892.5 1305.7,892.3 1306.3,892.0 1306.8,891.8 1307.3,891.5 1307.8,891.3 1308.3,891.1 1308.8,891.0 1309.3,890.9 1309.8,890.8 1310.3,890.7 1310.8,890.7 1311.3,890.7 1311.8,890.7 1312.3,890.8 1312.8,890.8 1313.3,890.9 1313.9,891.0 1314.4,891.1 1314.9,891.3 1315.4,891.4 1315.9,891.5 1316.4,891.7 1316.9,891.9 1317.4,892.0 1318.0,892.2 1318.5,892.4 1319.0,892.6 1319.5,892.8 1320.0,893.0 1320.5,893.2 1321.1,893.6 1321.6,894.0 1322.1,894.4 1322.7,894.9 1323.2,895.3 1323.8,895.8 1324.3,896.2 1324.8,896.5 1325.4,896.6 1325.9,896.7 1326.4,896.7 1326.9,896.7 1327.4,896.6 1327.9,896.5 1328.5,896.5 1329.0,896.4 1329.5,896.2 1330.0,896.1 1330.5,896.0 1331.0,895.9 1331.5,895.8 1332.0,895.7 1332.5,895.6 1333.0,895.5 1333.5,895.4 1334.0,895.3 1334.5,895.3 1335.0,895.2 1335.6,895.2 1336.1,895.2 1336.6,895.1 1337.1,895.1 1337.6,895.1 1338.1,895.1 1338.6,895.0 1339.1,895.0 1339.6,895.0 1340.1,894.9 1340.6,894.9 1341.1,894.9 1341.6,894.9 1342.1,894.8 1342.6,894.8 1343.1,894.8 1343.6,894.8 1344.1,894.7 1344.6,894.7 1345.1,894.7 1345.6,894.7 1346.1,894.7 1346.6,894.6 1347.1,894.6 1347.6,894.6 1348.1,894.6 1348.6,894.6 1349.1,894.5 1349.6,894.5 1350.1,894.5 1350.6,894.5 1351.1,894.5 1351.6,894.5 1352.1,894.5 1352.6,894.5 1353.1,894.5 1353.6,894.4 1354.1,894.4 1354.6,894.4 1355.1,894.4 1355.6,894.4 1356.1,894.4 1356.6,894.4 1357.1,894.4 1357.6,894.4 1358.1,894.4 1358.6,894.4 1359.1,894.4 1359.6,894.4 1360.1,894.4 1360.6,894.4 1361.1,894.4 1361.6,894.4 1362.2,894.4 1362.7,894.4 1363.2,894.4 1363.7,894.4 1364.2,894.4 1364.7,894.4 1365.2,894.4 1365.7,894.4 1366.2,894.4 1366.7,894.4 1367.2,894.4 1367.7,894.4 1368.3,894.4 1368.8,894.4 1369.3,894.4 1369.8,894.4 1370.3,894.4 1370.8,894.4 1371.3,894.4 1371.8,894.4 1372.3,894.4 1372.8,894.4 1373.3,894.4 1373.8,894.4 1374.3,894.4 1374.9,894.4 1375.4,894.4 1375.9,894.4 1376.4,894.5 1376.9,894.5 1377.4,894.6 1377.9,894.6 1378.4,894.7 1378.9,894.8 1379.4,894.9 1379.9,895.0 1380.4,895.1 1380.9,895.2 1381.4,895.3 1381.9,895.4 1382.4,895.6 1382.9,895.7 1383.4,895.8 1383.9,896.0 1384.4,896.1 1384.9,896.3 1385.4,896.4 1385.9,896.6 1386.4,896.7 1386.9,896.9 1387.4,897.1 1387.9,897.3 1388.4,897.5 1388.9,897.7 1389.4,898.0 1389.9,898.2 1390.4,898.5 1390.9,898.8 1391.5,899.1 1392.0,899.5 1392.5,899.8 1393.0,900.1 1393.5,900.5 1394.0,900.9 1394.5,901.2 1395.0,901.6 1395.5,902.0 1396.0,902.5 1396.5,902.9 1397.0,903.5 1397.5,904.0 1398.1,904.6 1398.6,905.1 1399.1,905.7 1399.6,906.4 1400.1,907.0 1400.6,907.7 1401.1,908.3 1401.6,909.0 1402.1,909.7 1402.6,910.3 1403.1,911.0 1403.6,911.7 1404.2,912.4 1404.7,913.1 1405.2,913.8 1405.7,914.6 1406.2,915.4 1406.7,916.2 1407.2,917.0 1407.7,917.8 1408.2,918.6 1408.7,919.4 1409.2,920.2 1409.7,921.0 1410.3,921.8 1410.8,922.5 1411.3,923.2 1411.8,924.0 1412.3,924.6 1412.8,925.3 1413.3,926.0 1413.8,926.8 1414.3,927.5 1414.8,928.3 1415.3,929.0 1415.8,929.8 1416.3,930.5 1416.9,931.2 1417.4,931.8 1417.9,932.4 1418.4,933.0 1418.9,933.5 1419.4,933.9 1419.9,934.3 1420.4,934.5 1420.9,934.7 1421.4,934.9 1422.0,935.0 1422.5,935.1 1423.0,935.2 1423.5,935.3 1424.1,935.4 1424.6,935.4 1425.1,935.5 1425.6,935.5 1426.2,935.6 1426.7,935.6 1427.2,935.5 1427.7,935.4 1428.2,935.2 1428.7,934.9 1429.2,934.5 1429.7,934.1 1430.2,933.6 1430.7,933.1 1431.3,932.5 1431.8,931.9 1432.3,931.3 1432.8,930.7 1433.3,930.0 1433.8,929.4 1434.3,928.7 1434.8,928.1 1435.3,927.5 1435.8,926.9 1436.3,926.3 1436.8,925.6 1437.3,924.9 1437.9,924.1 1438.4,923.3 1438.9,922.5 1439.4,921.7 1439.9,920.9 1440.4,920.1 1440.9,919.3 1441.4,918.5 1441.9,917.6 1442.4,916.8 1442.9,916.1 1443.4,915.3 1444.0,914.6 1444.5,913.8 1445.0,913.1 1445.5,912.4 1446.0,911.6 1446.5,910.9 1447.0,910.1 1447.5,909.4 1448.0,908.7 1448.5,907.9 1449.0,907.2 1449.5,906.5 1450.1,905.9 1450.6,905.3 1451.1,904.7 1451.6,904.1 1452.1,903.5 1452.6,903.1 1453.1,902.6 1453.6,902.1 1454.1,901.6 1454.6,901.2 1455.1,900.7 1455.6,900.2 1456.1,899.7 1456.6,899.3 1457.1,898.8 1457.6,898.4 1458.1,898.0 1458.6,897.6 1459.1,897.2 1459.6,896.9 1460.1,896.5 1460.6,896.2 1461.1,895.9 1461.6,895.7 1462.1,895.5 1462.6,895.3 1463.1,895.2 1463.6,895.1 1464.1,895.0 1464.6,895.0 1465.1,894.9 1465.6,894.9 1466.2,894.9 1466.7,894.8 1467.2,894.8 1467.7,894.8 1468.2,894.7 1468.7,894.7 1469.2,894.7 1469.8,894.7 1470.3,894.7 1470.8,894.7 1471.3,894.6 1471.8,894.6 1472.3,894.6 1472.8,894.6 1473.4,894.6 1473.9,894.6 1474.4,894.6 1474.9,894.5 1475.4,894.5 1475.9,894.5 1476.4,894.5 1477.0,894.5 1477.5,894.5 1478.0,894.4 1478.5,894.4 1479.0,894.4 1479.5,894.4 1480.0,894.3 1480.5,894.3 1481.0,894.3 1481.5,894.2 1482.0,894.2 1482.5,894.2 1483.0,894.1 1483.5,894.1 1484.0,894.1 1484.5,894.0 1485.0,894.0 1485.5,894.0 1486.0,894.0 1486.5,893.9 1487.0,893.9 1487.5,893.9 1488.0,893.9 1488.5,893.9 1489.0,893.8 1489.5,893.8 1490.0,893.8 1490.5,893.8 1491.0,893.8 1491.5,893.8 1492.0,893.8 1492.5,893.8 1493.0,893.8 1493.5,893.8 1494.0,893.8 1494.5,893.8 1495.0,893.8 1495.5,893.8 1496.0,893.8 1496.5,893.8 1497.0,893.8 1497.6,893.8 1498.1,893.8 1498.6,893.8 1499.1,893.8 1499.6,893.8 1500.1,893.8 1500.6,893.8 1501.1,893.8 1501.6,893.8 1502.1,893.8 1502.6,893.8 1503.1,893.8 1503.6,893.8 1504.1,893.8 1504.6,893.8 1505.1,893.8 1505.6,893.8 1506.1,893.8 1506.6,893.8 1507.1,893.8 1507.6,893.8 1508.1,893.8 1508.6,893.8 1509.1,893.8 1509.6,893.8 1510.1,893.8 1510.6,893.8 1511.1,893.8 1511.6,893.8 1512.1,893.8 1512.6,893.8 1513.1,893.8 1513.6,893.8 1514.1,893.8 1514.6,893.8 1515.1,893.8 1515.6,893.8 1516.1,893.8 1516.6,893.8 1517.1,893.8 1517.6,893.8 1518.1,893.8 1518.6,893.8 1519.1,893.8 1519.6,893.8 1520.2,893.8 1520.7,893.8 1521.2,893.8 1521.7,893.8 1522.2,893.8 1522.7,893.8 1523.2,893.8 1523.7,893.8 1524.2,893.8 1524.7,893.8 1525.2,893.8 1525.7,893.8 1526.2,893.8 1526.7,893.8 1527.2,893.8 1527.7,893.8 1528.2,893.8 1528.7,893.8 1529.2,893.8 1529.7,893.8 1530.2,893.8 1530.7,893.8 1531.2,893.8 1531.7,893.8 1532.2,893.8 1532.7,893.8 1533.2,893.8 1533.7,893.8 1534.2,893.8 1534.7,893.8 1535.2,893.8 1535.7,893.8 1536.2,893.8 1536.7,893.8 1537.2,893.8 1537.7,893.8 1538.2,893.8 1538.7,893.8 1539.2,893.8 1539.7,893.8 1540.2,893.8 1540.7,893.8 1541.2,893.8 1541.7,893.8 1542.2,893.8 1542.7,893.8 1543.3,893.8 1543.8,893.8 1544.3,893.8 1544.8,893.8 1545.3,893.8 1545.8,893.8 1546.3,893.8 1546.8,893.8 1547.3,893.8 1547.8,893.8 1548.3,893.8 1548.8,893.8 1549.3,893.8 1549.8,893.8 1550.3,893.8 1550.8,893.8 1551.3,893.8 1551.8,893.8 1552.3,893.8 1552.8,893.8 1553.3,893.8 1553.8,893.8 1554.3,893.8 1554.8,893.8 1555.3,893.8 1555.8,893.8 1556.3,893.8 1556.8,893.8 1557.3,893.8 1557.8,893.8 1558.3,893.8 1558.8,893.8 1559.3,893.8 1559.8,893.8 1560.3,893.8 1560.8,893.8 1561.3,893.8 1561.8,893.8 1562.3,893.8 1562.8,893.8 1563.3,893.8 1563.8,893.8 1564.3,893.8 1564.8,893.8 1565.3,893.8 1565.9,893.8 1566.4,893.8 1566.9,893.8 1567.4,893.8 1567.9,893.8 1568.4,893.8 1568.9,893.8 1569.4,893.8 1569.9,893.8 1570.4,893.8 1570.9,893.8 1571.4,893.8 1571.9,893.8 1572.4,893.8 1572.9,893.8 1573.4,893.8 1573.9,893.8 1574.4,893.8 1574.9,893.8 1575.4,893.8 1575.9,893.8 1576.4,893.8 1576.9,893.8 1577.4,893.8 1577.9,893.8 1578.4,893.8 1578.9,893.8 1579.4,893.8 1579.9,893.8 1580.4,893.8 1580.9,893.8 1581.4,893.8 1581.9,893.8 1582.4,893.8 1582.9,893.8 1583.4,893.8 1583.9,893.8 1584.4,893.8 1584.9,893.8 1585.4,893.8 1585.9,893.8 1586.4,893.8 1586.9,893.8 1587.4,893.8 1587.9,893.8 1588.4,893.8 1589.0,893.8 1589.5,893.8 1590.0,893.8 1590.5,893.8 1591.0,893.8 1591.5,893.8 1592.0,893.8 1592.5,893.8 1593.0,893.8 1593.5,893.8 1594.0,893.8 1594.5,893.8 1595.0,893.8 1595.5,893.8 1596.0,893.8 1596.5,893.8 1597.0,893.8 1597.5,893.8 1598.0,893.8 1598.5,893.8 1599.0,893.8 1599.5,893.8 1600.0,893.8 1600.5,893.8 1601.0,893.8 1601.5,893.8 1602.0,893.8 1602.5,893.8 1603.0,893.8 1603.5,893.8 1604.0,893.8 1604.5,893.8 1605.0,893.8 1605.6,893.8 1606.1,893.8 1606.6,893.8 1607.1,893.8 1607.6,893.8 1608.1,893.8 1608.6,893.8 1609.1,893.8 1609.6,893.8 1610.1,893.8 1610.6,893.8 1611.1,893.8 1611.6,893.8 1612.1,893.8 1612.6,893.8 1613.1,893.8 1613.6,893.8 1614.1,893.8 1614.6,893.8 1615.1,893.8 1615.7,893.8 1616.2,893.8 1616.7,893.8 1617.2,893.8 1617.7,893.8 1618.2,893.8 1618.7,893.8 1619.2,893.8 1619.7,893.8 1620.2,893.8 1620.7,893.8 1621.2,893.8 1621.7,893.8 1622.2,893.8 1622.7,893.8 1623.2,893.8 1623.7,893.8 1624.2,893.8 1624.7,893.8 1625.2,893.8 1625.8,893.8 1626.3,893.8 1626.8,893.8 1627.3,893.8 1627.8,893.8 1628.3,893.8 1628.8,893.8 1629.3,893.8 1629.8,893.8 1630.3,893.8 1630.8,893.8 1631.3,893.8 1631.8,893.8 1632.3,893.8 1632.8,893.8 1633.3,893.8 1633.8,893.8 1634.3,893.8 1634.8,893.8 1635.3,893.8 1635.8,893.8 1636.3,893.8 1636.8,893.8 1637.3,893.8 1637.8,893.8 1638.3,893.8 1638.8,893.8 1639.3,893.8 1639.8,893.8 1640.3,893.8 1640.8,893.8 1641.3,893.8 1641.8,893.8 1642.3,893.8 1642.8,893.8 1643.3,893.8 1643.8,893.8 1644.3,893.8 1644.8,893.8 1645.4,893.8 1645.9,893.8 1646.4,893.8 1646.9,893.8 1647.4,893.8 1647.9,893.8 1648.4,893.8 1648.9,893.8 1649.4,893.8 1649.9,893.8 1650.4,893.8 1650.9,893.8 1651.4,893.8 1651.9,893.8 1652.4,893.8 1652.9,893.8 1653.4,893.8 1653.9,893.8 1654.4,893.8 1654.9,893.8 1655.4,893.8 1655.9,893.8 1656.4,893.8 1656.9,893.8 1657.4,893.8 1657.9,893.8 1658.4,893.8 1658.9,893.8 1659.4,893.8 1659.9,893.8 1660.4,893.8 1660.9,893.8 1661.4,893.8 1661.9,893.8 1662.4,893.8 1662.9,893.8 1663.4,893.8 1663.9,893.8 1664.4,893.8 1664.9,893.8 1665.4,893.8 1665.9,893.8 1666.4,893.8 1666.9,893.8 1667.4,893.8 1667.9,893.8 1668.4,893.8 1668.9,893.8 1669.4,893.8 1670.0,893.8 1670.5,893.8 1671.0,893.8 1671.5,893.8 1672.0,893.8 1672.5,893.8 1673.0,893.8 1673.5,893.8 1674.0,893.8 1674.5,893.8 1675.0,893.8 1675.5,893.8 1676.0,893.8 1676.5,893.8 1677.0,893.8 1677.5,893.8 1678.0,893.8 1678.5,893.8 1679.0,893.8 1679.5,893.8 1680.0,893.8 1680.5,893.8 1681.0,893.8 1681.5,893.8 1682.0,893.8 1682.5,893.8 1683.0,893.8 1683.5,893.8 1684.0,893.8 1684.5,893.8 1685.0,893.8 1685.5,893.8 1686.0,893.8 1686.5,893.8 1687.0,893.8 1687.5,893.8 1688.0,893.8 1688.5,893.8 1689.0,893.8 1689.5,893.8 1690.0,893.8 1690.5,893.8 1691.0,893.8 1691.5,893.8 1692.0,893.8 1692.5,893.8 1693.0,893.8 1693.5,893.8 1694.0,893.8 1694.6,893.8 1695.1,893.8 1695.6,893.8 1696.1,893.8 1696.6,893.8 1697.1,893.8 1697.6,893.8 1698.1,893.8 1698.6,893.8 1699.1,893.8 1699.6,893.8 1700.1,893.8 1700.6,893.8 1701.1,893.8 1701.6,893.8 1702.1,893.8 1702.6,893.8 1703.1,893.8 1703.6,893.8 1704.1,893.8 1704.6,893.8 1705.1,893.8 1705.6,893.8 1706.1,893.8 1706.6,893.8 1707.1,893.8 1707.6,893.8 1708.1,893.8 1708.6,893.8 1709.1,893.8 1709.6,893.8 1710.1,893.8 1710.6,893.8 1711.1,893.8 1711.6,893.8 1712.1,893.8 1712.6,893.8 1713.1,893.8 1713.6,893.8 1714.1,893.8 1714.6,893.8 1715.1,893.8 1715.6,893.8 1716.1,893.8 1716.6,893.8 1717.1,893.8 1717.6,893.9 1718.1,893.9 1718.6,893.9 1719.1,894.0 1719.6,894.0 1720.1,894.1 1720.6,894.1 1721.1,894.2 1721.6,894.2 1722.1,894.3 1722.6,894.3 1723.1,894.4 1723.6,894.5 1724.1,894.6 1724.6,894.6 1725.1,894.7 1725.6,894.8 1726.1,894.9 1726.6,894.9 1727.1,895.0 1727.6,895.1 1728.1,895.2 1728.7,895.4 1729.2,895.5 1729.7,895.6 1730.2,895.8 1730.7,896.0 1731.2,896.1 1731.7,896.3 1732.2,896.5 1732.7,896.7 1733.2,897.0 1733.7,897.2 1734.2,897.4 1734.7,897.7 1735.2,897.9 1735.7,898.2 1736.2,898.4 1736.7,898.7 1737.2,899.0 1737.7,899.3 1738.2,899.5 1738.7,899.9 1739.2,900.2 1739.7,900.6 1740.2,901.0 1740.7,901.4 1741.2,901.8 1741.7,902.3 1742.2,902.8 1742.7,903.3 1743.2,903.8 1743.7,904.4 1744.2,904.9 1744.7,905.5 1745.2,906.1 1745.7,906.7 1746.2,907.3 1746.7,907.9 1747.2,908.5 1747.7,909.1 1748.2,909.8 1748.7,910.4 1749.2,911.0 1749.7,911.6 1750.2,912.3 1750.7,912.9 1751.2,913.6 1751.7,914.4 1752.2,915.1 1752.7,915.9 1753.2,916.7 1753.7,917.5 1754.2,918.3 1754.7,919.1 1755.2,919.9 1755.7,920.7 1756.2,921.6 1756.7,922.4 1757.2,923.2 1757.7,924.0 1758.2,924.7 1758.7,925.5 1759.2,926.2 1759.7,927.0 1760.2,927.6 1760.7,928.3 1761.2,928.9 1761.7,929.5 1762.2,930.2 1762.7,930.8 1763.2,931.5 1763.7,932.2 1764.2,932.9 1764.7,933.6 1765.2,934.2 1765.8,934.9 1766.3,935.5 1766.8,936.1 1767.3,936.7 1767.8,937.2 1768.3,937.7 1768.8,938.2 1769.3,938.6 1769.8,938.9 1770.3,939.2 1770.8,939.4 1771.3,939.5 1771.8,939.6 1772.3,939.5 1772.9,939.4 1773.4,939.3 1773.9,939.1 1774.4,938.9 1774.9,938.6 1775.4,938.3 1775.9,938.0 1776.4,937.6 1776.9,937.3 1777.4,936.9 1777.9,936.5 1778.5,936.1 1779.0,935.7 1779.5,935.2 1780.0,934.6 1780.5,934.0 1781.0,933.3 1781.5,932.5 1782.0,931.7 1782.5,930.9 1783.0,930.1 1783.5,929.2 1784.0,928.3 1784.6,927.4 1785.1,926.5 1785.6,925.7 1786.1,924.8 1786.6,924.0 1787.1,923.1 1787.6,922.4 1788.1,921.5 1788.6,920.7 1789.1,919.8 1789.6,918.9 1790.1,918.1 1790.6,917.2 1791.1,916.3 1791.6,915.3 1792.1,914.4 1792.6,913.5 1793.1,912.7 1793.6,911.8 1794.1,910.9 1794.6,910.1 1795.1,909.2 1795.6,908.5 1796.1,907.7 1796.6,907.0 1797.1,906.3 1797.6,905.6 1798.1,905.0 1798.6,904.4 1799.1,903.9 1799.6,903.4 1800.1,902.9 1800.6,902.4 1801.1,901.9 1801.6,901.4 1802.1,900.9 1802.6,900.4 1803.1,900.0 1803.6,899.5 1804.1,899.1 1804.6,898.7 1805.1,898.3 1805.6,897.9 1806.1,897.5 1806.6,897.2 1807.1,896.8 1807.6,896.5 1808.1,896.2 1808.6,895.9 1809.1,895.7 1809.6,895.4 1810.1,895.2 1810.6,895.0 1811.1,894.8 1811.6,894.7 1812.1,894.5 1812.6,894.4 1813.1,894.2 1813.6,894.1 1814.1,893.9 1814.6,893.8 1815.1,893.7 1815.6,893.6 1816.1,893.5 1816.6,893.4 1817.1,893.2 1817.6,893.1 1818.1,893.0 1818.6,892.9 1819.1,892.8 1819.6,892.6 1820.1,892.5 1820.6,892.4 1821.1,892.2 1821.6,892.1 1822.1,891.9 1822.7,891.7 1823.2,891.6 1823.7,891.4 1824.2,891.2 1824.7,891.1 1825.2,890.9 1825.7,890.7 1826.2,890.6 1826.7,890.4 1827.2,890.2 1827.7,889.9 1828.2,889.7 1828.7,889.5 1829.3,889.2 1829.8,888.9 1830.3,888.6 1830.8,888.3 1831.3,887.8 1831.8,887.4 1832.3,886.8 1832.8,886.2 1833.3,885.6 1833.8,884.9 1834.3,884.2 1834.8,883.4 1835.3,882.6 1835.9,881.8 1836.4,881.0 1836.9,880.2 1837.4,879.4 1837.9,878.6 1838.4,877.9 1838.9,877.1 1839.4,876.3 1839.9,875.5 1840.4,874.6 1840.9,873.8 1841.4,872.8 1842.0,871.9 1842.5,871.0 1843.0,870.1 1843.5,869.1 1844.0,868.2 1844.5,867.3 1845.0,866.4 1845.5,865.6 1846.0,864.8 1846.5,864.0 1847.0,863.3 1847.5,862.7 1848.0,862.1 1848.6,861.5 1849.1,860.9 1849.6,860.2 1850.1,859.6 1850.6,859.0 1851.1,858.5 1851.6,857.9 1852.1,857.4 1852.6,856.9 1853.1,856.4 1853.6,856.0 1854.1,855.6 1854.7,855.3 1855.2,855.0 1855.7,854.8 1856.2,854.6 1856.7,854.5 1857.2,854.4 1857.7,854.3 1858.2,854.2 1858.7,854.1 1859.2,854.0 1859.7,853.9 1860.2,853.9 1860.7,853.8 1861.3,853.7 1861.8,853.7 1862.3,853.6 1862.8,853.6 1863.3,853.5 1863.8,853.5 1864.3,853.5 1864.8,853.5 1865.3,853.5 1865.8,853.6 1866.3,853.8 1866.8,854.0 1867.3,854.2 1867.9,854.5 1868.4,854.8 1868.9,855.1 1869.4,855.5 1869.9,855.8 1870.4,856.2 1870.9,856.6 1871.4,857.0 1871.9,857.4 1872.4,857.7 1872.9,858.1 1873.4,858.4 1873.9,858.7 1874.4,859.0 1874.9,859.3 1875.4,859.6 1875.9,859.9 1876.4,860.2 1876.9,860.5 1877.4,860.8 1878.0,861.1 1878.5,861.5 1879.0,861.8 1879.5,862.1 1880.0,862.4 1880.5,862.7 1881.0,863.0 1881.5,863.4 1882.0,863.7 1882.5,864.0 1883.0,864.3 1883.5,864.6 1884.0,865.0 1884.5,865.3 1885.0,865.6 1885.5,865.9 1886.0,866.2 1886.5,866.5 1887.0,866.8 1887.5,867.2 1888.0,867.5 1888.5,867.8 1889.0,868.1 1889.5,868.4 1890.0,868.7 1890.5,869.1 1891.0,869.4 1891.5,869.7 1892.0,870.0 1892.5,870.3 1893.0,870.6 1893.5,871.0 1894.0,871.3 1894.5,871.6 1895.0,871.9" fill="none" stroke="#1ac938" stroke-width="1.5" stroke-linejoin="round" /></g></g></svg>
</body></html>
